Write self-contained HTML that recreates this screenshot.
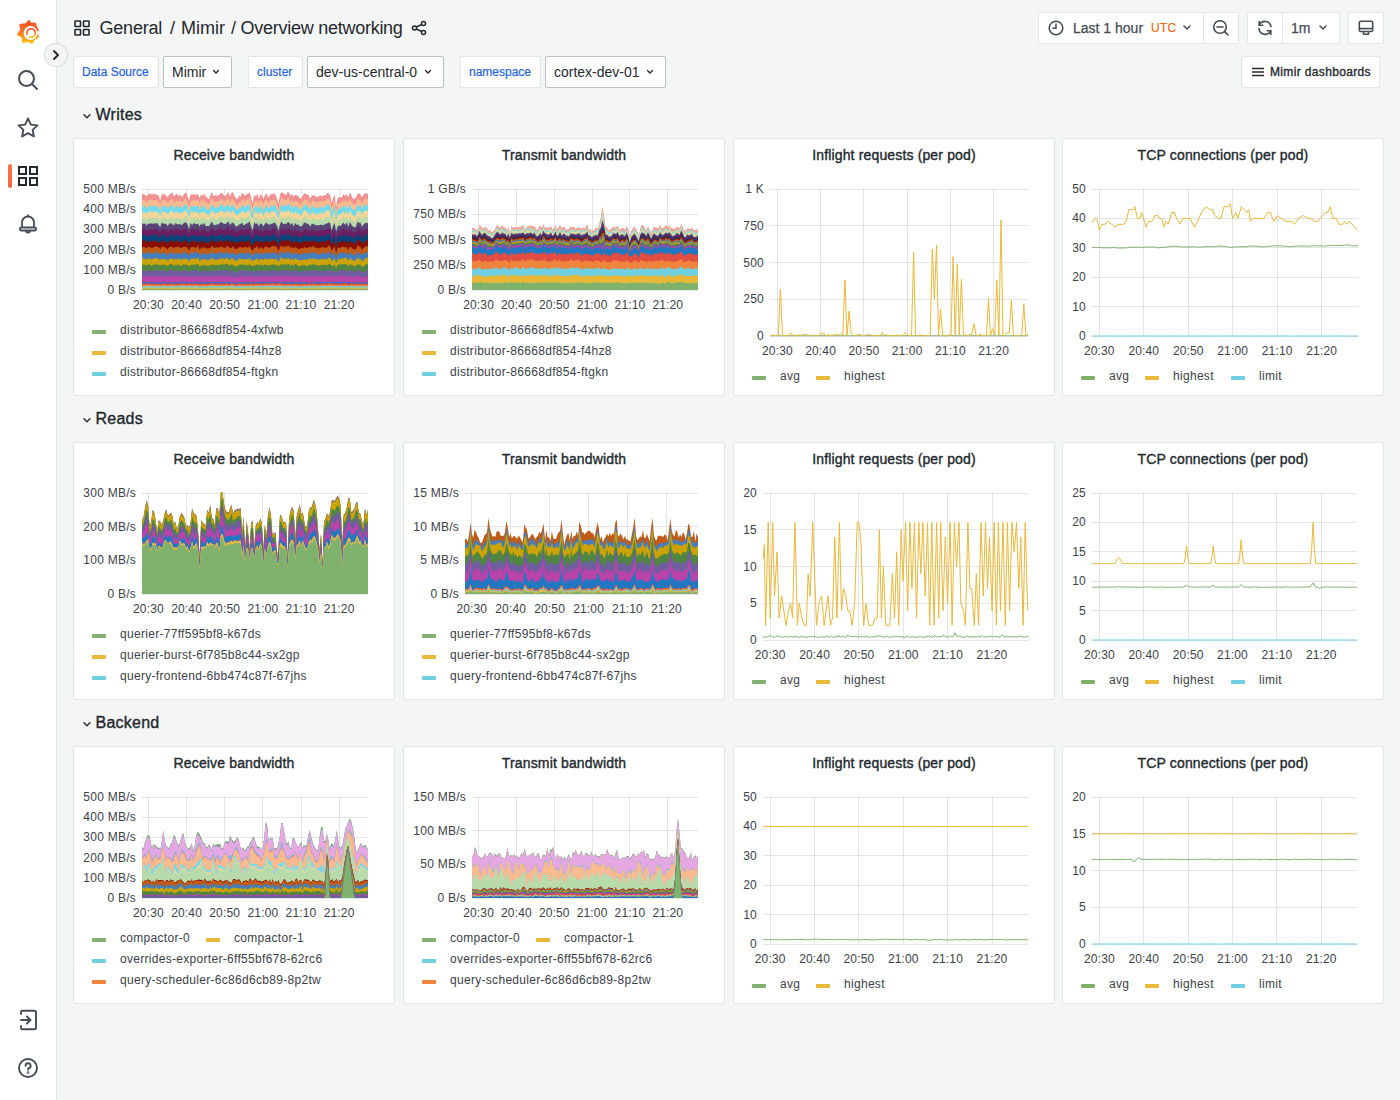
<!DOCTYPE html><html><head><meta charset="utf-8"><style>
*{box-sizing:border-box}
html,body{margin:0;padding:0}
body{width:1400px;height:1100px;overflow:hidden;position:relative;background:#F4F5F5;font-family:"Liberation Sans",sans-serif;color:#24292E}
div{position:absolute;white-space:nowrap}
.panel{background:#fff;border:1px solid rgba(36,41,46,0.12);border-radius:3px}
.ptitle{text-align:center;font-size:14px;font-weight:normal;letter-spacing:0.15px;line-height:20px;color:#24292E;-webkit-text-stroke:0.38px #24292E}
.yl{font-size:12px;line-height:14px;color:#3b4148;text-align:right;letter-spacing:0.25px}
.xl{font-size:12px;line-height:14px;color:#3b4148;width:32px;text-align:center;letter-spacing:0.15px}
.lg{width:14px;height:4px;border-radius:1px}
.lt{font-size:12px;line-height:16px;color:#3b4148;letter-spacing:0.3px}
.row{font-size:16px;font-weight:normal;color:#24292E;line-height:20px;-webkit-text-stroke:0.38px #24292E;letter-spacing:0.25px}
.box{background:#fff;border:1px solid rgba(36,41,46,0.12);border-radius:2px;height:32px}
.sel{background:#fff;border:1px solid rgba(36,41,46,0.30);border-radius:2px;height:32px}
.lbl{color:#1F62E0;font-size:12px;font-weight:normal;line-height:30px;-webkit-text-stroke:0.2px #1F62E0}
.stx{font-size:14px;line-height:30px;color:#24292E}
</style></head><body>
<div style="left:0;top:0;width:57px;height:1100px;background:#fff;border-right:1px solid rgba(36,41,46,0.12)"></div>
<svg style="position:absolute;left:16px;top:19px" width="24" height="26" viewBox="0 0 24 26">
<defs><linearGradient id="gl" x1="0" y1="0" x2="0" y2="1"><stop offset="0" stop-color="#F2502A"/><stop offset="0.45" stop-color="#F26B1F"/><stop offset="0.8" stop-color="#F9AA10"/><stop offset="1" stop-color="#FBBF0A"/></linearGradient></defs>
<path fill="url(#gl)" stroke="url(#gl)" stroke-width="0.6" stroke-linejoin="round" d="M3.5,5.4 L9.5,4.5 L12.9,1.1 L15.1,3.8 L19.6,4.1 L20.6,7.2 L22.7,11.6 L21.6,14.2 L22.7,18.4 L18,21.3 L16.3,24.6 L11.8,22.7 L6.6,23.6 L5.9,18.4 L1.2,15.4 L4.5,10.6Z"/>
<circle cx="14.6" cy="14.1" r="7.0" fill="#fff"/>
<path d="M14.5,14 L24,11.9 L24,14.3Z" fill="#fff"/>
<path d="M11.25,15.64 A4.2,4.2 0 1 1 13.9,18.0" fill="none" stroke="url(#gl)" stroke-width="1.6" stroke-linecap="round"/>

</svg>
<svg style="position:absolute;left:17px;top:69px" width="22" height="22" viewBox="0 0 22 22"><circle cx="9.5" cy="9.5" r="7.5" fill="none" stroke="#464c54" stroke-width="2"/><line x1="15" y1="15" x2="20" y2="20" stroke="#464c54" stroke-width="2" stroke-linecap="round"/></svg>
<svg style="position:absolute;left:16px;top:116px" width="24" height="24" viewBox="0 0 24 24"><path d="M12,2.5 L14.9,8.6 L21.5,9.4 L16.6,13.9 L17.9,20.5 L12,17.2 L6.1,20.5 L7.4,13.9 L2.5,9.4 L9.1,8.6Z" fill="none" stroke="#464c54" stroke-width="1.9" stroke-linejoin="round"/></svg>
<div style="left:8px;top:164px;width:4px;height:24px;border-radius:2px;background:linear-gradient(#FF7941,#F55F3E)"></div>
<svg style="position:absolute;left:17px;top:165px" width="22" height="22" viewBox="0 0 22 22" fill="none" stroke="#24292E" stroke-width="2"><rect x="2" y="2" width="7" height="7"/><rect x="13" y="2" width="7" height="7"/><rect x="2" y="13" width="7" height="7"/><rect x="13" y="13" width="7" height="7"/></svg>
<svg style="position:absolute;left:18px;top:213px" width="20" height="22" viewBox="0 0 20 22" fill="none" stroke="#464c54" stroke-width="1.8" stroke-linejoin="round"><path d="M10,1.5 V3.5"/><path d="M4,14.5 V9.5 A6,6 0 0 1 16,9.5 V14.5"/><rect x="2" y="14.5" width="16" height="3" rx="1"/><path d="M8,17.5 A2,2 0 0 0 12,17.5"/></svg>
<svg style="position:absolute;left:18px;top:1009px" width="22" height="22" viewBox="0 0 22 22" fill="none" stroke="#464c54" stroke-width="1.9" stroke-linecap="round" stroke-linejoin="round"><path d="M3,5 V3 A1.2,1.2 0 0 1 4.2,1.8 H16.8 A1.2,1.2 0 0 1 18,3 V19 A1.2,1.2 0 0 1 16.8,20.2 H4.2 A1.2,1.2 0 0 1 3,19 V17"/><path d="M3,11 H12"/><path d="M9,7.5 L12.5,11 L9,14.5"/></svg>
<svg style="position:absolute;left:17px;top:1057px" width="22" height="22" viewBox="0 0 22 22" fill="none" stroke="#464c54" stroke-width="1.9" stroke-linecap="round"><circle cx="11" cy="11" r="9"/><path d="M8.6,8.8 A2.5,2.5 0 1 1 11.8,11.2 Q11,11.6 11,12.6"/><circle cx="11" cy="15.6" r="0.4" fill="#464c54"/></svg>
<div style="left:44px;top:43px;width:24px;height:24px;border-radius:12px;background:#F4F5F5;border:1px solid rgba(36,41,46,0.12)"></div>
<svg style="position:absolute;left:50px;top:49px" width="12" height="12" viewBox="0 0 12 12"><path d="M4,2 L8,6 L4,10" fill="none" stroke="#24292E" stroke-width="1.9" stroke-linecap="round" stroke-linejoin="round"/></svg>
<svg style="position:absolute;left:74px;top:20px" width="16" height="16" viewBox="0 0 16 16" fill="none" stroke="#24292E" stroke-width="1.6"><rect x="1" y="1" width="5.5" height="5.5" rx="0.5"/><rect x="9.5" y="1" width="5.5" height="5.5" rx="0.5"/><rect x="1" y="9.5" width="5.5" height="5.5" rx="0.5"/><rect x="9.5" y="9.5" width="5.5" height="5.5" rx="0.5"/></svg>
<div style="left:99.5px;top:16px;font-size:18px;line-height:24px;color:#24292E;letter-spacing:-0.2px">General</div>
<div style="left:170px;top:16px;font-size:18px;line-height:24px;color:#24292E">/</div>
<div style="left:181px;top:16px;font-size:18px;line-height:24px;color:#24292E">Mimir</div>
<div style="left:231px;top:16px;font-size:18px;line-height:24px;color:#24292E">/</div>
<div style="left:240.5px;top:16px;font-size:18px;line-height:24px;color:#24292E;letter-spacing:-0.26px">Overview networking</div>
<svg style="position:absolute;left:411px;top:20px" width="16" height="16" viewBox="0 0 16 16" fill="none" stroke="#24292E" stroke-width="1.5"><circle cx="12.5" cy="3.5" r="2"/><circle cx="3.5" cy="8" r="2"/><circle cx="12.5" cy="12.5" r="2"/><path d="M5.3,7 L10.7,4.5 M5.3,9 L10.7,11.5"/></svg>
<div class="box" style="left:1038px;top:12px;width:201px;height:32px"></div>
<div style="left:1203px;top:13px;width:1px;height:30px;background:rgba(36,41,46,0.12)"></div>
<svg style="position:absolute;left:1048px;top:20px" width="16" height="16" viewBox="0 0 16 16" fill="none" stroke="#464c54" stroke-width="1.5"><circle cx="8" cy="8" r="6.8"/><path d="M8,4 V8.3 H5" stroke-linecap="round"/></svg>
<div style="left:1073px;top:14px;font-size:14px;line-height:28px;color:#464c54;-webkit-text-stroke:0.25px #464c54">Last 1 hour</div>
<div style="left:1151px;top:14px;font-size:12px;line-height:28px;color:#EF6B15;-webkit-text-stroke:0.2px #EF6B15;letter-spacing:0.3px">UTC</div>
<svg style="position:absolute;left:1182px;top:24px" width="10" height="8" viewBox="0 0 10 8"><path d="M2,2 L5,5 L8,2" fill="none" stroke="#464c54" stroke-width="1.5" stroke-linecap="round"/></svg>
<svg style="position:absolute;left:1212px;top:19px" width="18" height="18" viewBox="0 0 18 18" fill="none" stroke="#464c54" stroke-width="1.6"><circle cx="8" cy="8" r="6.3"/><path d="M5,8 H11" stroke-linecap="round"/><path d="M12.6,12.6 L16,16" stroke-linecap="round"/></svg>
<div class="box" style="left:1247px;top:12px;width:93px;height:32px"></div>
<div style="left:1282px;top:13px;width:1px;height:30px;background:rgba(36,41,46,0.12)"></div>
<svg style="position:absolute;left:1256px;top:19px" width="18" height="18" viewBox="0 0 18 18" fill="none" stroke="#464c54" stroke-width="1.6" stroke-linecap="round" stroke-linejoin="round"><path d="M15,7.5 A6.2,6.2 0 0 0 3.3,6"/><path d="M3,9.5 A6.2,6.2 0 0 0 14.7,12"/><path d="M3.2,2.5 V6.2 H6.8"/><path d="M14.8,15.5 V11.8 H11.2"/></svg>
<div style="left:1291px;top:14px;font-size:14px;line-height:28px;color:#464c54;-webkit-text-stroke:0.25px #464c54">1m</div>
<svg style="position:absolute;left:1318px;top:24px" width="10" height="8" viewBox="0 0 10 8"><path d="M2,2 L5,5 L8,2" fill="none" stroke="#464c54" stroke-width="1.5" stroke-linecap="round"/></svg>
<div class="box" style="left:1348px;top:12px;width:36px;height:32px"></div>
<svg style="position:absolute;left:1357px;top:19px" width="18" height="18" viewBox="0 0 18 18" fill="none" stroke="#464c54" stroke-width="1.6" stroke-linejoin="round"><rect x="2.3" y="2.2" width="13.4" height="10.3" rx="1.5"/><path d="M2.3,9.6 H15.7"/><path d="M6.5,12.5 V15.2 H11.5 V12.5"/></svg>
<div class="box" style="left:1241px;top:56px;width:139px;height:32px"></div>
<svg style="position:absolute;left:1251px;top:65px" width="14" height="14" viewBox="0 0 14 14" stroke="#24292E" stroke-width="1.4"><path d="M1,3.5 H13 M1,7 H13 M1,10.5 H13"/></svg>
<div style="left:1270px;top:57px;font-size:12px;line-height:30px;color:#24292E;letter-spacing:0.35px;-webkit-text-stroke:0.35px #24292E">Mimir dashboards</div>
<div class="box" style="left:73px;top:56px;width:86px"></div><div class="lbl" style="left:82px;top:57px">Data Source</div>
<div class="sel" style="left:163px;top:56px;width:69px"></div><div class="stx" style="left:172px;top:57px">Mimir</div>
<svg style="position:absolute;left:211px;top:68px" width="10" height="8" viewBox="0 0 10 8"><path d="M2.5,2.5 L5,5 L7.5,2.5" fill="none" stroke="#24292E" stroke-width="1.3" stroke-linecap="round"/></svg>
<div class="box" style="left:248px;top:56px;width:55px"></div><div class="lbl" style="left:257px;top:57px">cluster</div>
<div class="sel" style="left:307px;top:56px;width:137px"></div><div class="stx" style="left:316px;top:57px">dev-us-central-0</div>
<svg style="position:absolute;left:423px;top:68px" width="10" height="8" viewBox="0 0 10 8"><path d="M2.5,2.5 L5,5 L7.5,2.5" fill="none" stroke="#24292E" stroke-width="1.3" stroke-linecap="round"/></svg>
<div class="box" style="left:460px;top:56px;width:81px"></div><div class="lbl" style="left:469px;top:57px">namespace</div>
<div class="sel" style="left:545px;top:56px;width:121px"></div><div class="stx" style="left:554px;top:57px">cortex-dev-01</div>
<svg style="position:absolute;left:645px;top:68px" width="10" height="8" viewBox="0 0 10 8"><path d="M2.5,2.5 L5,5 L7.5,2.5" fill="none" stroke="#24292E" stroke-width="1.3" stroke-linecap="round"/></svg>
<svg style="position:absolute;left:82px;top:113px" width="10" height="8" viewBox="0 0 10 8"><path d="M2,1.8 L5,4.8 L8,1.8" fill="none" stroke="#24292E" stroke-width="1.4" stroke-linecap="round" stroke-linejoin="round"/></svg>
<div class="row" style="left:95.5px;top:105px">Writes</div>
<svg style="position:absolute;left:82px;top:417px" width="10" height="8" viewBox="0 0 10 8"><path d="M2,1.8 L5,4.8 L8,1.8" fill="none" stroke="#24292E" stroke-width="1.4" stroke-linecap="round" stroke-linejoin="round"/></svg>
<div class="row" style="left:95.5px;top:409px">Reads</div>
<svg style="position:absolute;left:82px;top:721px" width="10" height="8" viewBox="0 0 10 8"><path d="M2,1.8 L5,4.8 L8,1.8" fill="none" stroke="#24292E" stroke-width="1.4" stroke-linecap="round" stroke-linejoin="round"/></svg>
<div class="row" style="left:95.5px;top:713px">Backend</div>
<div class="panel" style="left:73px;top:138px;width:322px;height:258px"></div><div class="ptitle" style="left:73px;top:144.5px;width:322px">Receive bandwidth</div>
<svg style="position:absolute;left:142px;top:188px" width="226" height="103" viewBox="0 -1 226 103">
<line x1="0" x2="226" y1="101.5" y2="101.5" stroke="rgba(36,41,46,0.12)" stroke-width="1"/>
<line x1="0" x2="226" y1="80.5" y2="80.5" stroke="rgba(36,41,46,0.12)" stroke-width="1"/>
<line x1="0" x2="226" y1="60.5" y2="60.5" stroke="rgba(36,41,46,0.12)" stroke-width="1"/>
<line x1="0" x2="226" y1="40.5" y2="40.5" stroke="rgba(36,41,46,0.12)" stroke-width="1"/>
<line x1="0" x2="226" y1="20.5" y2="20.5" stroke="rgba(36,41,46,0.12)" stroke-width="1"/>
<line x1="0" x2="226" y1="0.5" y2="0.5" stroke="rgba(36,41,46,0.12)" stroke-width="1"/>
<line x1="6.5" x2="6.5" y1="0" y2="101" stroke="rgba(36,41,46,0.12)" stroke-width="1"/>
<line x1="44.5" x2="44.5" y1="0" y2="101" stroke="rgba(36,41,46,0.12)" stroke-width="1"/>
<line x1="82.5" x2="82.5" y1="0" y2="101" stroke="rgba(36,41,46,0.12)" stroke-width="1"/>
<line x1="120.5" x2="120.5" y1="0" y2="101" stroke="rgba(36,41,46,0.12)" stroke-width="1"/>
<line x1="159.5" x2="159.5" y1="0" y2="101" stroke="rgba(36,41,46,0.12)" stroke-width="1"/>
<line x1="197.5" x2="197.5" y1="0" y2="101" stroke="rgba(36,41,46,0.12)" stroke-width="1"/>
<path d="M0,101 L0,5.6 1.5,5.1 3,6 4.6,7.3 6.1,5.3 7.6,4.6 9.1,5.2 10.6,5.2 12.1,5.3 13.7,5.1 15.2,6.1 16.7,6.4 18.2,11.7 19.7,4.9 21.2,5.6 22.8,5.1 24.3,6.9 25.8,8 27.3,5.8 28.8,4.8 30.3,3 31.9,7.8 33.4,5.8 34.9,4.6 36.4,7 37.9,5.2 39.4,7.4 41,7 42.5,4.3 44,4.1 45.5,7.2 47,11.8 48.5,4.9 50.1,5.8 51.6,5.2 53.1,5.6 54.6,5.6 56.1,5.5 57.6,9.2 59.2,4.9 60.7,7.2 62.2,4.6 63.7,7.5 65.2,8.8 66.7,10.5 68.3,6.6 69.8,2.8 71.3,6.5 72.8,6.8 74.3,6.2 75.8,6.6 77.4,6 78.9,3.5 80.4,4.6 81.9,6.6 83.4,6.9 84.9,5 86.5,3.1 88,8.1 89.5,3.7 91,3.3 92.5,7 94,9.3 95.6,10 97.1,6.6 98.6,7.7 100.1,4.1 101.6,4.7 103.1,6.9 104.7,5 106.2,5 107.7,3.1 109.2,9.4 110.7,13.9 112.2,5.7 113.8,7.8 115.3,4.4 116.8,9.8 118.3,5.2 119.8,6.5 121.3,9.6 122.9,6.5 124.4,3.9 125.9,8.3 127.4,7.6 128.9,4.9 130.4,5.2 132,4.2 133.5,6 135,9.3 136.5,15.1 138,6.1 139.5,2.7 141.1,4.6 142.6,4.9 144.1,6.5 145.6,2.8 147.1,3.9 148.6,7.1 150.2,5 151.7,7.8 153.2,5.8 154.7,6.2 156.2,7 157.7,9 159.3,9.8 160.8,6.4 162.3,4.5 163.8,5.1 165.3,5.6 166.8,6.5 168.4,10.1 169.9,6.2 171.4,6.5 172.9,6.3 174.4,8.5 175.9,7.6 177.5,7 179,6.2 180.5,7.5 182,6.1 183.5,6.5 185,3.9 186.6,4.5 188.1,5.9 189.6,14.3 191.1,9.2 192.6,5.2 194.1,17.4 195.7,8.8 197.2,8.1 198.7,8.7 200.2,7.4 201.7,5.1 203.2,7 204.8,5.1 206.3,8.6 207.8,3.3 209.3,6.1 210.8,9.4 212.3,10.1 213.9,8.5 215.4,5.2 216.9,4.3 218.4,5.2 219.9,8.6 221.4,6 223,4.3 224.5,4.4 226,5.3 L226,101Z" fill="#F29191"/><path d="M0,101 L0,10.7 1.5,11.4 3,11.6 4.6,13.3 6.1,11.4 7.6,10.6 9.1,11.1 10.6,10.8 12.1,11.2 13.7,11 15.2,12.1 16.7,11.6 18.2,16.7 19.7,10.4 21.2,11.8 22.8,11 24.3,12 25.8,14.2 27.3,12.1 28.8,10.7 30.3,9.6 31.9,13.9 33.4,12 34.9,11 36.4,13 37.9,10.8 39.4,13 41,12.5 42.5,10 44,9.8 45.5,12.7 47,18 48.5,10.9 50.1,11.9 51.6,11.1 53.1,11.7 54.6,11.5 56.1,11.1 57.6,15 59.2,10.1 60.7,12.9 62.2,10.4 63.7,13.3 65.2,14.4 66.7,15.7 68.3,12.6 69.8,8.4 71.3,12 72.8,13.2 74.3,11.9 75.8,12.4 77.4,11.7 78.9,9.5 80.4,10.3 81.9,12 83.4,12.3 84.9,10.3 86.5,9 88,13.7 89.5,9.8 91,9.4 92.5,12.6 94,15.4 95.6,15.7 97.1,12.9 98.6,13.8 100.1,10.1 101.6,11.1 103.1,12.7 104.7,10.6 106.2,11 107.7,8.8 109.2,16.1 110.7,19.1 112.2,11.2 113.8,13.3 115.3,10.9 116.8,15.1 118.3,10.8 119.8,12.2 121.3,15.2 122.9,12.3 124.4,10 125.9,13.6 127.4,13.2 128.9,10.9 130.4,11.2 132,10.4 133.5,11.5 135,14.2 136.5,20.4 138,12.4 139.5,8.6 141.1,10.7 142.6,10.6 144.1,12.1 145.6,8.7 147.1,9.1 148.6,13.1 150.2,10.8 151.7,13.9 153.2,11.4 154.7,12.3 156.2,12.9 157.7,15 159.3,15 160.8,11.7 162.3,9.7 163.8,11 165.3,11.2 166.8,12.5 168.4,15.7 169.9,11.5 171.4,12 172.9,12.1 174.4,14.1 175.9,13.3 177.5,12.8 179,11.8 180.5,12.9 182,11.9 183.5,11.6 185,9.5 186.6,10 188.1,11.6 189.6,19.7 191.1,14.9 192.6,11.1 194.1,22.6 195.7,14.4 197.2,14.1 198.7,14.1 200.2,12.9 201.7,11 203.2,13 204.8,11 206.3,14.2 207.8,9.2 209.3,12.2 210.8,14.8 212.3,16.2 213.9,14.5 215.4,10.5 216.9,10.8 218.4,10.7 219.9,14.8 221.4,11.4 223,10 224.5,9.5 226,10.8 L226,101Z" fill="#F9BA8F"/><path d="M0,101 L0,16.4 1.5,17.6 3,17.5 4.6,19.3 6.1,17.4 7.6,17.2 9.1,16.8 10.6,17.3 12.1,16.5 13.7,17 15.2,18.2 16.7,17.3 18.2,22.4 19.7,16.6 21.2,17.5 22.8,16.8 24.3,17.7 25.8,19.5 27.3,17.8 28.8,16.6 30.3,15.6 31.9,19.7 33.4,17.6 34.9,16.7 36.4,18.7 37.9,17 39.4,18.9 41,17.5 42.5,15.7 44,15.8 45.5,17.6 47,23.6 48.5,16.7 50.1,18.1 51.6,16.7 53.1,17.4 54.6,17.3 56.1,17 57.6,21.1 59.2,16 60.7,19.1 62.2,16.1 63.7,19.1 65.2,20.2 66.7,21.3 68.3,18.5 69.8,14.8 71.3,17.6 72.8,19 74.3,17.9 75.8,18.7 77.4,17.7 78.9,15 80.4,16.5 81.9,17.6 83.4,18 84.9,16.5 86.5,15.2 88,19.1 89.5,16.3 91,15.3 92.5,18.7 94,20.1 95.6,21.2 97.1,18.7 98.6,19.3 100.1,15.8 101.6,16.9 103.1,18.7 104.7,16.6 106.2,16.4 107.7,14.6 109.2,21.6 110.7,25.3 112.2,17 113.8,18.9 115.3,16.7 116.8,20.3 118.3,16.6 119.8,18.3 121.3,21.4 122.9,18.8 124.4,15.6 125.9,19 127.4,18.9 128.9,16.8 130.4,17 132,16.6 133.5,17.1 135,19.9 136.5,25.9 138,18.3 139.5,15 141.1,17.3 142.6,16.6 144.1,17.6 145.6,15.1 147.1,14.6 148.6,18.8 150.2,16.2 151.7,19.4 153.2,16.8 154.7,18.1 156.2,18.2 157.7,20.4 159.3,20.4 160.8,18 162.3,15.4 163.8,16.4 165.3,16.8 166.8,19.2 168.4,21 169.9,16.7 171.4,17.8 172.9,18 174.4,20.1 175.9,18.5 177.5,18.6 179,17.4 180.5,19.2 182,18.1 183.5,16.7 185,15.7 186.6,15.7 188.1,17.3 189.6,25 191.1,20 192.6,16.7 194.1,27.4 195.7,20.2 197.2,19.6 198.7,19.9 200.2,18.3 201.7,16.3 203.2,19.1 204.8,16.2 206.3,20.4 207.8,15.3 209.3,18 210.8,20.6 212.3,21.3 213.9,20.3 215.4,15.6 216.9,16.7 218.4,16.4 219.9,20.5 221.4,16.5 223,16.1 224.5,15.9 226,16.6 L226,101Z" fill="#70DBED"/><path d="M0,101 L0,22.8 1.5,23.6 3,23.3 4.6,25.1 6.1,23 7.6,22.5 9.1,22.6 10.6,23.2 12.1,22.2 13.7,22.8 15.2,23.2 16.7,23.5 18.2,27.5 19.7,22 21.2,23.6 22.8,23.1 24.3,23.6 25.8,25.6 27.3,23.7 28.8,22.3 30.3,22 31.9,24.6 33.4,22.9 34.9,22.5 36.4,24.8 37.9,23 39.4,24.7 41,23.2 42.5,21.8 44,21.4 45.5,23.4 47,29.3 48.5,22 50.1,23.6 51.6,22.5 53.1,23.3 54.6,23.6 56.1,22.5 57.6,26.2 59.2,22.2 60.7,24.3 62.2,22.3 63.7,24.6 65.2,25.7 66.7,26.6 68.3,23.9 69.8,20.9 71.3,23.6 72.8,23.9 74.3,23.7 75.8,24 77.4,23.5 78.9,21 80.4,21.9 81.9,23.5 83.4,23.8 84.9,22.5 86.5,21 88,24.6 89.5,22.4 91,21.3 92.5,23.8 94,25.8 95.6,26.6 97.1,24.4 98.6,24.3 100.1,21.4 101.6,23.5 103.1,24 104.7,22.4 106.2,22.9 107.7,20.6 109.2,27.7 110.7,30.6 112.2,22.2 113.8,24.3 115.3,22.7 116.8,25.8 118.3,22.3 119.8,23.9 121.3,26.5 122.9,23.6 124.4,21.7 125.9,24.2 127.4,24.3 128.9,22.6 130.4,22.8 132,22.2 133.5,23 135,25.7 136.5,31 138,23.7 139.5,21.2 141.1,23.1 142.6,22.3 144.1,23.3 145.6,21.3 147.1,21.2 148.6,24.6 150.2,21.9 151.7,25.4 153.2,22.8 154.7,24.2 156.2,24 157.7,25.8 159.3,26.3 160.8,23.5 162.3,21.1 163.8,22 165.3,22.8 166.8,24.5 168.4,26.5 169.9,23.1 171.4,23.9 172.9,24 174.4,26.2 175.9,24.9 177.5,24.1 179,23.2 180.5,25.2 182,23.8 183.5,22.6 185,21.3 186.6,21.7 188.1,23.2 189.6,30.7 191.1,26.1 192.6,22.7 194.1,31.9 195.7,26 197.2,25.4 198.7,25.6 200.2,23.7 201.7,22.3 203.2,25 204.8,21.9 206.3,26.2 207.8,21.3 209.3,23.5 210.8,26.8 212.3,26.8 213.9,26.3 215.4,21.2 216.9,22.4 218.4,21.9 219.9,26.1 221.4,22.4 223,21.9 224.5,21.8 226,22 L226,101Z" fill="#F4D598"/><path d="M0,101 L0,28.6 1.5,29.3 3,29.2 4.6,30.9 6.1,28.7 7.6,28.5 9.1,28.9 10.6,28.8 12.1,28.7 13.7,28.7 15.2,28.5 16.7,29.4 18.2,32.9 19.7,27.9 21.2,28.8 22.8,29.1 24.3,29.7 25.8,31 27.3,29.2 28.8,28.4 30.3,28.6 31.9,31 33.4,28.2 34.9,29 36.4,30.3 37.9,28.8 39.4,30.4 41,29.5 42.5,28 44,27.2 45.5,29.3 47,34.5 48.5,27.9 50.1,30 51.6,28.4 53.1,29 54.6,29.9 56.1,28.2 57.6,32.1 59.2,28.1 60.7,30.2 62.2,27.9 63.7,30.4 65.2,31.3 66.7,31.9 68.3,28.8 69.8,26.6 71.3,29.3 72.8,30.2 74.3,30 75.8,29.3 77.4,28.9 78.9,27 80.4,27.7 81.9,29 83.4,29.2 84.9,28.1 86.5,26.7 88,30 89.5,28.4 91,27.7 92.5,29.6 94,31.8 95.6,31.7 97.1,29.9 98.6,29.5 100.1,27.5 101.6,29.7 103.1,29.5 104.7,28.1 106.2,28.4 107.7,26.3 109.2,33 110.7,36.2 112.2,27.7 113.8,29.6 115.3,28.1 116.8,31.5 118.3,28.5 119.8,29.8 121.3,32.4 122.9,29.2 124.4,27.2 125.9,30.1 127.4,30.4 128.9,28.8 130.4,28.6 132,27.5 133.5,28.5 135,31.3 136.5,36.3 138,29.5 139.5,27.4 141.1,29.2 142.6,28.4 144.1,29.6 145.6,27.3 147.1,27.5 148.6,30.3 150.2,27.5 151.7,31.8 153.2,28.6 154.7,30.8 156.2,29 157.7,31.7 159.3,32.1 160.8,30.1 162.3,27.3 163.8,27.7 165.3,28.8 166.8,30.1 168.4,32.1 169.9,29.1 171.4,29.7 172.9,30.4 174.4,31 175.9,30.6 177.5,30.1 179,29.4 180.5,31 182,29.6 183.5,28.6 185,28.2 186.6,27.8 188.1,28.6 189.6,35.8 191.1,32 192.6,28.2 194.1,37.4 195.7,31.8 197.2,31.1 198.7,31.5 200.2,29 201.7,27.9 203.2,30.7 204.8,27.7 206.3,32.1 207.8,27.1 209.3,30.1 210.8,32 212.3,32.7 213.9,32.3 215.4,26.8 216.9,28.3 218.4,27.5 219.9,31.8 221.4,28.3 223,28 224.5,27.8 226,28.2 L226,101Z" fill="#B7DBAB"/><path d="M0,101 L0,34.4 1.5,34.8 3,34.6 4.6,36.4 6.1,34.4 7.6,34.7 9.1,34.3 10.6,34.7 12.1,34.4 13.7,34.4 15.2,34 16.7,36 18.2,38.3 19.7,33.6 21.2,34.8 22.8,34.5 24.3,35.2 25.8,36.9 27.3,34.6 28.8,34.2 30.3,34.9 31.9,36.4 33.4,34 34.9,35.1 36.4,35.5 37.9,34.8 39.4,36.2 41,34.7 42.5,33.7 44,33.2 45.5,35.4 47,39.9 48.5,34.1 50.1,35.9 51.6,34.3 53.1,34.5 54.6,35.6 56.1,34.2 57.6,37.8 59.2,34.3 60.7,36.1 62.2,33.7 63.7,37 65.2,36.9 66.7,37.3 68.3,35 69.8,32.5 71.3,35.5 72.8,36.4 74.3,35.2 75.8,35.7 77.4,34.5 78.9,32.8 80.4,34.1 81.9,34.7 83.4,35 84.9,34.1 86.5,32.3 88,36.1 89.5,34.3 91,33.4 92.5,35.2 94,37.8 95.6,36.7 97.1,35.5 98.6,35.1 100.1,33.5 101.6,36.5 103.1,35.6 104.7,34.4 106.2,33.8 107.7,32.6 109.2,38.3 110.7,41.3 112.2,33.3 113.8,34.9 115.3,34.2 116.8,37.6 118.3,34.6 119.8,35 121.3,37.4 122.9,34.8 124.4,33.6 125.9,35.2 127.4,35.8 128.9,35.1 130.4,34.7 132,33.6 133.5,34.2 135,37.1 136.5,41.5 138,35.2 139.5,32.5 141.1,34.9 142.6,34.7 144.1,35.1 145.6,33.3 147.1,33.3 148.6,36 150.2,33.7 151.7,37.5 153.2,33.9 154.7,36 156.2,35.2 157.7,37.5 159.3,37.2 160.8,36.1 162.3,33.1 163.8,34.2 165.3,34.4 166.8,35.4 168.4,37.4 169.9,34.5 171.4,35.1 172.9,35.8 174.4,36.5 175.9,36 177.5,36.2 179,35.5 180.5,36.3 182,35.9 183.5,34.7 185,34.5 186.6,33.5 188.1,34 189.6,41.6 191.1,37 192.6,33.8 194.1,42.5 195.7,37.3 197.2,36.6 198.7,37.1 200.2,34.7 201.7,33.7 203.2,36.1 204.8,33.4 206.3,38.1 207.8,33 209.3,35.6 210.8,37.5 212.3,38.3 213.9,38 215.4,32.5 216.9,34 218.4,33.6 219.9,37.8 221.4,35.4 223,34.3 224.5,33.8 226,34.3 L226,101Z" fill="#584477"/><path d="M0,101 L0,40.1 1.5,40.2 3,40.4 4.6,41.5 6.1,40 7.6,41.2 9.1,39.8 10.6,40.4 12.1,40.5 13.7,40.4 15.2,39.7 16.7,41.9 18.2,43.6 19.7,39.3 21.2,40.3 22.8,40.5 24.3,41.1 25.8,42.8 27.3,40.6 28.8,40.1 30.3,40.6 31.9,42.2 33.4,39.6 34.9,40 36.4,41 37.9,40.5 39.4,42.1 41,40.6 42.5,40 44,39.5 45.5,41.7 47,45.3 48.5,40.3 50.1,40.9 51.6,39.7 53.1,41 54.6,41.4 56.1,39.9 57.6,43.7 59.2,40.3 60.7,41.7 62.2,39.4 63.7,42.2 65.2,42.7 66.7,43 68.3,41.1 69.8,38.3 71.3,41.1 72.8,42 74.3,40.7 75.8,41 77.4,40.5 78.9,38.4 80.4,40.7 81.9,40.6 83.4,41.3 84.9,39.3 86.5,38 88,42.2 89.5,40.4 91,39.4 92.5,41.2 94,43.3 95.6,42.2 97.1,41.1 98.6,40.4 100.1,39.8 101.6,41.9 103.1,41 104.7,40.2 106.2,40.3 107.7,38.6 109.2,44.2 110.7,46.6 112.2,39.6 113.8,40.9 115.3,39.4 116.8,43 118.3,40.4 119.8,40.9 121.3,43 122.9,40.7 124.4,39.8 125.9,40.8 127.4,42.1 128.9,41.4 130.4,39.4 132,39.1 133.5,40.3 135,42.6 136.5,46.7 138,41.3 139.5,38.7 141.1,40.5 142.6,39.6 144.1,41.1 145.6,39.5 147.1,39.3 148.6,41.9 150.2,39.8 151.7,43.5 153.2,39.5 154.7,41.9 156.2,41.2 157.7,43 159.3,42.8 160.8,42.3 162.3,39.7 163.8,40.3 165.3,41 166.8,41.2 168.4,43.1 169.9,40.7 171.4,40.7 172.9,41.4 174.4,41.9 175.9,41.7 177.5,41.8 179,40.8 180.5,41.5 182,41.8 183.5,40.8 185,40.1 186.6,39.1 188.1,39.7 189.6,45.5 191.1,42.5 192.6,40 194.1,48.1 195.7,42.8 197.2,42.3 198.7,42.2 200.2,40 201.7,39.5 203.2,41.5 204.8,39.8 206.3,44.3 207.8,39 209.3,41.6 210.8,43.1 212.3,43.7 213.9,43 215.4,38.5 216.9,40.1 218.4,39.7 219.9,43.5 221.4,41.7 223,40.2 224.5,39.7 226,40 L226,101Z" fill="#6D1F62"/><path d="M0,101 L0,46.5 1.5,45.5 3,46 4.6,47.5 6.1,46.2 7.6,46.6 9.1,46.4 10.6,45.9 12.1,46 13.7,45.5 15.2,45.9 16.7,48 18.2,49.3 19.7,45.1 21.2,46.2 22.8,46.3 24.3,47.6 25.8,48.9 27.3,46.8 28.8,45.3 30.3,45.8 31.9,48.4 33.4,45.6 34.9,46 36.4,46.8 37.9,46.4 39.4,47.7 41,46.7 42.5,45.2 44,45.3 45.5,47.2 47,50.5 48.5,46 50.1,46.7 51.6,45.5 53.1,47.4 54.6,46.9 56.1,45.4 57.6,49.5 59.2,46 60.7,47.6 62.2,45.5 63.7,48.1 65.2,48.1 66.7,49.1 68.3,46.9 69.8,44.2 71.3,46.9 72.8,47.6 74.3,46.3 75.8,46.8 77.4,46.4 78.9,44.4 80.4,46.1 81.9,46.7 83.4,46.7 84.9,45.5 86.5,44.8 88,47.5 89.5,46.5 91,45.7 92.5,46.9 94,49.7 95.6,47.4 97.1,46.7 98.6,46.4 100.1,46.2 101.6,47.6 103.1,46.4 104.7,46.3 106.2,46.8 107.7,44.6 109.2,49.7 110.7,51.4 112.2,46.3 113.8,46.8 115.3,44.6 116.8,48.1 118.3,46.7 119.8,47.2 121.3,48.8 122.9,46.3 124.4,45.9 125.9,46.9 127.4,48 128.9,46.8 130.4,45.3 132,45.8 133.5,45.6 135,48 136.5,51.6 138,46.8 139.5,45.2 141.1,46.7 142.6,45.1 144.1,46.5 145.6,45.3 147.1,44.8 148.6,47.9 150.2,45.7 151.7,48.7 153.2,46 154.7,47.4 156.2,47.5 157.7,48.8 159.3,48.2 160.8,47.3 162.3,45.3 163.8,46.6 165.3,47.3 166.8,46.7 168.4,47.9 169.9,46.6 171.4,46 172.9,47 174.4,47.2 175.9,47.9 177.5,47.3 179,46.6 180.5,47.2 182,47.3 183.5,46.8 185,46.1 186.6,45 188.1,45.3 189.6,51 191.1,47.9 192.6,45.8 194.1,53.3 195.7,47.3 197.2,47.5 198.7,47.8 200.2,46.5 201.7,45.8 203.2,47.1 204.8,46.1 206.3,49.8 207.8,45.2 209.3,47.3 210.8,48.5 212.3,48.5 213.9,48.7 215.4,44.7 216.9,45.9 218.4,46.8 219.9,49 221.4,48 223,46.4 224.5,45.6 226,45.7 L226,101Z" fill="#0A437C"/><path d="M0,101 L0,52 1.5,51.4 3,51.5 4.6,53.5 6.1,52.1 7.6,52.6 9.1,52.6 10.6,51.8 12.1,52.1 13.7,51.9 15.2,52 16.7,53 18.2,55.1 19.7,51 21.2,52.2 22.8,52.8 24.3,53.3 25.8,54.9 27.3,51.9 28.8,51.7 30.3,51.6 31.9,54.1 33.4,51.3 34.9,52.1 36.4,52 37.9,53 39.4,53.6 41,52.5 42.5,51.5 44,51.4 45.5,53.2 47,55.7 48.5,52.2 50.1,52.6 51.6,51.1 53.1,53.3 54.6,52.9 56.1,51 57.6,55.6 59.2,51.7 60.7,53.7 62.2,51.5 63.7,54.1 65.2,53.5 66.7,54.5 68.3,52.8 69.8,50.1 71.3,52.6 72.8,53.6 74.3,52.1 75.8,52.6 77.4,52.7 78.9,50.8 80.4,52.5 81.9,52.7 83.4,52.3 84.9,51.3 86.5,51.1 88,53.4 89.5,52.9 91,51.4 92.5,53.1 94,55.1 95.6,53.1 97.1,52.7 98.6,52.5 100.1,52.1 101.6,53.1 103.1,52.3 104.7,52.1 106.2,52.4 107.7,50.6 109.2,55.2 110.7,56.5 112.2,52.9 113.8,52.7 115.3,51 116.8,53.8 118.3,52.3 119.8,52.6 121.3,54.1 122.9,51.7 124.4,51.9 125.9,52.3 127.4,53.4 128.9,52.4 130.4,51.4 132,51.4 133.5,51.5 135,53.3 136.5,57 138,52.5 139.5,51.3 141.1,52.1 142.6,50.9 144.1,52.3 145.6,50.9 147.1,50.9 148.6,53.8 150.2,51.7 151.7,54.3 153.2,51.9 154.7,52.6 156.2,53.5 157.7,54.1 159.3,53.5 160.8,53.1 162.3,51.3 163.8,52.5 165.3,52.4 166.8,52.1 168.4,53.3 169.9,52.3 171.4,51.1 172.9,52.4 174.4,53.1 175.9,53.7 177.5,53.3 179,52.4 180.5,52.4 182,52.7 183.5,52.6 185,52 186.6,50.7 188.1,51.3 189.6,56.1 191.1,53.4 192.6,51.6 194.1,58.6 195.7,52.8 197.2,53.2 198.7,53.1 200.2,52 201.7,52.1 203.2,52.4 204.8,52.4 206.3,55.3 207.8,51.5 209.3,53 210.8,53.9 212.3,53.9 213.9,54.5 215.4,50.6 216.9,51.3 218.4,52.1 219.9,54.7 221.4,53.6 223,51.9 224.5,51.3 226,52 L226,101Z" fill="#890F02"/><path d="M0,101 L0,58.8 1.5,57.6 3,58.2 4.6,59.5 6.1,57.3 7.6,58.3 9.1,59 10.6,58.7 12.1,58.2 13.7,57.2 15.2,57.9 16.7,58.1 18.2,60.6 19.7,57.4 21.2,57.8 22.8,58.3 24.3,59 25.8,60.7 27.3,58.1 28.8,57.7 30.3,57.8 31.9,59.6 33.4,57.6 34.9,58.2 36.4,57.6 37.9,58.7 39.4,59.3 41,57.7 42.5,58 44,57.4 45.5,59 47,61.7 48.5,57.9 50.1,58.5 51.6,57.5 53.1,58.8 54.6,58.5 56.1,56.2 57.6,61.2 59.2,57.9 60.7,59.3 62.2,57.8 63.7,59.7 65.2,59.3 66.7,59.5 68.3,58.9 69.8,56.7 71.3,58.4 72.8,58.9 74.3,57.9 75.8,58.8 77.4,58.2 78.9,57.4 80.4,57.9 81.9,58.7 83.4,58.7 84.9,57.2 86.5,57.4 88,59.5 89.5,58.7 91,57.2 92.5,59.7 94,60.3 95.6,59 97.1,58.3 98.6,58.2 100.1,58.4 101.6,58.7 103.1,57.6 104.7,58.4 106.2,58.8 107.7,56.5 109.2,60.6 110.7,61.5 112.2,58.7 113.8,58.7 115.3,57 116.8,59.9 118.3,58.2 119.8,58.7 121.3,59.9 122.9,57.7 124.4,57.6 125.9,58.2 127.4,58.9 128.9,58.1 130.4,56.8 132,57.4 133.5,57.1 135,58.6 136.5,61.9 138,58 139.5,56.8 141.1,58.2 142.6,56.9 144.1,58.5 145.6,56.5 147.1,56.8 148.6,58.9 150.2,57.9 151.7,59.8 153.2,58.1 154.7,58.7 156.2,60.1 157.7,60 159.3,58.8 160.8,59.7 162.3,57.7 163.8,58.9 165.3,59 166.8,57.9 168.4,58.3 169.9,58 171.4,56.7 172.9,58.4 174.4,58.7 175.9,59.7 177.5,58.8 179,58.6 180.5,58.3 182,58.2 183.5,58.9 185,58.4 186.6,56.8 188.1,56.9 189.6,61.7 191.1,59.3 192.6,57.2 194.1,63.9 195.7,58.5 197.2,58.5 198.7,58.9 200.2,57.4 201.7,57.9 203.2,58.2 204.8,58.6 206.3,61 207.8,57.4 209.3,58.3 210.8,60.1 212.3,60.1 213.9,60.2 215.4,56.6 216.9,57.4 218.4,57.9 219.9,60.9 221.4,59.2 223,57.7 224.5,57.1 226,57.7 L226,101Z" fill="#C15C17"/><path d="M0,101 L0,64.6 1.5,63.1 3,64.1 4.6,65.2 6.1,62.9 7.6,63.4 9.1,64.7 10.6,64.8 12.1,63.8 13.7,62.9 15.2,63.6 16.7,64.1 18.2,65.4 19.7,63.4 21.2,64.3 22.8,64.3 24.3,64.8 25.8,66.6 27.3,64.1 28.8,63.4 30.3,63.5 31.9,65.4 33.4,63.6 34.9,64.8 36.4,63.4 37.9,65.3 39.4,64.8 41,63.8 42.5,63.6 44,63.2 45.5,64.7 47,66.5 48.5,63.6 50.1,64.5 51.6,63.5 53.1,64.1 54.6,63.8 56.1,62.2 57.6,66.6 59.2,64.4 60.7,65.2 62.2,63.8 63.7,65.4 65.2,64.8 66.7,64.9 68.3,64.5 69.8,63.1 71.3,64.3 72.8,64.8 74.3,64.2 75.8,65 77.4,63.3 78.9,63.9 80.4,63.1 81.9,64.2 83.4,64.4 84.9,62.8 86.5,63.9 88,65.4 89.5,64.1 91,62.9 92.5,65.2 94,65.9 95.6,65 97.1,64.3 98.6,64 100.1,63.8 101.6,64.4 103.1,63.8 104.7,64.5 106.2,64.6 107.7,62.7 109.2,65.7 110.7,66.6 112.2,64.5 113.8,64.6 115.3,63.2 116.8,65.7 118.3,64.1 119.8,64.5 121.3,65.3 122.9,63.4 124.4,63.9 125.9,64.3 127.4,64.6 128.9,63.9 130.4,63.2 132,63.7 133.5,63.5 135,64.8 136.5,67.1 138,63.7 139.5,62.2 141.1,64.6 142.6,63.3 144.1,65.1 145.6,62 147.1,63.3 148.6,65 150.2,63.8 151.7,65.7 153.2,63.6 154.7,64.4 156.2,65.5 157.7,65.6 159.3,64.4 160.8,65.3 162.3,63.8 163.8,64.5 165.3,64.8 166.8,63.6 168.4,64.2 169.9,63.9 171.4,62.8 172.9,64.1 174.4,64.3 175.9,65.6 177.5,65.2 179,64.7 180.5,63.4 182,64.1 183.5,64.6 185,64.2 186.6,63 188.1,62.7 189.6,67.1 191.1,64.5 192.6,63 194.1,68.9 195.7,64.3 197.2,64.7 198.7,64.3 200.2,63.1 201.7,64 203.2,63.4 204.8,64.2 206.3,66.3 207.8,63 209.3,64.2 210.8,65.8 212.3,66.1 213.9,66.4 215.4,62.5 216.9,63.7 218.4,64.4 219.9,66.6 221.4,65 223,63.7 224.5,63.4 226,62.8 L226,101Z" fill="#447EBC"/><path d="M0,101 L0,70 1.5,68.8 3,69.9 4.6,70.8 6.1,69 7.6,69.8 9.1,70.5 10.6,70.1 12.1,69.2 13.7,69.1 15.2,69.7 16.7,69.9 18.2,71 19.7,69.5 21.2,70.1 22.8,70.2 24.3,70.6 25.8,71.8 27.3,70 28.8,69.2 30.3,69.5 31.9,71 33.4,69.6 34.9,70.8 36.4,69.1 37.9,70.8 39.4,70.4 41,69.7 42.5,69.7 44,69.6 45.5,70.5 47,72.2 48.5,69.8 50.1,70 51.6,69.6 53.1,69.8 54.6,69.6 56.1,68.3 57.6,72.3 59.2,70.3 60.7,70.6 62.2,69.5 63.7,70.9 65.2,70.4 66.7,71.3 68.3,70.2 69.8,68.8 71.3,70 72.8,70.4 74.3,70.7 75.8,70.6 77.4,70 78.9,69.6 80.4,69.3 81.9,70 83.4,70 84.9,68.5 86.5,70.2 88,71.1 89.5,69.3 91,69.4 92.5,70.8 94,71.7 95.6,71.3 97.1,69.6 98.6,69.7 100.1,69.9 101.6,70.5 103.1,69.9 104.7,70 106.2,70.8 107.7,68.4 109.2,71.5 110.7,71.6 112.2,70.9 113.8,70.2 115.3,69 116.8,71.4 118.3,70 119.8,69.9 121.3,71.1 122.9,69.1 124.4,70.3 125.9,70 127.4,70.3 128.9,69.8 130.4,69.5 132,70.2 133.5,69.4 135,70.6 136.5,72.9 138,69.5 139.5,68.2 141.1,70.3 142.6,69.1 144.1,70.7 145.6,68.7 147.1,69.5 148.6,71.1 150.2,69.3 151.7,71.6 153.2,69.1 154.7,70 156.2,70.9 157.7,71.2 159.3,70.9 160.8,70.9 162.3,70 163.8,70.8 165.3,70.9 166.8,69.7 168.4,69.6 169.9,70.2 171.4,69.3 172.9,69.8 174.4,69.8 175.9,71 177.5,70.5 179,70.7 180.5,69.5 182,70.5 183.5,69.9 185,70.4 186.6,69.1 188.1,68.4 189.6,72.2 191.1,70.5 192.6,69.6 194.1,73.7 195.7,69.9 197.2,70.3 198.7,70.1 200.2,69.3 201.7,69.6 203.2,68.4 204.8,69.6 206.3,71.7 207.8,68.9 209.3,70.1 210.8,71.2 212.3,71.8 213.9,71.5 215.4,68.3 216.9,70 218.4,69.7 219.9,72.6 221.4,71.2 223,69.4 224.5,69.3 226,68.2 L226,101Z" fill="#CCA300"/><path d="M0,101 L0,76.2 1.5,75.3 3,75.8 4.6,76.7 6.1,75 7.6,75.7 9.1,76.7 10.6,76.3 12.1,75.7 13.7,75 15.2,75.9 16.7,75.5 18.2,76.2 19.7,75.8 21.2,75.9 22.8,75.4 24.3,76.2 25.8,77.5 27.3,75.3 28.8,75.1 30.3,75.6 31.9,76.7 33.4,75.8 34.9,75.9 36.4,75.2 37.9,76.7 39.4,77 41,75.5 42.5,75.4 44,75.4 45.5,76.1 47,77.6 48.5,75.9 50.1,75.9 51.6,75.6 53.1,75.8 54.6,75.3 56.1,74.8 57.6,77.7 59.2,76.5 60.7,76.3 62.2,75.7 63.7,76.7 65.2,76.5 66.7,76.8 68.3,76.4 69.8,75.3 71.3,75.9 72.8,76.3 74.3,75.7 75.8,76.5 77.4,76.1 78.9,75.4 80.4,75.1 81.9,75.8 83.4,75.2 84.9,74.6 86.5,75.8 88,76.5 89.5,75.6 91,75.5 92.5,76.9 94,77.6 95.6,76.9 97.1,75.7 98.6,75.3 100.1,75.8 101.6,76 103.1,75.5 104.7,76.2 106.2,76.4 107.7,74.8 109.2,76.8 110.7,77.3 112.2,76.5 113.8,76.3 115.3,75.1 116.8,76.6 118.3,76.1 119.8,75.6 121.3,76.6 122.9,75.3 124.4,76.3 125.9,75.9 127.4,76.6 128.9,75.9 130.4,75.3 132,75.7 133.5,75.7 135,76 136.5,77.5 138,76 139.5,74.9 141.1,75.6 142.6,75.2 144.1,76.1 145.6,74.7 147.1,75.2 148.6,76.5 150.2,75.5 151.7,77.1 153.2,75.1 154.7,75.6 156.2,77.2 157.7,77.3 159.3,76.3 160.8,76 162.3,76 163.8,76.4 165.3,77.2 166.8,76.1 168.4,75.5 169.9,76.3 171.4,74.5 172.9,75.8 174.4,76.2 175.9,76.3 177.5,76.6 179,76.5 180.5,75.5 182,76.3 183.5,75.7 185,76.6 186.6,75 188.1,74.4 189.6,77.2 191.1,76.4 192.6,75.6 194.1,79 195.7,75.6 197.2,75.4 198.7,75.5 200.2,75 201.7,75.3 203.2,75 204.8,75.6 206.3,77.2 207.8,75.5 209.3,75.5 210.8,76.6 212.3,76.9 213.9,77.3 215.4,75 216.9,75.7 218.4,75.7 219.9,77.9 221.4,76.9 223,76.1 224.5,75.6 226,74.3 L226,101Z" fill="#508642"/><path d="M0,101 L0,82.5 1.5,81.4 3,81.6 4.6,82.8 6.1,81 7.6,81.3 9.1,82.2 10.6,81.9 12.1,81.7 13.7,81.1 15.2,81.9 16.7,81.2 18.2,82.2 19.7,81.5 21.2,81.8 22.8,81.3 24.3,82.4 25.8,82.7 27.3,81.3 28.8,80.9 30.3,81.4 31.9,82.1 33.4,81.3 34.9,82.2 36.4,81.4 37.9,82.1 39.4,83 41,81.2 42.5,81.6 44,81.3 45.5,82.1 47,83.1 48.5,81.7 50.1,81.6 51.6,81 53.1,81.4 54.6,81.6 56.1,81.1 57.6,83.2 59.2,82 60.7,81.9 62.2,81.2 63.7,82 65.2,82 66.7,82.3 68.3,82.4 69.8,81.7 71.3,81.7 72.8,81.4 74.3,81.4 75.8,81.9 77.4,81.8 78.9,80.9 80.4,81.2 81.9,81.3 83.4,81 84.9,81.1 86.5,81.7 88,81.8 89.5,81.7 91,81.5 92.5,82.9 94,83.7 95.6,82.4 97.1,81.2 98.6,81.2 100.1,81.1 101.6,81.6 103.1,81.7 104.7,81.6 106.2,82.4 107.7,81 109.2,82.6 110.7,82.5 112.2,82.7 113.8,81.6 115.3,81.6 116.8,82.1 118.3,81.9 119.8,81.1 121.3,82 122.9,81.5 124.4,82.1 125.9,81.9 127.4,82 128.9,81.6 130.4,80.7 132,81.5 133.5,81.6 135,81.8 136.5,82.9 138,81.5 139.5,80.9 141.1,81.3 142.6,81.5 144.1,81.8 145.6,81 147.1,80.9 148.6,82.5 150.2,81.4 151.7,82.4 153.2,81.1 154.7,81 156.2,82.4 157.7,83.1 159.3,82.2 160.8,82 162.3,81.5 163.8,81.7 165.3,82.2 166.8,81.7 168.4,81.1 169.9,82 171.4,80.7 172.9,81.4 174.4,81.5 175.9,81.7 177.5,82 179,82.1 180.5,81.3 182,82 183.5,81.4 185,82.5 186.6,80.9 188.1,80.3 189.6,82.9 191.1,81.8 192.6,81.2 194.1,84.2 195.7,81.3 197.2,81.4 198.7,81.4 200.2,80.6 201.7,81.7 203.2,81 204.8,81.7 206.3,82.8 207.8,81.6 209.3,81.2 210.8,82.1 212.3,82.4 213.9,82.7 215.4,80.4 216.9,81.7 218.4,81.8 219.9,83.5 221.4,83 223,82.3 224.5,81.8 226,80.3 L226,101Z" fill="#705DA0"/><path d="M0,101 L0,88.1 1.5,87.2 3,87.1 4.6,87.9 6.1,87.1 7.6,87.2 9.1,87.6 10.6,87.1 12.1,87.3 13.7,87.3 15.2,87.9 16.7,87 18.2,87.9 19.7,87.3 21.2,87.3 22.8,87.3 24.3,88.2 25.8,88.2 27.3,87.6 28.8,86.9 30.3,86.7 31.9,88.2 33.4,87.2 34.9,87.9 36.4,87 37.9,87.6 39.4,88.3 41,87.1 42.5,87.5 44,87 45.5,88 47,88.5 48.5,87.3 50.1,87.6 51.6,87 53.1,87.8 54.6,87.3 56.1,87 57.6,88.9 59.2,87.8 60.7,88.1 62.2,87.1 63.7,87.5 65.2,87.6 66.7,87.4 68.3,88 69.8,87.3 71.3,87.3 72.8,87.2 74.3,87.4 75.8,87.5 77.4,87.6 78.9,86.7 80.4,87.3 81.9,87.1 83.4,86.9 84.9,87 86.5,87.9 88,87.6 89.5,87.1 91,87.5 92.5,88.4 94,88.7 95.6,88.3 97.1,87 98.6,87.1 100.1,87.1 101.6,87.4 103.1,87.9 104.7,87.5 106.2,88.1 107.7,86.9 109.2,87.6 110.7,88 112.2,87.9 113.8,87.5 115.3,87.3 116.8,88 118.3,87.4 119.8,87.4 121.3,87.1 122.9,87.2 124.4,87.6 125.9,87.1 127.4,88.2 128.9,87.5 130.4,87.4 132,87.5 133.5,87.4 135,87.6 136.5,87.6 138,86.8 139.5,87.3 141.1,87.5 142.6,87.1 144.1,87.7 145.6,86.8 147.1,87.1 148.6,88.5 150.2,86.9 151.7,88.5 153.2,86.8 154.7,87 156.2,88 157.7,87.8 159.3,88.3 160.8,87.5 162.3,87.7 163.8,87.8 165.3,87.9 166.8,87.2 168.4,87.5 169.9,87.9 171.4,86.8 172.9,87.3 174.4,87.6 175.9,87.5 177.5,87.3 179,87.5 180.5,87.2 182,87.3 183.5,87.1 185,88.3 186.6,87.2 188.1,86.7 189.6,87.6 191.1,87.7 192.6,87.6 194.1,89 195.7,86.6 197.2,87.6 198.7,87.3 200.2,86.1 201.7,87.5 203.2,87.1 204.8,87.6 206.3,88.8 207.8,87.5 209.3,87.3 210.8,87.9 212.3,88 213.9,88.4 215.4,86.6 216.9,87.4 218.4,87.5 219.9,88.8 221.4,88.6 223,88.2 224.5,87.6 226,86.4 L226,101Z" fill="#BA43A9"/><path d="M0,101 L0,93.8 1.5,92.9 3,93.1 4.6,93.2 6.1,93.2 7.6,93 9.1,93.2 10.6,93.1 12.1,93.5 13.7,93.5 15.2,93.4 16.7,93.3 18.2,93.3 19.7,93.5 21.2,92.7 22.8,93.1 24.3,93.9 25.8,93.6 27.3,93.3 28.8,93 30.3,92.9 31.9,94.2 33.4,93.1 34.9,93.5 36.4,93.6 37.9,92.9 39.4,93.7 41,92.6 42.5,93.4 44,92.6 45.5,94 47,93.4 48.5,93.4 50.1,94 51.6,93.2 53.1,93.5 54.6,92.9 56.1,93.2 57.6,94 59.2,93.3 60.7,93.2 62.2,92.8 63.7,94 65.2,93.1 66.7,93.1 68.3,93.3 69.8,92.9 71.3,92.9 72.8,93.4 74.3,92.9 75.8,93.1 77.4,93.4 78.9,93 80.4,93.1 81.9,93.6 83.4,92.9 84.9,92.7 86.5,94.1 88,93.2 89.5,92.6 91,93.3 92.5,93.7 94,94.1 95.6,93.8 97.1,92.8 98.6,93.3 100.1,93.4 101.6,93.2 103.1,93.9 104.7,93.3 106.2,93.5 107.7,92.9 109.2,93.1 110.7,93.6 112.2,93.4 113.8,92.9 115.3,93.3 116.8,93.6 118.3,92.7 119.8,93.6 121.3,92.9 122.9,93.1 124.4,93.4 125.9,92.7 127.4,93 128.9,93.1 130.4,93 132,93.4 133.5,92.7 135,93.4 136.5,92.8 138,93.1 139.5,92.9 141.1,93.3 142.6,93 144.1,93.7 145.6,93.1 147.1,93.1 148.6,93.8 150.2,93.3 151.7,93.6 153.2,92.8 154.7,93.2 156.2,93.5 157.7,93.5 159.3,93.8 160.8,92.9 162.3,93.7 163.8,93.3 165.3,93.9 166.8,93.2 168.4,93.7 169.9,94.1 171.4,92.7 172.9,93.2 174.4,93.3 175.9,93.2 177.5,93.4 179,93.5 180.5,93 182,93.1 183.5,93.2 185,93.7 186.6,92.8 188.1,92.5 189.6,93.4 191.1,93.1 192.6,93 194.1,93.8 195.7,92.6 197.2,93.6 198.7,93.5 200.2,92.7 201.7,92.9 203.2,92.8 204.8,93.2 206.3,94.2 207.8,93.4 209.3,92.9 210.8,93.8 212.3,93.2 213.9,93.7 215.4,92.7 216.9,93.5 218.4,93.2 219.9,93.8 221.4,93.5 223,93.6 224.5,93.5 226,92.4 L226,101Z" fill="#1F78C1"/><path d="M0,101 L0,95.1 1.5,94.3 3,94.2 4.6,94.5 6.1,94.2 7.6,94.3 9.1,94.4 10.6,94.3 12.1,94.7 13.7,94.9 15.2,94.6 16.7,94.5 18.2,94.7 19.7,94.7 21.2,93.9 22.8,94.1 24.3,95.1 25.8,94.8 27.3,94.6 28.8,94.2 30.3,94.3 31.9,95.4 33.4,94.6 34.9,94.8 36.4,94.9 37.9,94.2 39.4,94.7 41,94 42.5,94.5 44,93.9 45.5,94.9 47,94.4 48.5,94.3 50.1,95 51.6,94.3 53.1,94.7 54.6,94 56.1,94.4 57.6,95.2 59.2,94.7 60.7,94.6 62.2,94.1 63.7,95.3 65.2,94.6 66.7,94.5 68.3,94.3 69.8,94.1 71.3,94.1 72.8,94.7 74.3,94.2 75.8,94.4 77.4,94.4 78.9,94.5 80.4,94.3 81.9,94.9 83.4,94.2 84.9,93.7 86.5,95.2 88,94.5 89.5,94 91,94.4 92.5,94.8 94,95 95.6,94.9 97.1,93.9 98.6,94.5 100.1,94.7 101.6,94.4 103.1,94.9 104.7,94.4 106.2,94.7 107.7,94.1 109.2,94.3 110.7,94.8 112.2,94.7 113.8,94.1 115.3,94.3 116.8,94.8 118.3,94.2 119.8,94.7 121.3,94.6 122.9,94.2 124.4,94.7 125.9,93.7 127.4,94.2 128.9,94.5 130.4,94 132,94.5 133.5,94 135,94.7 136.5,93.8 138,94.1 139.5,94.2 141.1,94.6 142.6,94.4 144.1,94.9 145.6,94.4 147.1,94.5 148.6,94.9 150.2,94.7 151.7,94.9 153.2,94.2 154.7,94.4 156.2,94.7 157.7,94.7 159.3,94.9 160.8,94.3 162.3,94.9 163.8,94.4 165.3,95.2 166.8,94.2 168.4,94.6 169.9,95.1 171.4,93.9 172.9,94.4 174.4,94.5 175.9,94.5 177.5,94.9 179,94.6 180.5,94.3 182,94.3 183.5,94.2 185,94.8 186.6,94.1 188.1,93.7 189.6,94.5 191.1,94.4 192.6,94.3 194.1,95.1 195.7,94 197.2,94.7 198.7,94.9 200.2,94 201.7,94 203.2,94 204.8,94.3 206.3,95.2 207.8,94.7 209.3,94 210.8,94.7 212.3,94.6 213.9,94.8 215.4,93.9 216.9,94.7 218.4,94.3 219.9,95 221.4,94.4 223,94.7 224.5,94.5 226,93.7 L226,101Z" fill="#E24D42"/><path d="M0,101 L0,96.2 1.5,95.9 3,95.8 4.6,95.9 6.1,95.5 7.6,95.6 9.1,96 10.6,96 12.1,96 13.7,96.1 15.2,96 16.7,95.9 18.2,96.3 19.7,96.1 21.2,95.4 22.8,95.7 24.3,96.3 25.8,96.2 27.3,96.1 28.8,95.8 30.3,95.6 31.9,96.5 33.4,95.9 34.9,96 36.4,96.2 37.9,95.8 39.4,96 41,95.4 42.5,95.8 44,95.5 45.5,96.2 47,95.6 48.5,96 50.1,96.4 51.6,95.9 53.1,95.8 54.6,95.7 56.1,96.1 57.6,96.6 59.2,96 60.7,95.9 62.2,95.7 63.7,96.5 65.2,96.1 66.7,96.2 68.3,95.7 69.8,95.8 71.3,95.5 72.8,96.1 74.3,95.8 75.8,95.8 77.4,95.9 78.9,95.8 80.4,95.5 81.9,96.3 83.4,95.7 84.9,95.3 86.5,96.6 88,96 89.5,95.3 91,95.8 92.5,96.2 94,96.4 95.6,96.3 97.1,95.4 98.6,96.1 100.1,96.2 101.6,95.9 103.1,96.2 104.7,95.7 106.2,96.1 107.7,95.6 109.2,95.8 110.7,95.9 112.2,96.2 113.8,95.5 115.3,95.7 116.8,96.1 118.3,95.7 119.8,96.1 121.3,96.1 122.9,95.3 124.4,96 125.9,95.3 127.4,95.7 128.9,95.8 130.4,95.4 132,95.7 133.5,95.6 135,96.4 136.5,95.3 138,95.8 139.5,95.7 141.1,96.2 142.6,95.9 144.1,96.6 145.6,95.8 147.1,95.9 148.6,96.2 150.2,96.1 151.7,96.1 153.2,95.8 154.7,96 156.2,96.3 157.7,96.3 159.3,96.4 160.8,95.8 162.3,96.2 163.8,95.8 165.3,96.3 166.8,95.6 168.4,96 169.9,96.5 171.4,95.1 172.9,96.1 174.4,96.1 175.9,95.9 177.5,96.1 179,95.9 180.5,95.9 182,95.5 183.5,95.8 185,96.2 186.6,95.5 188.1,95.3 189.6,95.9 191.1,95.8 192.6,95.9 194.1,96.3 195.7,95.7 197.2,96 198.7,96.2 200.2,95.7 201.7,95.9 203.2,95.6 204.8,95.6 206.3,96.3 207.8,96.2 209.3,95.4 210.8,96 212.3,96 213.9,96.2 215.4,95.5 216.9,96.1 218.4,95.7 219.9,96 221.4,95.8 223,95.9 224.5,96.1 226,95.2 L226,101Z" fill="#EF843C"/><path d="M0,101 L0,97.4 1.5,97.2 3,97.1 4.6,97.1 6.1,96.8 7.6,96.7 9.1,97.2 10.6,97 12.1,97.1 13.7,97.2 15.2,97.2 16.7,97.3 18.2,97.3 19.7,97.1 21.2,96.4 22.8,96.9 24.3,97.6 25.8,97.3 27.3,97.3 28.8,96.9 30.3,96.8 31.9,97.4 33.4,97.2 34.9,97.3 36.4,97.3 37.9,97 39.4,97.1 41,96.8 42.5,97.1 44,97.2 45.5,97.4 47,96.7 48.5,97.1 50.1,97.5 51.6,97.1 53.1,97.1 54.6,97 56.1,97.4 57.6,97.7 59.2,97.5 60.7,97.2 62.2,97.1 63.7,97.5 65.2,97.2 66.7,97.3 68.3,96.9 69.8,96.7 71.3,97 72.8,97.3 74.3,97.1 75.8,97.2 77.4,97.3 78.9,97.2 80.4,96.8 81.9,97.4 83.4,96.9 84.9,96.8 86.5,97.6 88,97.1 89.5,96.5 91,97.3 92.5,97.2 94,97.6 95.6,97.5 97.1,97.1 98.6,97.2 100.1,97.4 101.6,97.2 103.1,97.3 104.7,97 106.2,97.4 107.7,96.7 109.2,97.1 110.7,97.4 112.2,97.4 113.8,96.7 115.3,96.8 116.8,97.3 118.3,97.1 119.8,97.3 121.3,97.3 122.9,97 124.4,97.1 125.9,96.4 127.4,96.9 128.9,97 130.4,96.7 132,97.1 133.5,96.9 135,97.6 136.5,96.6 138,97.1 139.5,96.9 141.1,97.3 142.6,97.2 144.1,97.8 145.6,96.9 147.1,97.3 148.6,97.3 150.2,97.2 151.7,97.4 153.2,96.9 154.7,97.2 156.2,97.3 157.7,97.3 159.3,97.7 160.8,97.2 162.3,97.2 163.8,97.2 165.3,97.7 166.8,97 168.4,97.1 169.9,97.6 171.4,96.6 172.9,97.3 174.4,97.3 175.9,97.2 177.5,97.4 179,97.1 180.5,97.1 182,96.8 183.5,97.1 185,97.3 186.6,96.9 188.1,96.7 189.6,97.1 191.1,96.9 192.6,97.3 194.1,97.1 195.7,97 197.2,97.1 198.7,97.3 200.2,97 201.7,97.2 203.2,97.3 204.8,96.8 206.3,97.6 207.8,97.2 209.3,96.8 210.8,97.1 212.3,97.3 213.9,97.6 215.4,96.9 216.9,97.4 218.4,97.2 219.9,97.2 221.4,96.9 223,96.9 224.5,97.4 226,96.7 L226,101Z" fill="#6ED0E0"/><path d="M0,101 L0,99 1.5,98.5 3,98.4 4.6,98.6 6.1,98.4 7.6,98.3 9.1,98.6 10.6,98.5 12.1,98.7 13.7,98.4 15.2,98.7 16.7,98.8 18.2,98.7 19.7,98.4 21.2,97.9 22.8,98.5 24.3,99 25.8,98.7 27.3,98.7 28.8,98.5 30.3,98.5 31.9,98.8 33.4,98.4 34.9,98.5 36.4,98.7 37.9,98.4 39.4,98.5 41,98.1 42.5,98.5 44,98.7 45.5,98.5 47,98.5 48.5,98.6 50.1,99 51.6,98.3 53.1,98.3 54.6,98.6 56.1,98.9 57.6,98.7 59.2,99.1 60.7,98.7 62.2,98.6 63.7,98.7 65.2,98.7 66.7,98.6 68.3,98.4 69.8,98.4 71.3,98.5 72.8,98.9 74.3,98.5 75.8,98.4 77.4,98.7 78.9,98.7 80.4,98.5 81.9,98.8 83.4,98.4 84.9,98.2 86.5,98.7 88,98.5 89.5,98 91,98.7 92.5,98.6 94,98.7 95.6,99 97.1,98.8 98.6,98.6 100.1,99 101.6,98.7 103.1,98.6 104.7,98.5 106.2,98.7 107.7,98.6 109.2,98.6 110.7,98.7 112.2,98.6 113.8,98.3 115.3,98.3 116.8,98.8 118.3,98.3 119.8,98.7 121.3,98.6 122.9,98.6 124.4,98.4 125.9,98.1 127.4,98.5 128.9,98.4 130.4,98.4 132,98.2 133.5,98.2 135,98.9 136.5,98.2 138,98.7 139.5,98.4 141.1,98.5 142.6,98.6 144.1,99 145.6,98.5 147.1,98.6 148.6,98.9 150.2,98.9 151.7,98.8 153.2,98.5 154.7,98.6 156.2,98.8 157.7,98.7 159.3,99.1 160.8,98.7 162.3,98.6 163.8,99 165.3,99 166.8,98.5 168.4,98.5 169.9,98.7 171.4,98.2 172.9,98.7 174.4,98.5 175.9,98.5 177.5,98.6 179,98.5 180.5,98.8 182,98.4 183.5,98.3 185,98.5 186.6,98.4 188.1,98.4 189.6,98.5 191.1,98.5 192.6,98.5 194.1,98.5 195.7,98.5 197.2,98.4 198.7,98.7 200.2,98.6 201.7,98.5 203.2,98.6 204.8,98.3 206.3,99.1 207.8,98.4 209.3,98.3 210.8,98.5 212.3,98.8 213.9,99 215.4,98.3 216.9,98.7 218.4,98.6 219.9,98.6 221.4,98.6 223,98.3 224.5,98.6 226,98.5 L226,101Z" fill="#EAB839"/><path d="M0,101 L0,100 1.5,99.9 3,99.8 4.6,99.8 6.1,99.7 7.6,99.7 9.1,99.8 10.6,99.8 12.1,99.9 13.7,99.6 15.2,99.8 16.7,100 18.2,100 19.7,99.9 21.2,99.5 22.8,99.7 24.3,100.1 25.8,99.8 27.3,99.7 28.8,99.7 30.3,99.7 31.9,99.9 33.4,99.7 34.9,99.9 36.4,100.2 37.9,99.9 39.4,99.9 41,99.6 42.5,99.6 44,100 45.5,99.8 47,99.8 48.5,100 50.1,100.1 51.6,99.8 53.1,99.8 54.6,99.9 56.1,100.2 57.6,99.8 59.2,99.9 60.7,99.9 62.2,99.8 63.7,100 65.2,99.7 66.7,99.8 68.3,99.9 69.8,99.7 71.3,99.8 72.8,100 74.3,99.8 75.8,99.9 77.4,100.1 78.9,99.9 80.4,99.7 81.9,99.9 83.4,99.6 84.9,99.5 86.5,99.8 88,99.7 89.5,99.5 91,99.8 92.5,99.9 94,99.9 95.6,100 97.1,100 98.6,99.8 100.1,99.9 101.6,99.7 103.1,99.7 104.7,99.9 106.2,99.8 107.7,99.8 109.2,99.9 110.7,99.9 112.2,99.7 113.8,99.8 115.3,99.7 116.8,99.6 118.3,99.6 119.8,100 121.3,99.9 122.9,99.8 124.4,99.8 125.9,99.6 127.4,99.9 128.9,99.9 130.4,99.7 132,99.6 133.5,99.6 135,100 136.5,99.8 138,99.9 139.5,99.7 141.1,99.7 142.6,99.8 144.1,99.9 145.6,99.7 147.1,99.6 148.6,99.9 150.2,99.8 151.7,99.8 153.2,99.8 154.7,99.7 156.2,99.9 157.7,99.9 159.3,100.1 160.8,99.8 162.3,99.6 163.8,100.1 165.3,99.9 166.8,99.6 168.4,99.8 169.9,100.1 171.4,99.6 172.9,100 174.4,99.6 175.9,99.9 177.5,99.9 179,99.8 180.5,99.8 182,99.7 183.5,99.7 185,99.8 186.6,99.6 188.1,99.7 189.6,99.7 191.1,99.8 192.6,99.8 194.1,99.8 195.7,99.7 197.2,99.7 198.7,99.8 200.2,99.6 201.7,99.8 203.2,99.7 204.8,99.6 206.3,100 207.8,99.8 209.3,99.5 210.8,99.9 212.3,99.6 213.9,100 215.4,99.7 216.9,100 218.4,99.9 219.9,99.8 221.4,99.9 223,99.6 224.5,99.7 226,99.6 L226,101Z" fill="#7EB26D"/>
</svg>
<div class="yl" style="right:1264px;top:283px">0 B/s</div>
<div class="yl" style="right:1264px;top:262.8px">100 MB/s</div>
<div class="yl" style="right:1264px;top:242.6px">200 MB/s</div>
<div class="yl" style="right:1264px;top:222.4px">300 MB/s</div>
<div class="yl" style="right:1264px;top:202.2px">400 MB/s</div>
<div class="yl" style="right:1264px;top:182px">500 MB/s</div>
<div class="xl" style="left:132.4px;top:298px">20:30</div>
<div class="xl" style="left:170.6px;top:298px">20:40</div>
<div class="xl" style="left:208.7px;top:298px">20:50</div>
<div class="xl" style="left:246.9px;top:298px">21:00</div>
<div class="xl" style="left:285px;top:298px">21:10</div>
<div class="xl" style="left:323.1px;top:298px">21:20</div>
<div class="panel" style="left:403px;top:138px;width:322px;height:258px"></div><div class="ptitle" style="left:403px;top:144.5px;width:322px">Transmit bandwidth</div>
<svg style="position:absolute;left:472px;top:188px" width="226" height="103" viewBox="0 -1 226 103">
<line x1="0" x2="226" y1="101.5" y2="101.5" stroke="rgba(36,41,46,0.12)" stroke-width="1"/>
<line x1="0" x2="226" y1="75.5" y2="75.5" stroke="rgba(36,41,46,0.12)" stroke-width="1"/>
<line x1="0" x2="226" y1="50.5" y2="50.5" stroke="rgba(36,41,46,0.12)" stroke-width="1"/>
<line x1="0" x2="226" y1="25.5" y2="25.5" stroke="rgba(36,41,46,0.12)" stroke-width="1"/>
<line x1="0" x2="226" y1="0.5" y2="0.5" stroke="rgba(36,41,46,0.12)" stroke-width="1"/>
<line x1="6.5" x2="6.5" y1="0" y2="101" stroke="rgba(36,41,46,0.12)" stroke-width="1"/>
<line x1="44.5" x2="44.5" y1="0" y2="101" stroke="rgba(36,41,46,0.12)" stroke-width="1"/>
<line x1="82.5" x2="82.5" y1="0" y2="101" stroke="rgba(36,41,46,0.12)" stroke-width="1"/>
<line x1="120.5" x2="120.5" y1="0" y2="101" stroke="rgba(36,41,46,0.12)" stroke-width="1"/>
<line x1="157.5" x2="157.5" y1="0" y2="101" stroke="rgba(36,41,46,0.12)" stroke-width="1"/>
<line x1="195.5" x2="195.5" y1="0" y2="101" stroke="rgba(36,41,46,0.12)" stroke-width="1"/>
<path d="M0,101 L0,38.8 1.5,39.2 3,39.5 4.6,41.2 6.1,40.4 7.6,35.5 9.1,38 10.6,39.2 12.1,39 13.7,38 15.2,40.1 16.7,42.1 18.2,40.4 19.7,43.5 21.2,42.2 22.8,41 24.3,37.5 25.8,36.1 27.3,38.9 28.8,38 30.3,36.2 31.9,39 33.4,38 34.9,41.5 36.4,37.8 37.9,44.3 39.4,37 41,38.9 42.5,38.3 44,37.9 45.5,38.5 47,37.9 48.5,38.6 50.1,36.4 51.6,36.9 53.1,40.7 54.6,38.8 56.1,36.2 57.6,37.5 59.2,36.2 60.7,38.1 62.2,37.1 63.7,39.5 65.2,41 66.7,38.8 68.3,36.6 69.8,39 71.3,35 72.8,38.8 74.3,39.3 75.8,38.2 77.4,38.9 78.9,37 80.4,40.4 81.9,39.2 83.4,35.9 84.9,40.4 86.5,38.4 88,36.1 89.5,38.9 91,38.4 92.5,37.8 94,41.6 95.6,40.2 97.1,40.1 98.6,37.6 100.1,38.8 101.6,37.6 103.1,40.1 104.7,39.1 106.2,39 107.7,38.3 109.2,40.2 110.7,38.2 112.2,40 113.8,38 115.3,35.6 116.8,41 118.3,40 119.8,42.6 121.3,41.6 122.9,40.7 124.4,38.4 125.9,39.7 127.4,33.7 128.9,28.6 130.4,17.6 132,27.5 133.5,38 135,38.6 136.5,41.4 138,40.2 139.5,40.3 141.1,37.5 142.6,39.1 144.1,38.3 145.6,36.7 147.1,41.1 148.6,40.3 150.2,38.7 151.7,39.4 153.2,40.9 154.7,37.2 156.2,40 157.7,47.4 159.3,42.1 160.8,39.4 162.3,37.6 163.8,39.7 165.3,42.3 166.8,46.6 168.4,39.3 169.9,35.8 171.4,37.1 172.9,39.2 174.4,41.8 175.9,37.4 177.5,40 179,44 180.5,40.7 182,37.9 183.5,38.5 185,39.2 186.6,39.4 188.1,35.5 189.6,39.8 191.1,38.8 192.6,37.9 194.1,36 195.7,38.3 197.2,36.7 198.7,38.8 200.2,39.4 201.7,39.9 203.2,39.8 204.8,37.8 206.3,38.7 207.8,39.1 209.3,34.9 210.8,38.4 212.3,41.8 213.9,41.4 215.4,39.4 216.9,40.1 218.4,39.9 219.9,38.4 221.4,40.9 223,41.2 224.5,41.3 226,39.2 L226,101Z" fill="#F29191"/><path d="M0,101 L0,39.9 1.5,40.8 3,40.6 4.6,42.3 6.1,41.5 7.6,36.7 9.1,39.8 10.6,40.3 12.1,39.7 13.7,38.9 15.2,40.8 16.7,43.4 18.2,41.6 19.7,44.5 21.2,43.2 22.8,42.1 24.3,38.1 25.8,37.3 27.3,40 28.8,39.7 30.3,37.4 31.9,40.3 33.4,39 34.9,42.7 36.4,39.4 37.9,45.1 39.4,38.3 41,40.2 42.5,39.8 44,39.1 45.5,39.8 47,39.2 48.5,40.4 50.1,38 51.6,38.2 53.1,42.2 54.6,39.9 56.1,37.5 57.6,38.8 59.2,37.6 60.7,39.8 62.2,38.3 63.7,40.7 65.2,42.5 66.7,40.3 68.3,38.3 69.8,41.3 71.3,36.6 72.8,40.1 74.3,40.5 75.8,40 77.4,39.9 78.9,38.3 80.4,41.9 81.9,40.6 83.4,37.1 84.9,42.1 86.5,40.1 88,37.9 89.5,40.2 91,39.5 92.5,39.3 94,42.9 95.6,41.5 97.1,41.4 98.6,39.3 100.1,39.9 101.6,39.9 103.1,40.7 104.7,40.3 106.2,40.3 107.7,39.5 109.2,41.5 110.7,39.4 112.2,40.9 113.8,39.5 115.3,37.5 116.8,41.9 118.3,41.1 119.8,43.6 121.3,42.8 122.9,41.6 124.4,39.7 125.9,41 127.4,35.4 128.9,31 130.4,20.2 132,29.2 133.5,39.7 135,40.3 136.5,42.6 138,41 139.5,41.9 141.1,39.1 142.6,39.7 144.1,39.8 145.6,37.9 147.1,41.8 148.6,41.9 150.2,40.2 151.7,41.4 153.2,42.3 154.7,38.5 156.2,41.6 157.7,49.1 159.3,43.7 160.8,40.7 162.3,39 163.8,41 165.3,43.3 166.8,47.6 168.4,40.7 169.9,37 171.4,38.7 172.9,40.3 174.4,43.3 175.9,38.4 177.5,40.7 179,45.5 180.5,42 182,39.1 183.5,40 185,41.2 186.6,40.8 188.1,37.2 189.6,41 191.1,40.2 192.6,39.2 194.1,38 195.7,40 197.2,37.7 198.7,39.6 200.2,41.5 201.7,41.4 203.2,41.1 204.8,39 206.3,40 207.8,40.2 209.3,36.1 210.8,39.4 212.3,43 213.9,42.6 215.4,41.1 216.9,41.5 218.4,40.7 219.9,39.5 221.4,42.6 223,42.4 224.5,42.5 226,40.7 L226,101Z" fill="#F9BA8F"/><path d="M0,101 L0,41 1.5,41.9 3,41.6 4.6,43.3 6.1,42.6 7.6,37.9 9.1,41.7 10.6,41.5 12.1,40.7 13.7,40.6 15.2,42.4 16.7,44.5 18.2,43.1 19.7,45.7 21.2,44.7 22.8,43.2 24.3,39.5 25.8,38.5 27.3,41.1 28.8,41 30.3,39.1 31.9,41.5 33.4,40.1 34.9,43.8 36.4,40.8 37.9,46.2 39.4,39.2 41,41.1 42.5,41 44,40.6 45.5,41.5 47,40.7 48.5,41.6 50.1,39.4 51.6,39.8 53.1,43.3 54.6,40.2 56.1,39.3 57.6,40.4 59.2,39 60.7,41.5 62.2,39.9 63.7,41.8 65.2,43.5 66.7,41.5 68.3,39.3 69.8,42.5 71.3,38.1 72.8,41 74.3,41.8 75.8,41.9 77.4,41.2 78.9,39.2 80.4,43.2 81.9,41.8 83.4,38.7 84.9,43.1 86.5,41.8 88,39.5 89.5,42 91,40.9 92.5,41 94,43.6 95.6,42.4 97.1,42.8 98.6,40.5 100.1,41.1 101.6,41.3 103.1,42.1 104.7,41.8 106.2,41 107.7,41 109.2,43 110.7,40.6 112.2,41.9 113.8,40.9 115.3,38.8 116.8,43.1 118.3,42.6 119.8,45.3 121.3,43.9 122.9,42.6 124.4,41 125.9,42.2 127.4,36.4 128.9,33.1 130.4,23.1 132,30.9 133.5,41 135,41.4 136.5,43.6 138,42.6 139.5,43.3 141.1,40 142.6,40.4 144.1,41.6 145.6,38.6 147.1,43.4 148.6,43.2 150.2,41.6 151.7,42.3 153.2,43.5 154.7,39.7 156.2,43.3 157.7,50.2 159.3,44.5 160.8,42.1 162.3,40.6 163.8,42.6 165.3,44.5 166.8,48.8 168.4,41.7 169.9,38.3 171.4,40.1 172.9,41.8 174.4,44.1 175.9,39.7 177.5,42.1 179,46.8 180.5,42.5 182,40.3 183.5,41.7 185,43 186.6,42.1 188.1,38.5 189.6,41.9 191.1,41.4 192.6,40.5 194.1,39.9 195.7,40.6 197.2,39.4 198.7,41.3 200.2,43.1 201.7,42.4 203.2,42.5 204.8,40.2 206.3,41.4 207.8,41.4 209.3,37.2 210.8,40.5 212.3,43.9 213.9,44.2 215.4,42.1 216.9,42.5 218.4,42.3 219.9,40.7 221.4,43.8 223,43.9 224.5,43.8 226,42.1 L226,101Z" fill="#70DBED"/><path d="M0,101 L0,42.4 1.5,43.5 3,42.8 4.6,44.3 6.1,44.1 7.6,39.2 9.1,42.3 10.6,42.8 12.1,41.9 13.7,41.6 15.2,43.5 16.7,45.5 18.2,44.9 19.7,46.6 21.2,45.9 22.8,43.9 24.3,40.6 25.8,40 27.3,42.2 28.8,42.4 30.3,40.4 31.9,42.7 33.4,42.2 34.9,44.9 36.4,42.1 37.9,46.9 39.4,40.7 41,42.1 42.5,42.1 44,42.1 45.5,42.5 47,42.3 48.5,42.3 50.1,40.9 51.6,40.8 53.1,44 54.6,41.8 56.1,41 57.6,41.8 59.2,40.8 60.7,43 62.2,40.9 63.7,43.6 65.2,44.7 66.7,43.1 68.3,40.7 69.8,43.5 71.3,39.3 72.8,41.9 74.3,43.2 75.8,42.7 77.4,43.1 78.9,40.5 80.4,44 81.9,43.2 83.4,39.6 84.9,44.7 86.5,43.2 88,40.5 89.5,43.7 91,42.4 92.5,42.4 94,44.5 95.6,43.4 97.1,44.7 98.6,41.3 100.1,42.4 101.6,42.6 103.1,43 104.7,42.6 106.2,41.8 107.7,42.6 109.2,44 110.7,42.1 112.2,43.4 113.8,42.2 115.3,39.9 116.8,44.2 118.3,43.9 119.8,46.4 121.3,44.7 122.9,43.8 124.4,42.8 125.9,43.8 127.4,37.7 128.9,34.6 130.4,25.5 132,32.6 133.5,42.5 135,42.7 136.5,45.2 138,44.3 139.5,44.5 141.1,41.6 142.6,41.8 144.1,42.7 145.6,39.7 147.1,44.3 148.6,43.8 150.2,43.1 151.7,43.9 153.2,45 154.7,40.9 156.2,44.6 157.7,51.3 159.3,45.8 160.8,43.2 162.3,41.9 163.8,43.9 165.3,46 166.8,50.2 168.4,42.6 169.9,40.3 171.4,41.6 172.9,42.9 174.4,44.9 175.9,41.1 177.5,43.7 179,47.7 180.5,43.7 182,42 183.5,43.2 185,44.5 186.6,43.6 188.1,40.4 189.6,43.1 191.1,42.8 192.6,41.6 194.1,40.9 195.7,41.4 197.2,40.5 198.7,42.3 200.2,44.2 201.7,43.9 203.2,43.6 204.8,41.2 206.3,42.6 207.8,42.5 209.3,38.4 210.8,42.1 212.3,44.9 213.9,45.5 215.4,43.3 216.9,43.6 218.4,43.7 219.9,42.2 221.4,45 223,45.4 224.5,45.1 226,43.7 L226,101Z" fill="#F4D598"/><path d="M0,101 L0,43.5 1.5,45.1 3,43.9 4.6,45.4 6.1,44.9 7.6,40.6 9.1,43.7 10.6,44.4 12.1,42.9 13.7,42.4 15.2,45 16.7,46 18.2,45.8 19.7,48 21.2,47.1 22.8,44.8 24.3,41.8 25.8,41.7 27.3,43.4 28.8,43.6 30.3,42 31.9,43.8 33.4,43.5 34.9,46.5 36.4,42.9 37.9,47.9 39.4,42.2 41,43.4 42.5,43.9 44,43.3 45.5,43.8 47,43.1 48.5,43.3 50.1,42.6 51.6,41.9 53.1,45.3 54.6,42.9 56.1,43 57.6,42.6 59.2,42.2 60.7,44.3 62.2,41.9 63.7,44.7 65.2,46.2 66.7,45.2 68.3,42.4 69.8,45 71.3,40.7 72.8,42.8 74.3,44.1 75.8,44.2 77.4,43.9 78.9,42.1 80.4,45.5 81.9,44.9 83.4,41 84.9,45.6 86.5,44.8 88,41.5 89.5,45 91,43.7 92.5,43.5 94,45.8 95.6,44.7 97.1,45.8 98.6,43 100.1,43.6 101.6,43.8 103.1,44.5 104.7,43.8 106.2,43.1 107.7,43.9 109.2,44.8 110.7,44 112.2,44.4 113.8,43 115.3,41.3 116.8,45.7 118.3,45.3 119.8,47.4 121.3,45.6 122.9,45.1 124.4,44 125.9,45.4 127.4,39.2 128.9,36.8 130.4,28.3 132,34.1 133.5,43.8 135,44.4 136.5,46.6 138,46 139.5,45.8 141.1,42.9 142.6,43 144.1,44.3 145.6,41.5 147.1,45.4 148.6,45.1 150.2,44.2 151.7,45.3 153.2,45.9 154.7,41.8 156.2,46.1 157.7,52.5 159.3,47 160.8,45 162.3,43 163.8,45.1 165.3,47.7 166.8,51.4 168.4,43.8 169.9,41.9 171.4,42.8 172.9,44.1 174.4,45.8 175.9,42 177.5,44.5 179,48.6 180.5,44.8 182,43.4 183.5,44.1 185,45.9 186.6,45.3 188.1,42.2 189.6,44.2 191.1,44.9 192.6,43.1 194.1,42.5 195.7,43.2 197.2,41.5 198.7,43.5 200.2,45.6 201.7,45.3 203.2,44.6 204.8,42.8 206.3,43.7 207.8,43.9 209.3,39.9 210.8,43.2 212.3,46.6 213.9,46.6 215.4,44 216.9,45.3 218.4,45 219.9,43 221.4,46.2 223,46.7 224.5,46.3 226,45.2 L226,101Z" fill="#B7DBAB"/><path d="M0,101 L0,44.7 1.5,46.2 3,44.9 4.6,47 6.1,45.9 7.6,41.7 9.1,45.3 10.6,45.6 12.1,43.7 13.7,44.6 15.2,46.4 16.7,47.1 18.2,47.9 19.7,49.3 21.2,48.4 22.8,46 24.3,43.4 25.8,43.1 27.3,44.8 28.8,45.3 30.3,43.3 31.9,44.9 33.4,44.5 34.9,48.1 36.4,44.3 37.9,48.9 39.4,43.8 41,44.9 42.5,45 44,44.2 45.5,45 47,44.1 48.5,44.5 50.1,44 51.6,43.4 53.1,46 54.6,44.1 56.1,44.4 57.6,44.1 59.2,43.5 60.7,45.5 62.2,43.2 63.7,46.3 65.2,47.4 66.7,46.3 68.3,43.9 69.8,46.5 71.3,41.6 72.8,43.9 74.3,45 75.8,45.5 77.4,45.4 78.9,43.3 80.4,46.5 81.9,45.9 83.4,42.3 84.9,47.1 86.5,46.2 88,42.8 89.5,46.7 91,44.9 92.5,44.7 94,46.8 95.6,46.4 97.1,47.4 98.6,44.3 100.1,45 101.6,44.8 103.1,45.6 104.7,45.2 106.2,44.6 107.7,44.5 109.2,46.5 110.7,45.5 112.2,45.3 113.8,44.4 115.3,42.5 116.8,46.8 118.3,46.4 119.8,48.5 121.3,46.8 122.9,46.4 124.4,45.6 125.9,46.7 127.4,40.5 128.9,38.8 130.4,31.2 132,36.1 133.5,45.6 135,45.6 136.5,47.5 138,47.5 139.5,47.3 141.1,44.2 142.6,44.3 144.1,45.3 145.6,42.7 147.1,46.7 148.6,46.2 150.2,45.1 151.7,46.6 153.2,46.9 154.7,43.2 156.2,47.4 157.7,53.7 159.3,48 160.8,46.3 162.3,44.4 163.8,46.5 165.3,49.3 166.8,52.2 168.4,45.3 169.9,43.5 171.4,44.1 172.9,45.1 174.4,47.1 175.9,43.3 177.5,45.8 179,50.1 180.5,46.3 182,44.3 183.5,45.7 185,46.7 186.6,46.4 188.1,42.9 189.6,45.6 191.1,46 192.6,44.7 194.1,43.6 195.7,44.5 197.2,43.2 198.7,44.7 200.2,47.2 201.7,46.7 203.2,45.9 204.8,43.7 206.3,45 207.8,45.7 209.3,41.2 210.8,44.6 212.3,48.2 213.9,47.7 215.4,45.3 216.9,46.6 218.4,46.1 219.9,44.5 221.4,47.9 223,48.1 224.5,47.6 226,46.6 L226,101Z" fill="#584477"/><path d="M0,101 L0,45.7 1.5,47 3,46.4 4.6,48.4 6.1,47.3 7.6,43.1 9.1,46.7 10.6,46.9 12.1,44.8 13.7,46 15.2,47.7 16.7,48.3 18.2,48.8 19.7,50.3 21.2,49.9 22.8,47.6 24.3,44.3 25.8,44.7 27.3,45.9 28.8,46.9 30.3,44.6 31.9,45.9 33.4,46.1 34.9,49 36.4,45.7 37.9,50.1 39.4,45.3 41,46.4 42.5,46.4 44,45.9 45.5,45.9 47,45.7 48.5,46.3 50.1,44.9 51.6,44.3 53.1,47.1 54.6,45.1 56.1,46 57.6,45.6 59.2,44.7 60.7,46.6 62.2,45 63.7,47.5 65.2,48.5 66.7,48.2 68.3,45.6 69.8,47.7 71.3,43.2 72.8,44.8 74.3,46.6 75.8,47.7 77.4,46.6 78.9,44.9 80.4,47.8 81.9,47 83.4,43.5 84.9,48.2 86.5,47.1 88,44.2 89.5,48.2 91,46.5 92.5,46.2 94,48.3 95.6,47.8 97.1,48.7 98.6,45.3 100.1,46.3 101.6,46 103.1,46.5 104.7,46.5 106.2,46.1 107.7,46.3 109.2,47.6 110.7,47.2 112.2,46.5 113.8,45.8 115.3,44.2 116.8,48.1 118.3,47.7 119.8,49.5 121.3,48.3 122.9,47.5 124.4,47 125.9,48 127.4,42.1 128.9,41.3 130.4,34.3 132,38.8 133.5,47.7 135,46.9 136.5,48.5 138,48.7 139.5,48.5 141.1,45.9 142.6,45.6 144.1,46.8 145.6,43.6 147.1,48.2 148.6,47.9 150.2,46.4 151.7,47.7 153.2,48.2 154.7,44.6 156.2,48.7 157.7,54.9 159.3,49.4 160.8,47.4 162.3,45.6 163.8,47.7 165.3,50.5 166.8,52.9 168.4,46.6 169.9,44.9 171.4,45.1 172.9,46.9 174.4,48.3 175.9,44.6 177.5,47.3 179,51.2 180.5,47.8 182,45.9 183.5,46.3 185,48 186.6,48 188.1,44.4 189.6,47.2 191.1,47.4 192.6,45.9 194.1,44.5 195.7,46.4 197.2,44.6 198.7,46.1 200.2,48.6 201.7,48 203.2,47.3 204.8,45.4 206.3,46.5 207.8,46.6 209.3,42.5 210.8,45.8 212.3,49.4 213.9,48.9 215.4,47.1 216.9,47.6 218.4,47.6 219.9,45.9 221.4,49 223,48.9 224.5,48.9 226,47.4 L226,101Z" fill="#6D1F62"/><path d="M0,101 L0,47.1 1.5,48.5 3,47.8 4.6,49.9 6.1,48.7 7.6,44.6 9.1,47.8 10.6,48.1 12.1,45.7 13.7,47.4 15.2,49 16.7,49.6 18.2,50.3 19.7,51.4 21.2,51.6 22.8,48.6 24.3,46 25.8,46.4 27.3,47.2 28.8,48.4 30.3,46.2 31.9,47.1 33.4,47.5 34.9,50.6 36.4,47.2 37.9,51.2 39.4,46.2 41,48 42.5,48 44,47.7 45.5,47.4 47,46.6 48.5,47.3 50.1,45.8 51.6,45.8 53.1,48.4 54.6,46.4 56.1,47.2 57.6,46.4 59.2,46 60.7,47.4 62.2,45.7 63.7,48.5 65.2,49.9 66.7,49.9 68.3,47 69.8,49.1 71.3,44.6 72.8,46.3 74.3,48.3 75.8,48.7 77.4,47.7 78.9,47.1 80.4,48.7 81.9,47.6 83.4,44.6 84.9,49.2 86.5,48.1 88,46 89.5,49.8 91,47.5 92.5,48.3 94,49.5 95.6,49.2 97.1,49.8 98.6,46.3 100.1,47.8 101.6,47.8 103.1,48 104.7,47.9 106.2,47.4 107.7,48.1 109.2,48.5 110.7,48.5 112.2,47.5 113.8,47.1 115.3,45.5 116.8,49.2 118.3,48.6 119.8,50.9 121.3,50.2 122.9,48.9 124.4,48.3 125.9,49.1 127.4,43.9 128.9,43.5 130.4,37.7 132,40.7 133.5,49.7 135,48.1 136.5,50 138,50.3 139.5,49.8 141.1,46.7 142.6,47.1 144.1,48.3 145.6,45.3 147.1,49.9 148.6,49.7 150.2,47.5 151.7,49.5 153.2,49.7 154.7,46.2 156.2,49.4 157.7,56.1 159.3,50.8 160.8,48.8 162.3,47.8 163.8,48.9 165.3,51.7 166.8,54.1 168.4,48 169.9,46 171.4,46.1 172.9,48.2 174.4,49.3 175.9,46.1 177.5,48.4 179,52 180.5,49.4 182,47.4 183.5,47.9 185,49.4 186.6,49.5 188.1,45.6 189.6,48 191.1,48.6 192.6,47.2 194.1,45.7 195.7,47.8 197.2,46.5 198.7,47.7 200.2,50.1 201.7,49.5 203.2,48.3 204.8,47.3 206.3,47.9 207.8,48.4 209.3,44.2 210.8,47.4 212.3,51.2 213.9,50.3 215.4,48.7 216.9,48.9 218.4,49 219.9,46.6 221.4,50.4 223,50.1 224.5,50.3 226,48.5 L226,101Z" fill="#0A437C"/><path d="M0,101 L0,48.4 1.5,49.7 3,48.7 4.6,50.9 6.1,50 7.6,46.4 9.1,49.2 10.6,49.6 12.1,47.4 13.7,49.1 15.2,50.4 16.7,51.1 18.2,51.5 19.7,52.4 21.2,52.9 22.8,49.9 24.3,47.7 25.8,47.9 27.3,48.8 28.8,49.2 30.3,47.4 31.9,48.4 33.4,48.5 34.9,51.2 36.4,48.6 37.9,53 39.4,47.1 41,49.3 42.5,49.9 44,49 45.5,48.7 47,47.6 48.5,48.6 50.1,47.4 51.6,47.4 53.1,49.6 54.6,48 56.1,48.1 57.6,47.5 59.2,47.4 60.7,48.8 62.2,47.3 63.7,49.7 65.2,50.5 66.7,51.5 68.3,48.9 69.8,50.5 71.3,45.8 72.8,47.5 74.3,49.6 75.8,49.6 77.4,49 78.9,48.3 80.4,49.5 81.9,48.9 83.4,46 84.9,50.9 86.5,49.4 88,47.7 89.5,50.9 91,48.7 92.5,49.7 94,50.5 95.6,50.5 97.1,50.8 98.6,47.3 100.1,48.9 101.6,49.3 103.1,49.3 104.7,49 106.2,49.2 107.7,49.3 109.2,50 110.7,49.9 112.2,49.1 113.8,48.3 115.3,46.6 116.8,50.6 118.3,50.1 119.8,52.4 121.3,51.5 122.9,50.3 124.4,49.3 125.9,50.7 127.4,45.7 128.9,45.5 130.4,40.7 132,42.8 133.5,51.7 135,49 136.5,51.2 138,51.9 139.5,50.7 141.1,47.9 142.6,49 144.1,49.3 145.6,46.7 147.1,51 148.6,51 150.2,48.6 151.7,51 153.2,50.6 154.7,48.1 156.2,50.9 157.7,57.4 159.3,52 160.8,50.3 162.3,49.1 163.8,50.4 165.3,52.9 166.8,55.3 168.4,49.8 169.9,47.7 171.4,48 172.9,49.9 174.4,50.2 175.9,47.6 177.5,50.1 179,53.4 180.5,51.1 182,49.1 183.5,49.4 185,50.9 186.6,50.9 188.1,47.5 189.6,49 191.1,49.6 192.6,48.9 194.1,46.6 195.7,49.3 197.2,47.9 198.7,49.5 200.2,51.2 201.7,50.6 203.2,49.7 204.8,48.7 206.3,49.1 207.8,49.5 209.3,45.6 210.8,49.1 212.3,51.8 213.9,51.9 215.4,50.3 216.9,50.2 218.4,50.1 219.9,47.8 221.4,51.2 223,51.5 224.5,51.7 226,49.9 L226,101Z" fill="#890F02"/><path d="M0,101 L0,49.6 1.5,51.3 3,50.8 4.6,52.2 6.1,51.5 7.6,47.5 9.1,50.5 10.6,50.7 12.1,49.2 13.7,50.2 15.2,51.9 16.7,52.3 18.2,52.8 19.7,53.3 21.2,53.8 22.8,51.6 24.3,49.3 25.8,49.3 27.3,50 28.8,50.5 30.3,48.4 31.9,49.7 33.4,50.2 34.9,52.2 36.4,50.6 37.9,54.3 39.4,48.8 41,50.8 42.5,50.8 44,49.9 45.5,50.4 47,49.2 48.5,49.6 50.1,49.3 51.6,48.6 53.1,51.9 54.6,49.2 56.1,49.7 57.6,48.8 59.2,48.5 60.7,50.3 62.2,48.3 63.7,50.7 65.2,51.7 66.7,52.3 68.3,49.7 69.8,51.7 71.3,47.1 72.8,49 74.3,51.2 75.8,50.8 77.4,50.8 78.9,49.6 80.4,50.8 81.9,50.5 83.4,47.7 84.9,52.1 86.5,50.5 88,49.1 89.5,52.2 91,49.5 92.5,50.9 94,51.8 95.6,51.8 97.1,52.2 98.6,49 100.1,49.9 101.6,50.6 103.1,50.8 104.7,49.5 106.2,50.8 107.7,50.7 109.2,52.2 110.7,51.4 112.2,50.1 113.8,49.7 115.3,47.8 116.8,52.1 118.3,50.9 119.8,53.8 121.3,52.6 122.9,51.5 124.4,50.8 125.9,52.1 127.4,47.8 128.9,47.6 130.4,43.7 132,44.6 133.5,53 135,50.7 136.5,52.4 138,52.8 139.5,51.6 141.1,49 142.6,49.9 144.1,50.3 145.6,48.4 147.1,52.2 148.6,52.3 150.2,50.6 151.7,52.1 153.2,51.8 154.7,48.9 156.2,52.5 157.7,58.5 159.3,52.7 160.8,52 162.3,50.7 163.8,50.9 165.3,53.8 166.8,56.6 168.4,50.7 169.9,48.9 171.4,49.4 172.9,51.3 174.4,51.3 175.9,49.1 177.5,51.7 179,54.4 180.5,53.2 182,50.6 183.5,50.8 185,51.9 186.6,51.9 188.1,48.5 189.6,50.6 191.1,50.6 192.6,50.6 194.1,48.3 195.7,50.5 197.2,49.2 198.7,51.3 200.2,52.3 201.7,51.3 203.2,50.8 204.8,50.1 206.3,50.7 207.8,51 209.3,47.7 210.8,50.7 212.3,53.2 213.9,53.6 215.4,52 216.9,51.6 218.4,51.7 219.9,49.4 221.4,52.6 223,52.7 224.5,52.7 226,51.2 L226,101Z" fill="#C15C17"/><path d="M0,101 L0,51.1 1.5,52.4 3,52.1 4.6,53.3 6.1,52.8 7.6,49 9.1,51.6 10.6,52.5 12.1,50.5 13.7,51.7 15.2,53 16.7,53.5 18.2,53.9 19.7,54.7 21.2,55.1 22.8,52.7 24.3,50.2 25.8,51.2 27.3,51.4 28.8,52 30.3,50.1 31.9,51.2 33.4,51.9 34.9,53.5 36.4,52 37.9,56 39.4,49.8 41,52.1 42.5,51.9 44,51.7 45.5,51.6 47,50.6 48.5,50.9 50.1,50.4 51.6,49.8 53.1,53 54.6,50.8 56.1,50.8 57.6,50.5 59.2,49.9 60.7,51.9 62.2,50 63.7,52.3 65.2,53.2 66.7,53.4 68.3,51 69.8,53 71.3,48.7 72.8,50.3 74.3,52.5 75.8,52.7 77.4,52.3 78.9,51.1 80.4,51.9 81.9,51.7 83.4,48.9 84.9,53 86.5,51.8 88,50.5 89.5,53.3 91,50.7 92.5,52.5 94,52.6 95.6,53.1 97.1,53.9 98.6,50.6 100.1,51.5 101.6,52.5 103.1,52.6 104.7,51.1 106.2,52 107.7,51.6 109.2,53.2 110.7,53.1 112.2,51.2 113.8,50.8 115.3,49.4 116.8,53.3 118.3,52.3 119.8,54.6 121.3,53.6 122.9,52.6 124.4,51.9 125.9,52.9 127.4,49.1 128.9,49.9 130.4,46.6 132,46.9 133.5,54.3 135,52.6 136.5,53.5 138,54 139.5,53 141.1,50.1 142.6,51.3 144.1,52.1 145.6,49.8 147.1,53.4 148.6,53.9 150.2,51.7 151.7,53.3 153.2,53.2 154.7,50.3 156.2,53.1 157.7,59.7 159.3,53.8 160.8,52.9 162.3,51.7 163.8,51.8 165.3,54.6 166.8,58 168.4,52.4 169.9,50.1 171.4,50.7 172.9,52.6 174.4,53 175.9,50.6 177.5,53.5 179,55.8 180.5,54.9 182,51.5 183.5,51.8 185,53.2 186.6,53.2 188.1,49.6 189.6,51.6 191.1,51.5 192.6,51.9 194.1,49.4 195.7,52 197.2,50.3 198.7,52.6 200.2,53.8 201.7,52.8 203.2,52 204.8,51.4 206.3,52.6 207.8,51.6 209.3,49.2 210.8,52.1 212.3,54.3 213.9,54.4 215.4,53.3 216.9,52.7 218.4,52.8 219.9,50.5 221.4,53.5 223,53.9 224.5,53.6 226,52.7 L226,101Z" fill="#447EBC"/><path d="M0,101 L0,52.4 1.5,53.8 3,53.5 4.6,54.5 6.1,54.2 7.6,50.5 9.1,52.6 10.6,54.1 12.1,52 13.7,52.9 15.2,54.3 16.7,54.8 18.2,55.2 19.7,55.2 21.2,55.8 22.8,54.2 24.3,51.4 25.8,52.9 27.3,53.2 28.8,53.4 30.3,51.9 31.9,52.2 33.4,53.3 34.9,54.4 36.4,53.3 37.9,57.5 39.4,51.1 41,53.6 42.5,53 44,53.1 45.5,52.7 47,52 48.5,52 50.1,52 51.6,51.4 53.1,54.5 54.6,52.4 56.1,52.5 57.6,51.8 59.2,51 60.7,53 62.2,51.9 63.7,53.7 65.2,54.2 66.7,54.4 68.3,52.7 69.8,54.3 71.3,50.5 72.8,52.1 74.3,53.7 75.8,53.9 77.4,53.3 78.9,52.7 80.4,52.8 81.9,53.1 83.4,50 84.9,54.7 86.5,53 88,51.6 89.5,54.7 91,51.7 92.5,54 94,53.8 95.6,54.2 97.1,55.1 98.6,51.8 100.1,52.4 101.6,53.9 103.1,53.8 104.7,52.2 106.2,53.6 107.7,53 109.2,55 110.7,53.8 112.2,52.9 113.8,52.2 115.3,51.2 116.8,54.6 118.3,53.5 119.8,55.7 121.3,54.9 122.9,53.4 124.4,53 125.9,53.9 127.4,51.3 128.9,52 130.4,49.3 132,48 133.5,55.8 135,53.7 136.5,54.7 138,55.3 139.5,54.1 141.1,51 142.6,52.5 144.1,53.3 145.6,51.1 147.1,54.6 148.6,55.2 150.2,52.7 151.7,54.8 153.2,54.3 154.7,51.6 156.2,54.2 157.7,60.9 159.3,55.5 160.8,54.3 162.3,53 163.8,53.1 165.3,55.7 166.8,58.8 168.4,53 169.9,51.4 171.4,52.1 172.9,54 174.4,53.7 175.9,51.6 177.5,54.9 179,56.8 180.5,56.4 182,53 183.5,52.7 185,54.7 186.6,54.4 188.1,50.7 189.6,53 191.1,52.6 192.6,52.7 194.1,51 195.7,53.4 197.2,51.8 198.7,53.9 200.2,54.6 201.7,54.1 203.2,53.8 204.8,52.8 206.3,53.9 207.8,53 209.3,50.4 210.8,53.4 212.3,55.5 213.9,55.4 215.4,54.5 216.9,54 218.4,54.1 219.9,52.5 221.4,54.7 223,54.8 224.5,54.8 226,53.5 L226,101Z" fill="#CCA300"/><path d="M0,101 L0,53.2 1.5,54.9 3,55.1 4.6,55.9 6.1,55.9 7.6,52.2 9.1,53.6 10.6,55.1 12.1,53.6 13.7,54.1 15.2,55.9 16.7,56.3 18.2,56.2 19.7,56.7 21.2,57.2 22.8,55.4 24.3,52.6 25.8,54.1 27.3,54.6 28.8,55 30.3,53.4 31.9,53.4 33.4,54.2 34.9,55.8 36.4,54.6 37.9,58.5 39.4,52.1 41,55.3 42.5,54.7 44,53.9 45.5,54.3 47,53.4 48.5,53.8 50.1,53 51.6,52.9 53.1,55.6 54.6,53.6 56.1,53.9 57.6,53.4 59.2,52.3 60.7,53.8 62.2,53.4 63.7,55 65.2,55.4 66.7,55.2 68.3,53.8 69.8,55.9 71.3,52.2 72.8,53.5 74.3,54.7 75.8,55.4 77.4,54.3 78.9,54.2 80.4,53.9 81.9,53.9 83.4,51.4 84.9,55.9 86.5,54.3 88,52.6 89.5,55.7 91,53.3 92.5,55.3 94,55.5 95.6,56 97.1,56.1 98.6,52.9 100.1,52.7 101.6,55.1 103.1,54.9 104.7,53.5 106.2,54.8 107.7,54.1 109.2,56 110.7,54.9 112.2,54.5 113.8,53.6 115.3,53.1 116.8,56.1 118.3,54.6 119.8,56.8 121.3,56.5 122.9,54.1 124.4,54.3 125.9,55.1 127.4,52.1 128.9,54.3 130.4,52.1 132,49.9 133.5,57 135,54.9 136.5,56 138,56.9 139.5,55.2 141.1,53 142.6,53.5 144.1,54.6 145.6,52.2 147.1,56.1 148.6,56.3 150.2,54.4 151.7,56.4 153.2,55.7 154.7,52.4 156.2,55.4 157.7,61.9 159.3,56.9 160.8,55.2 162.3,54.5 163.8,54.6 165.3,56.9 166.8,60 168.4,54.1 169.9,53 171.4,53.1 172.9,55.1 174.4,55.7 175.9,52.8 177.5,56.1 179,57.6 180.5,57.5 182,54.4 183.5,53.7 185,55.6 186.6,55.6 188.1,52.5 189.6,54.2 191.1,54.6 192.6,54.4 194.1,52.5 195.7,54.6 197.2,53.2 198.7,56.1 200.2,55.5 201.7,55.5 203.2,55.6 204.8,54.4 206.3,55.2 207.8,54.2 209.3,52 210.8,54.1 212.3,57.2 213.9,56.5 215.4,55.2 216.9,55.2 218.4,55.4 219.9,53.7 221.4,55.5 223,55.7 224.5,56.3 226,54.9 L226,101Z" fill="#508642"/><path d="M0,101 L0,55.3 1.5,55.8 3,56.8 4.6,57 6.1,56.9 7.6,53.8 9.1,55.3 10.6,56.7 12.1,54.5 13.7,55.2 15.2,57.4 16.7,57.7 18.2,57.8 19.7,57.8 21.2,58 22.8,56.3 24.3,54 25.8,55 27.3,55.4 28.8,56.4 30.3,55.1 31.9,54.5 33.4,55.4 34.9,57 36.4,56.1 37.9,59.6 39.4,53.3 41,56.6 42.5,55.6 44,55.6 45.5,56 47,54.7 48.5,55.2 50.1,54.3 51.6,54.2 53.1,56.6 54.6,55.1 56.1,55.4 57.6,55 59.2,53.3 60.7,55.1 62.2,54.3 63.7,56.8 65.2,56.2 66.7,56.4 68.3,55.6 69.8,56.6 71.3,53.5 72.8,54.3 74.3,56.3 75.8,56.6 77.4,55.4 78.9,55.2 80.4,55.3 81.9,55.2 83.4,52.9 84.9,57.3 86.5,55.4 88,54 89.5,57.4 91,54.7 92.5,56.7 94,56.9 95.6,57.1 97.1,57.4 98.6,54.2 100.1,54.8 101.6,56.4 103.1,55.9 104.7,54.9 106.2,56 107.7,55.2 109.2,57.6 110.7,56.1 112.2,55.6 113.8,55.1 115.3,55 116.8,57.8 118.3,56 119.8,58.2 121.3,57.6 122.9,55.6 124.4,55.6 125.9,56.5 127.4,53.6 128.9,56.4 130.4,54.3 132,51.9 133.5,58.3 135,56.1 136.5,57.4 138,57.8 139.5,56.3 141.1,54.4 142.6,54.9 144.1,56.2 145.6,53.6 147.1,56.9 148.6,57.6 150.2,55.6 151.7,57.7 153.2,57.3 154.7,53.7 156.2,56.6 157.7,62.5 159.3,58.1 160.8,56.8 162.3,55.9 163.8,55.6 165.3,57.8 166.8,61 168.4,55.5 169.9,54.1 171.4,54.8 172.9,57.1 174.4,56.7 175.9,54.7 177.5,58 179,58.2 180.5,58.3 182,55.7 183.5,55 185,56.6 186.6,56.9 188.1,54 189.6,55.2 191.1,55.3 192.6,55.6 194.1,54 195.7,56.3 197.2,54.9 198.7,56.6 200.2,56.5 201.7,56.8 203.2,56.6 204.8,55.9 206.3,56.6 207.8,55.7 209.3,53.7 210.8,55.3 212.3,59 213.9,57.3 215.4,56.2 216.9,56.1 218.4,56.4 219.9,55.2 221.4,57.3 223,56.5 224.5,57.8 226,56.5 L226,101Z" fill="#705DA0"/><path d="M0,101 L0,57.1 1.5,57.2 3,58.1 4.6,58.5 6.1,57.8 7.6,54.6 9.1,56.7 10.6,58.7 12.1,56.3 13.7,56.6 15.2,58.9 16.7,59.1 18.2,59.2 19.7,59.4 21.2,58.9 22.8,57.3 24.3,54.7 25.8,56.1 27.3,57.1 28.8,57.8 30.3,56.1 31.9,55.7 33.4,56.6 34.9,58.7 36.4,57.6 37.9,60.9 39.4,55 41,58.1 42.5,57.3 44,56.7 45.5,57.1 47,55.9 48.5,57.1 50.1,55.4 51.6,55.6 53.1,58.2 54.6,56.1 56.1,56.4 57.6,56.9 59.2,54.6 60.7,56.4 62.2,55.7 63.7,58.2 65.2,57.1 66.7,57.3 68.3,56.8 69.8,57.8 71.3,54.8 72.8,55.3 74.3,58.4 75.8,58.1 77.4,57.4 78.9,56.4 80.4,56.6 81.9,56.4 83.4,54.2 84.9,58.7 86.5,56.6 88,55 89.5,58.5 91,56 92.5,58.3 94,57.8 95.6,58.2 97.1,58.8 98.6,55.9 100.1,56 101.6,57.8 103.1,57.2 104.7,56.2 106.2,57.4 107.7,56.3 109.2,58.8 110.7,57.4 112.2,57.4 113.8,56.4 115.3,56.8 116.8,59.1 118.3,57.4 119.8,59.2 121.3,58.9 122.9,57.3 124.4,57.4 125.9,57.5 127.4,55.8 128.9,58.5 130.4,57.3 132,54.2 133.5,59.9 135,57.2 136.5,58.7 138,59 139.5,58.2 141.1,55.7 142.6,55.5 144.1,57.9 145.6,55.1 147.1,58.2 148.6,58.2 150.2,57.9 151.7,58.9 153.2,58.5 154.7,54.9 156.2,58 157.7,63.5 159.3,59.4 160.8,58.2 162.3,57.2 163.8,57.2 165.3,58.7 166.8,62.5 168.4,56.9 169.9,55.4 171.4,56.3 172.9,58.4 174.4,58.1 175.9,55.9 177.5,59 179,58.9 180.5,59.2 182,56.8 183.5,56.5 185,57.9 186.6,58.2 188.1,55 189.6,56 191.1,56.6 192.6,57.6 194.1,55 195.7,58 197.2,55.8 198.7,57.5 200.2,57.5 201.7,57.8 203.2,58.2 204.8,57.2 206.3,57.9 207.8,56.9 209.3,55.3 210.8,57.1 212.3,60.2 213.9,58.5 215.4,57.2 216.9,57.3 218.4,57.3 219.9,56.9 221.4,58.3 223,58.1 224.5,58.7 226,58.1 L226,101Z" fill="#BA43A9"/><path d="M0,101 L0,57.7 1.5,58.1 3,59.6 4.6,59.6 6.1,58.9 7.6,56.1 9.1,58.1 10.6,60 12.1,57.6 13.7,57.8 15.2,60.7 16.7,60.7 18.2,60.5 19.7,60.4 21.2,59.6 22.8,58.3 24.3,56.4 25.8,57.1 27.3,58.3 28.8,59.6 30.3,57.7 31.9,57.1 33.4,58 34.9,59.9 36.4,58.9 37.9,62.1 39.4,56.7 41,59.6 42.5,58.4 44,58.4 45.5,58.7 47,57.6 48.5,58.8 50.1,56.9 51.6,57 53.1,59.9 54.6,57.8 56.1,57.6 57.6,58.2 59.2,56 60.7,57.9 62.2,57 63.7,59.1 65.2,58.8 66.7,58.4 68.3,57.8 69.8,58.8 71.3,56.1 72.8,56.5 74.3,59 75.8,58.9 77.4,58.2 78.9,57.4 80.4,58 81.9,57.5 83.4,56.1 84.9,60.2 86.5,58.3 88,56.5 89.5,59.5 91,57.4 92.5,59.2 94,58.8 95.6,59.6 97.1,60.2 98.6,57.4 100.1,57.2 101.6,59.4 103.1,58.7 104.7,57.6 106.2,58.5 107.7,57.5 109.2,60.5 110.7,59.5 112.2,58.6 113.8,57.8 115.3,57.9 116.8,59.7 118.3,58.9 119.8,60.6 121.3,60.3 122.9,58.4 124.4,58.5 125.9,59.3 127.4,57.1 128.9,60.8 130.4,60.4 132,56.3 133.5,61.2 135,58.6 136.5,59.5 138,60.3 139.5,59.4 141.1,56.6 142.6,56.8 144.1,59.5 145.6,57.1 147.1,59.2 148.6,59.6 150.2,59.3 151.7,60.2 153.2,59.7 154.7,56.3 156.2,59.5 157.7,64.2 159.3,61.2 160.8,59.5 162.3,58.6 163.8,58.4 165.3,60.4 166.8,63.2 168.4,58 169.9,56.8 171.4,57.3 172.9,59.7 174.4,59.5 175.9,57.6 177.5,60.3 179,60 180.5,60.7 182,58.1 183.5,57.5 185,59.5 186.6,59.4 188.1,56 189.6,57.7 191.1,58.1 192.6,58.7 194.1,56.5 195.7,59.1 197.2,57 198.7,58.6 200.2,59.1 201.7,59.1 203.2,59.7 204.8,58.1 206.3,59.1 207.8,57.7 209.3,56.4 210.8,58.2 212.3,61.4 213.9,59.3 215.4,58.8 216.9,58.1 218.4,59 219.9,58.1 221.4,59.9 223,59 224.5,60.1 226,59.6 L226,101Z" fill="#1F78C1"/><path d="M0,101 L0,63.8 1.5,64.4 3,66.3 4.6,64.7 6.1,64.9 7.6,62.5 9.1,64.9 10.6,65.7 12.1,64.3 13.7,64 15.2,66.6 16.7,66.3 18.2,66 19.7,66 21.2,65.4 22.8,64 24.3,62.5 25.8,64 27.3,65 28.8,66.2 30.3,64.4 31.9,63.7 33.4,64.1 34.9,65.6 36.4,65.6 37.9,67.3 39.4,62.8 41,65.6 42.5,64.9 44,65.4 45.5,64.7 47,63.9 48.5,65.1 50.1,63.5 51.6,63.3 53.1,66.1 54.6,63.8 56.1,63.9 57.6,64.1 59.2,62.6 60.7,64.1 62.2,64.1 63.7,65 65.2,64.6 66.7,65.1 68.3,64.4 69.8,64.4 71.3,63.7 72.8,62.7 74.3,65.8 75.8,65 77.4,64.8 78.9,64.3 80.4,64 81.9,64 83.4,62.7 84.9,66.7 86.5,64.9 88,63.5 89.5,66 91,64.1 92.5,65.7 94,64.9 95.6,65 97.1,65.6 98.6,63.9 100.1,63.7 101.6,65.7 103.1,64.7 104.7,63.6 106.2,64.1 107.7,64.4 109.2,65.9 110.7,66.6 112.2,64.6 113.8,65.3 115.3,64.4 116.8,65.8 118.3,65.2 119.8,66.4 121.3,66.4 122.9,64.5 124.4,64.8 125.9,65.1 127.4,63.6 128.9,66.3 130.4,66.3 132,63.1 133.5,66.4 135,65 136.5,66.4 138,66.6 139.5,66.4 141.1,63.5 142.6,63.2 144.1,65 145.6,63.1 147.1,65.1 148.6,65.6 150.2,65.4 151.7,66.3 153.2,65.3 154.7,62.5 156.2,65.5 157.7,67.5 159.3,67 160.8,65.9 162.3,64.7 163.8,64.5 165.3,66.1 166.8,68.8 168.4,63.8 169.9,63.5 171.4,63.7 172.9,64.9 174.4,65.6 175.9,63.9 177.5,66.7 179,65.3 180.5,66.6 182,64.7 183.5,64.5 185,64.8 186.6,65.3 188.1,63.1 189.6,64 191.1,63.8 192.6,65.7 194.1,63.7 195.7,65.2 197.2,63.5 198.7,64.8 200.2,65.5 201.7,65.8 203.2,65.7 204.8,64.3 206.3,65.2 207.8,63 209.3,62.8 210.8,64.7 212.3,66.9 213.9,65.4 215.4,65.4 216.9,64 218.4,64.7 219.9,64.6 221.4,66.1 223,65.5 224.5,65.4 226,65.7 L226,101Z" fill="#E24D42"/><path d="M0,101 L0,71.6 1.5,72.3 3,72.5 4.6,72.3 6.1,71.4 7.6,70.7 9.1,72.3 10.6,73.2 12.1,72.7 13.7,71.8 15.2,73.1 16.7,72.7 18.2,72.5 19.7,72.7 21.2,72.7 22.8,71.8 24.3,70 25.8,71.9 27.3,71.8 28.8,72.6 30.3,71.4 31.9,71.4 33.4,70.8 34.9,71.6 36.4,72.4 37.9,74.1 39.4,70.1 41,72.7 42.5,71.9 44,71.6 45.5,72 47,72.1 48.5,72.1 50.1,71.6 51.6,69.9 53.1,73.2 54.6,70.8 56.1,71.1 57.6,70.4 59.2,70.5 60.7,71.1 62.2,70.3 63.7,72.5 65.2,71.8 66.7,71.7 68.3,71.5 69.8,72 71.3,71.3 72.8,70.1 74.3,72.7 75.8,72.3 77.4,72.7 78.9,72.6 80.4,71.5 81.9,71.6 83.4,70.3 84.9,73.1 86.5,71.2 88,70.5 89.5,73.2 91,71.4 92.5,73 94,71.8 95.6,71.9 97.1,72.6 98.6,70.6 100.1,70.5 101.6,72 103.1,71.6 104.7,70.8 106.2,70.9 107.7,71.3 109.2,73 110.7,73.1 112.2,71.3 113.8,71.9 115.3,71.7 116.8,72.2 118.3,72.3 119.8,72.3 121.3,73.4 122.9,71.6 124.4,71.5 125.9,72.1 127.4,71.7 128.9,73.4 130.4,72.7 132,70.2 133.5,73.3 135,72.4 136.5,73.6 138,72.9 139.5,73.6 141.1,71.1 142.6,71.1 144.1,72.3 145.6,71.2 147.1,72.9 148.6,72.5 150.2,73.2 151.7,72.2 153.2,73.1 154.7,70.4 156.2,72.4 157.7,73.6 159.3,73.6 160.8,73 162.3,71.8 163.8,71.2 165.3,73 166.8,74.1 168.4,70.7 169.9,71.6 171.4,71.9 172.9,72.2 174.4,73.7 175.9,71.4 177.5,73.2 179,71.4 180.5,73.7 182,72 183.5,72.1 185,71.6 186.6,72.4 188.1,70.9 189.6,71.3 191.1,71.2 192.6,72.9 194.1,71.3 195.7,72.9 197.2,70.4 198.7,72.6 200.2,72.4 201.7,73.2 203.2,72.9 204.8,71.9 206.3,72.6 207.8,70.6 209.3,70.1 210.8,71.8 212.3,73.6 213.9,72.5 215.4,72.3 216.9,70.5 218.4,72.2 219.9,72.5 221.4,72.8 223,72.5 224.5,72.3 226,73.1 L226,101Z" fill="#EF843C"/><path d="M0,101 L0,79.5 1.5,80.3 3,80.4 4.6,79.3 6.1,79.4 7.6,78 9.1,79.9 10.6,80.9 12.1,80.3 13.7,79.6 15.2,80.3 16.7,80.2 18.2,79.6 19.7,79.5 21.2,80.3 22.8,79 24.3,78.3 25.8,80.4 27.3,79.6 28.8,80.2 30.3,78.6 31.9,78.9 33.4,78.3 34.9,79.6 36.4,79.9 37.9,81.3 39.4,77.9 41,80.1 42.5,78.9 44,78.6 45.5,79 47,79.7 48.5,80.3 50.1,78.7 51.6,77.8 53.1,80.7 54.6,79 56.1,79.8 57.6,78.6 59.2,78.2 60.7,79 62.2,78.5 63.7,80 65.2,79.1 66.7,79.4 68.3,80 69.8,79.3 71.3,79.5 72.8,78.1 74.3,80.2 75.8,79.6 77.4,79.5 78.9,79.6 80.4,79.2 81.9,79.6 83.4,77.5 84.9,79.9 86.5,78.3 88,79.3 89.5,80.1 91,78.3 92.5,81.1 94,78.8 95.6,80 97.1,79.8 98.6,78.7 100.1,78.7 101.6,79.3 103.1,79.2 104.7,77.9 106.2,78.9 107.7,78.7 109.2,80.1 110.7,80.9 112.2,79.1 113.8,79.5 115.3,79 116.8,80.3 118.3,79.5 119.8,79.3 121.3,80.2 122.9,79.3 124.4,78.9 125.9,79.4 127.4,78.7 128.9,80.6 130.4,79.9 132,78.8 133.5,80 135,79.7 136.5,81.2 138,80 139.5,80.6 141.1,79 142.6,79.4 144.1,80.4 145.6,78.8 147.1,80.2 148.6,79.8 150.2,79.9 151.7,79.4 153.2,81.5 154.7,78.2 156.2,79.8 157.7,79.8 159.3,80.8 160.8,80.2 162.3,79.7 163.8,79 165.3,80.7 166.8,79.6 168.4,78.8 169.9,79.6 171.4,80.3 172.9,79.5 174.4,80.2 175.9,78.3 177.5,80.2 179,79.3 180.5,80.7 182,79.3 183.5,80.2 185,79.7 186.6,80.4 188.1,78.2 189.6,79.8 191.1,79 192.6,80.1 194.1,79.1 195.7,79.7 197.2,77.4 198.7,79.8 200.2,79.4 201.7,80.6 203.2,80.1 204.8,79.3 206.3,79.7 207.8,78.7 209.3,77.2 210.8,79 212.3,80.2 213.9,79.7 215.4,79.2 216.9,79.1 218.4,79.6 219.9,80.5 221.4,80.1 223,79 224.5,79.5 226,80.3 L226,101Z" fill="#6ED0E0"/><path d="M0,101 L0,86.5 1.5,87.4 3,87.2 4.6,86.5 6.1,86.2 7.6,86 9.1,87.1 10.6,87.5 12.1,87.2 13.7,87.4 15.2,87.3 16.7,87.7 18.2,85.9 19.7,86.4 21.2,87.7 22.8,86.4 24.3,85.9 25.8,87.1 27.3,86 28.8,86.7 30.3,86.3 31.9,86.3 33.4,85.9 34.9,86.5 36.4,87.4 37.9,87.3 39.4,85.2 41,86.8 42.5,85.9 44,86.1 45.5,86.7 47,86.8 48.5,87.3 50.1,86.6 51.6,85.5 53.1,87.6 54.6,86.3 56.1,86.9 57.6,86.3 59.2,85.7 60.7,86.4 62.2,85.8 63.7,87 65.2,86.8 66.7,86.8 68.3,86 69.8,86.3 71.3,86.8 72.8,85 74.3,87 75.8,86.5 77.4,86.9 78.9,86.4 80.4,86.6 81.9,87.5 83.4,85.1 84.9,87.3 86.5,85.3 88,87.1 89.5,87.3 91,86 92.5,87.7 94,86.7 95.6,86.9 97.1,87.1 98.6,86.5 100.1,86 101.6,86.3 103.1,86.3 104.7,85.6 106.2,86.7 107.7,86.3 109.2,87 110.7,87.9 112.2,86.7 113.8,87.1 115.3,85.9 116.8,87.2 118.3,87.1 119.8,87 121.3,87 122.9,85.9 124.4,86.9 125.9,86.6 127.4,86.2 128.9,86.7 130.4,86.8 132,85.9 133.5,87.3 135,86.5 136.5,87.6 138,86.4 139.5,87.6 141.1,86.3 142.6,86.7 144.1,86.8 145.6,85.6 147.1,87.2 148.6,87.2 150.2,87.3 151.7,86.7 153.2,87.8 154.7,85.9 156.2,86.8 157.7,86.3 159.3,87.5 160.8,87.2 162.3,86.7 163.8,86 165.3,87.3 166.8,86.6 168.4,86.3 169.9,86.5 171.4,87 172.9,86.2 174.4,87.2 175.9,86.2 177.5,87.2 179,86.9 180.5,87.2 182,85.9 183.5,86.9 185,86.4 186.6,87.7 188.1,86.2 189.6,86.6 191.1,86.4 192.6,87.9 194.1,87.4 195.7,87 197.2,85 198.7,87.7 200.2,86.6 201.7,88 203.2,87.1 204.8,86 206.3,86.6 207.8,86.5 209.3,85.1 210.8,86.2 212.3,86.4 213.9,87.4 215.4,86.4 216.9,87 218.4,86.9 219.9,87.1 221.4,87.1 223,85.6 224.5,87.5 226,86.4 L226,101Z" fill="#EAB839"/><path d="M0,101 L0,93.5 1.5,93.8 3,94.6 4.6,93.3 6.1,93.9 7.6,93.5 9.1,92.9 10.6,93.7 12.1,94.4 13.7,94.2 15.2,93.3 16.7,94.6 18.2,93.7 19.7,93.6 21.2,94.4 22.8,93.7 24.3,93.5 25.8,94.2 27.3,94.1 28.8,93.6 30.3,94.5 31.9,94.3 33.4,93.3 34.9,93.8 36.4,94.5 37.9,93.8 39.4,92.8 41,94.6 42.5,93.4 44,93.4 45.5,93.9 47,93.5 48.5,94.2 50.1,93 51.6,93 53.1,94.3 54.6,93.9 56.1,93.8 57.6,94.1 59.2,93.7 60.7,94.4 62.2,93.5 63.7,94 65.2,93.9 66.7,93.6 68.3,93.4 69.8,94.3 71.3,93.4 72.8,93.4 74.3,93.9 75.8,93.1 77.4,94.2 78.9,94.1 80.4,93.6 81.9,94.2 83.4,93.1 84.9,93.7 86.5,93 88,94.4 89.5,94.3 91,93.2 92.5,94.4 94,93.3 95.6,94.2 97.1,93.7 98.6,93.2 100.1,93.9 101.6,94.4 103.1,94.1 104.7,93.3 106.2,93.7 107.7,93.5 109.2,93.8 110.7,93.7 112.2,93.9 113.8,94.3 115.3,93.6 116.8,93.7 118.3,94.8 119.8,93.8 121.3,93.3 122.9,92.9 124.4,94.5 125.9,93.8 127.4,93.5 128.9,93.4 130.4,94.2 132,93.6 133.5,94 135,93.9 136.5,94.1 138,93.7 139.5,94 141.1,93.7 142.6,93.9 144.1,93.4 145.6,93 147.1,93.9 148.6,94.2 150.2,93.9 151.7,94.1 153.2,94.7 154.7,93.8 156.2,94.1 157.7,93.4 159.3,93.9 160.8,93.4 162.3,93.4 163.8,94.1 165.3,94 166.8,94.1 168.4,94.1 169.9,93.4 171.4,94.1 172.9,94 174.4,94.2 175.9,93.1 177.5,94 179,93.9 180.5,94.3 182,93.7 183.5,94.2 185,94.2 186.6,94.9 188.1,94.7 189.6,93.7 191.1,93.5 192.6,94.7 194.1,93.8 195.7,93.7 197.2,92.3 198.7,94.3 200.2,94.2 201.7,94.4 203.2,93.4 204.8,93.3 206.3,94 207.8,93.1 209.3,92.8 210.8,94.1 212.3,93.6 213.9,93.9 215.4,94.2 216.9,94.1 218.4,94 219.9,94.5 221.4,93.9 223,93.4 224.5,94.3 226,94.1 L226,101Z" fill="#7EB26D"/>
</svg>
<div class="yl" style="right:934px;top:283px">0 B/s</div>
<div class="yl" style="right:934px;top:257.8px">250 MB/s</div>
<div class="yl" style="right:934px;top:232.5px">500 MB/s</div>
<div class="yl" style="right:934px;top:207.2px">750 MB/s</div>
<div class="yl" style="right:934px;top:182px">1 GB/s</div>
<div class="xl" style="left:462.6px;top:298px">20:30</div>
<div class="xl" style="left:500.4px;top:298px">20:40</div>
<div class="xl" style="left:538.3px;top:298px">20:50</div>
<div class="xl" style="left:576.1px;top:298px">21:00</div>
<div class="xl" style="left:614px;top:298px">21:10</div>
<div class="xl" style="left:651.8px;top:298px">21:20</div>
<div class="panel" style="left:733px;top:138px;width:322px;height:258px"></div><div class="ptitle" style="left:733px;top:144.5px;width:322px">Inflight requests (per pod)</div>
<svg style="position:absolute;left:770px;top:188px" width="258" height="149" viewBox="0 -1 258 149">
<line x1="0" x2="258" y1="147.5" y2="147.5" stroke="rgba(36,41,46,0.12)" stroke-width="1"/>
<line x1="0" x2="258" y1="110.5" y2="110.5" stroke="rgba(36,41,46,0.12)" stroke-width="1"/>
<line x1="0" x2="258" y1="73.5" y2="73.5" stroke="rgba(36,41,46,0.12)" stroke-width="1"/>
<line x1="0" x2="258" y1="36.5" y2="36.5" stroke="rgba(36,41,46,0.12)" stroke-width="1"/>
<line x1="0" x2="258" y1="0.5" y2="0.5" stroke="rgba(36,41,46,0.12)" stroke-width="1"/>
<line x1="7.5" x2="7.5" y1="0" y2="147" stroke="rgba(36,41,46,0.12)" stroke-width="1"/>
<line x1="50.5" x2="50.5" y1="0" y2="147" stroke="rgba(36,41,46,0.12)" stroke-width="1"/>
<line x1="93.5" x2="93.5" y1="0" y2="147" stroke="rgba(36,41,46,0.12)" stroke-width="1"/>
<line x1="137.5" x2="137.5" y1="0" y2="147" stroke="rgba(36,41,46,0.12)" stroke-width="1"/>
<line x1="180.5" x2="180.5" y1="0" y2="147" stroke="rgba(36,41,46,0.12)" stroke-width="1"/>
<line x1="223.5" x2="223.5" y1="0" y2="147" stroke="rgba(36,41,46,0.12)" stroke-width="1"/>
<polyline points="0,146.7 2.1,146.7 4.2,146.6 6.2,146.6 8.3,146.7 10.4,146.7 12.5,146.7 14.6,146.7 16.6,146.7 18.7,146.7 20.8,146.7 22.9,146.7 25,146.6 27,146.7 29.1,146.7 31.2,146.7 33.3,146.7 35.4,146.7 37.5,146.7 39.5,146.7 41.6,146.7 43.7,146.7 45.8,146.7 47.9,146.7 49.9,146.7 52,146.7 54.1,146.7 56.2,146.7 58.3,146.7 60.3,146.7 62.4,146.7 64.5,146.7 66.6,146.7 68.7,146.7 70.7,146.6 72.8,146.7 74.9,146.7 77,146.7 79.1,146.7 81.1,146.7 83.2,146.7 85.3,146.6 87.4,146.6 89.5,146.7 91.5,146.7 93.6,146.7 95.7,146.7 97.8,146.7 99.9,146.7 102,146.7 104,146.6 106.1,146.6 108.2,146.7 110.3,146.7 112.4,146.7 114.4,146.7 116.5,146.6 118.6,146.6 120.7,146.6 122.8,146.6 124.8,146.7 126.9,146.7 129,146.7 131.1,146.7 133.2,146.7 135.2,146.6 137.3,146.6 139.4,146.7 141.5,146.7 143.6,146.7 145.6,146.7 147.7,146.6 149.8,146.7 151.9,146.7 154,146.7 156,146.7 158.1,146.7 160.2,146.7 162.3,146.7 164.4,146.7 166.5,146.7 168.5,146.7 170.6,146.7 172.7,146.7 174.8,146.7 176.9,146.6 178.9,146.6 181,146.6 183.1,146.6 185.2,146.6 187.3,146.7 189.3,146.7 191.4,146.7 193.5,146.7 195.6,146.7 197.7,146.7 199.7,146.7 201.8,146.7 203.9,146.7 206,146.7 208.1,146.7 210.1,146.7 212.2,146.7 214.3,146.7 216.4,146.7 218.5,146.7 220.5,146.7 222.6,146.7 224.7,146.7 226.8,146.7 228.9,146.7 231,146.6 233,146.7 235.1,146.7 237.2,146.7 239.3,146.7 241.4,146.6 243.4,146.7 245.5,146.7 247.6,146.7 249.7,146.7 251.8,146.7 253.8,146.7 255.9,146.7 258,146.7" fill="none" stroke="#7EB26D" stroke-width="1" stroke-linejoin="round"/><polyline points="0,146.8 2.1,146.2 4.2,146.6 6.2,146.1 8.3,146.9 10.4,100 12.5,146.6 14.6,146.5 16.6,146.6 18.7,146.7 20.8,144 22.9,146.2 25,147 27,146.4 29.1,145.8 31.2,146.6 33.3,145 35.4,145.9 37.5,145.4 39.5,146.8 41.6,145.9 43.7,146.8 45.8,146.9 47.9,146.8 49.9,144.8 52,143.8 54.1,145.2 56.2,146.9 58.3,145.7 60.3,146.6 62.4,146.1 64.5,146.3 66.6,144.7 68.7,146.3 70.7,144.8 72.8,146.2 74.9,91.1 77,146.9 79.1,122 81.1,144.3 83.2,145.9 85.3,146.9 87.4,145.8 89.5,145.6 91.5,146.2 93.6,146.9 95.7,146.4 97.8,145.2 99.9,146.3 102,145.9 104,146.9 106.1,146.5 108.2,146.8 110.3,146.4 112.4,143.4 114.4,146.4 116.5,145.7 118.6,146.4 120.7,146.8 122.8,146.6 124.8,146.9 126.9,146 129,146.5 131.1,146.8 133.2,146.2 135.2,143.4 137.3,145.8 139.4,146.3 141.5,146.4 143.6,63.2 145.6,146.6 147.7,146.9 149.8,145.9 151.9,146.4 154,146.7 156,146.7 158.1,146.8 160.2,145.7 162.3,60.3 164.4,110.2 166.5,55.9 168.5,146.9 170.6,120.5 172.7,146 174.8,147 176.9,146.6 178.9,146 181,146.4 183.1,67.6 185.2,146.4 187.3,75 189.3,146.1 191.4,90.4 193.5,146.5 195.6,145.9 197.7,146.7 199.7,145.5 201.8,145.2 203.9,134.5 206,146.2 208.1,146.9 210.1,145 212.2,146.3 214.3,146.4 216.4,146.8 218.5,109.5 220.5,146.8 222.6,139.7 224.7,146.4 226.8,91.1 228.9,146.1 231,30.9 233,147 235.1,146.1 237.2,143.5 239.3,144.1 241.4,111 243.4,146.8 245.5,146.9 247.6,146.5 249.7,146.9 251.8,145.2 253.8,114.7 255.9,146.7 258,145.1" fill="none" stroke="#EAB839" stroke-width="1" stroke-linejoin="round"/>
</svg>
<div class="yl" style="right:636px;top:329px">0</div>
<div class="yl" style="right:636px;top:292.2px">250</div>
<div class="yl" style="right:636px;top:255.5px">500</div>
<div class="yl" style="right:636px;top:218.8px">750</div>
<div class="yl" style="right:636px;top:182px">1 K</div>
<div class="xl" style="left:761.4px;top:344px">20:30</div>
<div class="xl" style="left:804.6px;top:344px">20:40</div>
<div class="xl" style="left:847.9px;top:344px">20:50</div>
<div class="xl" style="left:891.1px;top:344px">21:00</div>
<div class="xl" style="left:934.4px;top:344px">21:10</div>
<div class="xl" style="left:977.6px;top:344px">21:20</div>
<div class="panel" style="left:1062px;top:138px;width:322px;height:258px"></div><div class="ptitle" style="left:1062px;top:144.5px;width:322px">TCP connections (per pod)</div>
<svg style="position:absolute;left:1092px;top:188px" width="266" height="149" viewBox="0 -1 266 149">
<line x1="0" x2="266" y1="147.5" y2="147.5" stroke="rgba(36,41,46,0.12)" stroke-width="1"/>
<line x1="0" x2="266" y1="117.5" y2="117.5" stroke="rgba(36,41,46,0.12)" stroke-width="1"/>
<line x1="0" x2="266" y1="88.5" y2="88.5" stroke="rgba(36,41,46,0.12)" stroke-width="1"/>
<line x1="0" x2="266" y1="58.5" y2="58.5" stroke="rgba(36,41,46,0.12)" stroke-width="1"/>
<line x1="0" x2="266" y1="29.5" y2="29.5" stroke="rgba(36,41,46,0.12)" stroke-width="1"/>
<line x1="0" x2="266" y1="0.5" y2="0.5" stroke="rgba(36,41,46,0.12)" stroke-width="1"/>
<line x1="7.5" x2="7.5" y1="0" y2="147" stroke="rgba(36,41,46,0.12)" stroke-width="1"/>
<line x1="51.5" x2="51.5" y1="0" y2="147" stroke="rgba(36,41,46,0.12)" stroke-width="1"/>
<line x1="96.5" x2="96.5" y1="0" y2="147" stroke="rgba(36,41,46,0.12)" stroke-width="1"/>
<line x1="140.5" x2="140.5" y1="0" y2="147" stroke="rgba(36,41,46,0.12)" stroke-width="1"/>
<line x1="185.5" x2="185.5" y1="0" y2="147" stroke="rgba(36,41,46,0.12)" stroke-width="1"/>
<line x1="229.5" x2="229.5" y1="0" y2="147" stroke="rgba(36,41,46,0.12)" stroke-width="1"/>
<polyline points="0,58.6 2.2,58.6 4.5,58.6 6.7,58.5 8.9,58.6 11.2,58.9 13.4,58.8 15.6,58.8 17.9,58.8 20.1,58.6 22.4,58.6 24.6,59 26.8,58.9 29.1,59 31.3,58.8 33.5,59 35.8,58.6 38,58.2 40.2,58.1 42.5,58.4 44.7,58.2 46.9,58.2 49.2,58.7 51.4,58.5 53.6,58 55.9,58.1 58.1,58.1 60.4,58.1 62.6,58.1 64.8,58.7 67.1,58.8 69.3,58.5 71.5,58.5 73.8,58.3 76,57.8 78.2,57.5 80.5,57.6 82.7,57.1 84.9,57.3 87.2,57.7 89.4,57.9 91.6,58 93.9,58.1 96.1,57.9 98.4,57.9 100.6,57.8 102.8,57.9 105.1,58.1 107.3,58.2 109.5,58 111.8,57.8 114,57.7 116.2,57.8 118.5,57.7 120.7,57.7 122.9,57.7 125.2,57.3 127.4,57.1 129.6,57.1 131.9,57.4 134.1,57.4 136.4,58.1 138.6,58.4 140.8,58.2 143.1,57.8 145.3,57.9 147.5,57.8 149.8,57.6 152,57.8 154.2,57.8 156.5,57.4 158.7,57 160.9,57.1 163.2,57.2 165.4,57.3 167.6,57.7 169.9,57.9 172.1,57.7 174.4,57.7 176.6,57.5 178.8,57.2 181.1,56.8 183.3,56.9 185.5,56.6 187.8,56.8 190,57 192.2,57.2 194.5,57.4 196.7,57.7 198.9,57.5 201.2,57.5 203.4,57.3 205.6,56.9 207.9,56.9 210.1,57.2 212.4,57.1 214.6,57.1 216.8,57.3 219.1,56.8 221.3,56.6 223.5,56.8 225.8,57 228,56.8 230.2,56.9 232.5,57.2 234.7,56.8 236.9,56.5 239.2,56.4 241.4,56.5 243.6,56.2 245.9,56.6 248.1,56.2 250.4,56.5 252.6,56.1 254.8,56.2 257.1,55.9 259.3,56.6 261.5,56.7 263.8,56.7 266,56.8" fill="none" stroke="#7EB26D" stroke-width="1" stroke-linejoin="round"/><polyline points="0,147 2.2,147 4.5,147 6.7,147 8.9,147 11.2,147 13.4,147 15.6,147 17.9,147 20.1,147 22.4,147 24.6,147 26.8,147 29.1,147 31.3,147 33.5,147 35.8,147 38,147 40.2,147 42.5,147 44.7,147 46.9,147 49.2,147 51.4,147 53.6,147 55.9,147 58.1,147 60.4,147 62.6,147 64.8,147 67.1,147 69.3,147 71.5,147 73.8,147 76,147 78.2,147 80.5,147 82.7,147 84.9,147 87.2,147 89.4,147 91.6,147 93.9,147 96.1,147 98.4,147 100.6,147 102.8,147 105.1,147 107.3,147 109.5,147 111.8,147 114,147 116.2,147 118.5,147 120.7,147 122.9,147 125.2,147 127.4,147 129.6,147 131.9,147 134.1,147 136.4,147 138.6,147 140.8,147 143.1,147 145.3,147 147.5,147 149.8,147 152,147 154.2,147 156.5,147 158.7,147 160.9,147 163.2,147 165.4,147 167.6,147 169.9,147 172.1,147 174.4,147 176.6,147 178.8,147 181.1,147 183.3,147 185.5,147 187.8,147 190,147 192.2,147 194.5,147 196.7,147 198.9,147 201.2,147 203.4,147 205.6,147 207.9,147 210.1,147 212.4,147 214.6,147 216.8,147 219.1,147 221.3,147 223.5,147 225.8,147 228,147 230.2,147 232.5,147 234.7,147 236.9,147 239.2,147 241.4,147 243.6,147 245.9,147 248.1,147 250.4,147 252.6,147 254.8,147 257.1,147 259.3,147 261.5,147 263.8,147 266,147" fill="none" stroke="#6ED0E0" stroke-width="1" stroke-linejoin="round"/><polyline points="-0.1,33.8 3.6,29.4 5.3,30.9 7.3,41.2 9.8,35.3 13.5,35.3 15.9,32.3 19.6,35.3 23.3,38.2 25.7,35.3 31.9,35.3 34.3,32.3 36.8,20.6 41.7,20.6 42.9,17.6 45.4,29.4 47.9,29.4 49.8,23.5 51.5,29.4 54,38.2 56.5,32.3 60.1,32.3 63.3,26.5 65.8,26.5 67.5,29.4 70,29.4 71.7,38.2 73.7,32.3 76.1,35.3 79.8,23.5 82.3,23.5 84.7,29.4 87.7,35.3 90.9,29.4 98.2,29.4 102.4,38.2 105.6,32.3 109.3,23.5 114.2,17.6 117.4,20.6 120.3,20.6 122.8,26.5 126.5,29.4 128.9,29.4 132.1,17.6 136.3,17.6 138.3,14.7 140.5,29.4 143.7,23.5 146.1,29.4 149.3,17.6 152.3,20.6 154.7,23.5 156.7,20.6 158.4,32.3 160.9,29.4 171.9,29.4 175.6,23.5 178.1,23.5 181.8,32.3 185.4,26.5 189.1,29.4 194,32.3 200.2,32.3 202.6,35.3 206.3,29.4 211.2,26.5 216.2,29.4 218.6,29.4 222.3,32.3 226,32.3 228.4,29.4 233.4,23.5 235.8,23.5 238.3,17.6 240.7,29.4 244.4,29.4 246.9,35.3 250.6,35.3 253,32.3 255,35.3 257.4,32.3 260.4,35.3 265.3,41.2" fill="none" stroke="#EAB839" stroke-width="1" stroke-linejoin="round"/>
</svg>
<div class="yl" style="right:314px;top:329px">0</div>
<div class="yl" style="right:314px;top:299.6px">10</div>
<div class="yl" style="right:314px;top:270.2px">20</div>
<div class="yl" style="right:314px;top:240.8px">30</div>
<div class="yl" style="right:314px;top:211.4px">40</div>
<div class="yl" style="right:314px;top:182px">50</div>
<div class="xl" style="left:1083.3px;top:344px">20:30</div>
<div class="xl" style="left:1127.8px;top:344px">20:40</div>
<div class="xl" style="left:1172.3px;top:344px">20:50</div>
<div class="xl" style="left:1216.7px;top:344px">21:00</div>
<div class="xl" style="left:1261.2px;top:344px">21:10</div>
<div class="xl" style="left:1305.7px;top:344px">21:20</div>
<div class="panel" style="left:73px;top:442px;width:322px;height:258px"></div><div class="ptitle" style="left:73px;top:448.5px;width:322px">Receive bandwidth</div>
<svg style="position:absolute;left:142px;top:492px" width="226" height="103" viewBox="0 -1 226 103">
<line x1="0" x2="226" y1="101.5" y2="101.5" stroke="rgba(36,41,46,0.12)" stroke-width="1"/>
<line x1="0" x2="226" y1="67.5" y2="67.5" stroke="rgba(36,41,46,0.12)" stroke-width="1"/>
<line x1="0" x2="226" y1="33.5" y2="33.5" stroke="rgba(36,41,46,0.12)" stroke-width="1"/>
<line x1="0" x2="226" y1="0.5" y2="0.5" stroke="rgba(36,41,46,0.12)" stroke-width="1"/>
<line x1="6.5" x2="6.5" y1="0" y2="101" stroke="rgba(36,41,46,0.12)" stroke-width="1"/>
<line x1="44.5" x2="44.5" y1="0" y2="101" stroke="rgba(36,41,46,0.12)" stroke-width="1"/>
<line x1="82.5" x2="82.5" y1="0" y2="101" stroke="rgba(36,41,46,0.12)" stroke-width="1"/>
<line x1="120.5" x2="120.5" y1="0" y2="101" stroke="rgba(36,41,46,0.12)" stroke-width="1"/>
<line x1="159.5" x2="159.5" y1="0" y2="101" stroke="rgba(36,41,46,0.12)" stroke-width="1"/>
<line x1="197.5" x2="197.5" y1="0" y2="101" stroke="rgba(36,41,46,0.12)" stroke-width="1"/>
<path d="M0,101 L0,27.2 1.5,23.9 3,15 4.6,7 6.1,12.6 7.6,32.8 9.1,29.1 10.6,16.7 12.1,19 13.7,27.6 15.2,39 16.7,27 18.2,28.4 19.7,31.5 21.2,28.1 22.8,19.7 24.3,16.2 25.8,22.8 27.3,21.4 28.8,19.6 30.3,22.4 31.9,31.4 33.4,28.3 34.9,36.3 36.4,31.8 37.9,23.1 39.4,20.1 41,22 42.5,24.9 44,33.4 45.5,31.8 47,34.6 48.5,30.2 50.1,15.3 51.6,20 53.1,20.9 54.6,22.9 56.1,38.1 57.6,63.8 59.2,27.1 60.7,29.6 62.2,31 63.7,32.8 65.2,16.8 66.7,19.4 68.3,11.7 69.8,25 71.3,26 72.8,31.5 74.3,15 75.8,15.5 77.4,21.3 78.9,-1 80.4,-1 81.9,10.1 83.4,16.7 84.9,19.1 86.5,19.4 88,15.3 89.5,11.7 91,20.4 92.5,17.6 94,16.8 95.6,15.4 97.1,16.1 98.6,14.8 100.1,39 101.6,23.3 103.1,59.5 104.7,27.8 106.2,40.2 107.7,55.1 109.2,29.4 110.7,27.5 112.2,53.9 113.8,32.6 115.3,29 116.8,30.4 118.3,25.1 119.8,29.6 121.3,56.7 122.9,31.6 124.4,43.7 125.9,22.7 127.4,13.9 128.9,21.4 130.4,41.5 132,40 133.5,39.3 135,63.2 136.5,55.2 138,21.4 139.5,23 141.1,28.9 142.6,28.4 144.1,30 145.6,65.4 147.1,24.3 148.6,17.5 150.2,13.6 151.7,17.4 153.2,47.1 154.7,22.4 156.2,16.8 157.7,11.3 159.3,21.3 160.8,19.2 162.3,28.3 163.8,34.5 165.3,32 166.8,18 168.4,13.7 169.9,14.8 171.4,6.5 172.9,9.4 174.4,16.4 175.9,34.3 177.5,56.7 179,40.4 180.5,72.5 182,28.8 183.5,25.1 185,20.2 186.6,23.1 188.1,18.7 189.6,7.3 191.1,6.9 192.6,7.9 194.1,4.9 195.7,2.5 197.2,5.8 198.7,12.5 200.2,53.9 201.7,21.6 203.2,20 204.8,14.4 206.3,5 207.8,5.4 209.3,19.1 210.8,18 212.3,15.9 213.9,9.8 215.4,9.1 216.9,19.7 218.4,20.4 219.9,28.1 221.4,31.9 223,15.2 224.5,21.2 226,17 L226,101Z" fill="#C15C17"/><path d="M0,101 L0,27.7 1.5,24.6 3,15.8 4.6,7.7 6.1,13.3 7.6,33.4 9.1,29.7 10.6,17.4 12.1,19.5 13.7,28.1 15.2,39.4 16.7,27.7 18.2,28.9 19.7,31.9 21.2,28.6 22.8,20.3 24.3,16.7 25.8,23.4 27.3,22.1 28.8,20.4 30.3,23.2 31.9,31.8 33.4,28.7 34.9,36.7 36.4,32.4 37.9,23.8 39.4,20.9 41,22.8 42.5,25.6 44,33.9 45.5,32.2 47,35.1 48.5,30.6 50.1,15.9 51.6,20.7 53.1,21.4 54.6,23.5 56.1,38.5 57.6,64.4 59.2,27.8 60.7,30.1 62.2,31.7 63.7,33.3 65.2,17.4 66.7,20 68.3,12.5 69.8,25.4 71.3,26.5 72.8,32.1 74.3,16 75.8,16.4 77.4,22 78.9,-1 80.4,-1 81.9,10.8 83.4,17.6 84.9,19.9 86.5,20.1 88,16 89.5,12.4 91,20.9 92.5,18.4 94,17.6 95.6,16 97.1,16.9 98.6,15.7 100.1,39.4 101.6,24.1 103.1,60 104.7,28.5 106.2,40.7 107.7,55.2 109.2,29.8 110.7,28.3 112.2,54.3 113.8,33.1 115.3,29.6 116.8,31 118.3,25.7 119.8,30.2 121.3,57.1 122.9,32.1 124.4,44.2 125.9,23.5 127.4,14.7 128.9,22.3 130.4,41.8 132,40.2 133.5,39.8 135,63.3 136.5,55.7 138,22.2 139.5,23.6 141.1,29.4 142.6,28.9 144.1,30.6 145.6,65.5 147.1,24.8 148.6,18.3 150.2,14.6 151.7,18.3 153.2,47.5 154.7,22.9 156.2,17.5 157.7,12 159.3,22 160.8,19.9 162.3,28.9 163.8,35.1 165.3,32.7 166.8,18.7 168.4,14.4 169.9,15.4 171.4,7.2 172.9,10.1 174.4,16.9 175.9,34.7 177.5,57.1 179,41.1 180.5,72.9 182,29.6 183.5,25.9 185,20.9 186.6,23.8 188.1,19.4 189.6,8.2 191.1,7.9 192.6,8.8 194.1,6.1 195.7,3.8 197.2,6.8 198.7,13.3 200.2,54.2 201.7,22.3 203.2,20.6 204.8,15 206.3,5.7 207.8,6.3 209.3,19.9 210.8,18.7 212.3,16.9 213.9,10.7 215.4,10 216.9,20.7 218.4,21.3 219.9,28.6 221.4,32.5 223,16.1 224.5,21.9 226,17.7 L226,101Z" fill="#447EBC"/><path d="M0,101 L0,28.5 1.5,25.3 3,16.7 4.6,8.7 6.1,14.1 7.6,33.8 9.1,30.2 10.6,18.1 12.1,20.3 13.7,28.8 15.2,40 16.7,28.3 18.2,29.6 19.7,32.5 21.2,29.2 22.8,20.9 24.3,17.4 25.8,23.9 27.3,22.5 28.8,20.9 30.3,23.8 31.9,32.4 33.4,29.3 34.9,37.2 36.4,33.1 37.9,24.3 39.4,21.6 41,23.5 42.5,26.2 44,34.3 45.5,32.5 47,35.6 48.5,31.2 50.1,16.6 51.6,21.4 53.1,22 54.6,24 56.1,38.9 57.6,64.5 59.2,28.2 60.7,30.4 62.2,32 63.7,33.5 65.2,18 66.7,20.9 68.3,13.3 69.8,26 71.3,27.2 72.8,32.7 74.3,16.7 75.8,17.3 77.4,22.9 78.9,-1 80.4,-1 81.9,11.6 83.4,18.4 84.9,20.5 86.5,20.7 88,16.8 89.5,13.1 91,21.5 92.5,19.2 94,18.4 95.6,16.9 97.1,17.7 98.6,16.5 100.1,40 101.6,24.8 103.1,60.3 104.7,29.1 106.2,41.1 107.7,55.7 109.2,30.5 110.7,28.8 112.2,54.3 113.8,33.7 115.3,30.2 116.8,31.3 118.3,26.2 119.8,30.8 121.3,57.4 122.9,32.7 124.4,44.7 125.9,24 127.4,15.3 128.9,23 130.4,42.4 132,40.8 133.5,40.3 135,63.4 136.5,55.9 138,22.9 139.5,24 141.1,29.9 142.6,29.6 144.1,31.2 145.6,65.7 147.1,25.4 148.6,19.1 150.2,15.4 151.7,19 153.2,48 154.7,23.7 156.2,18.5 157.7,12.9 159.3,22.6 160.8,20.5 162.3,29.5 163.8,35.7 165.3,33.3 166.8,19.4 168.4,15.1 169.9,16.2 171.4,8.2 172.9,11 174.4,17.7 175.9,35.2 177.5,57.2 179,41.4 180.5,73 182,30.2 183.5,26.5 185,21.5 186.6,24.3 188.1,19.9 189.6,8.9 191.1,8.6 192.6,9.6 194.1,6.8 195.7,4.6 197.2,7.7 198.7,14.1 200.2,54.7 201.7,22.9 203.2,21.2 204.8,15.8 206.3,6.6 207.8,7 209.3,20.5 210.8,19.4 212.3,17.7 213.9,11.6 215.4,10.9 216.9,21.3 218.4,21.6 219.9,29.1 221.4,32.9 223,16.7 224.5,22.6 226,18.3 L226,101Z" fill="#CCA300"/><path d="M0,101 L0,31.2 1.5,30 3,23.2 4.6,15.9 6.1,21.1 7.6,38.4 9.1,35.7 10.6,26.1 12.1,27.8 13.7,33.5 15.2,43.1 16.7,32.4 18.2,34.6 19.7,38 21.2,33.9 22.8,26.1 24.3,23.5 25.8,29.6 27.3,28.5 28.8,26.4 30.3,29.4 31.9,37.4 33.4,34.9 34.9,41.3 36.4,37.9 37.9,28.9 39.4,27.2 41,29.3 42.5,31.3 44,36.9 45.5,36.4 47,42.5 48.5,37.4 50.1,23.5 51.6,28.1 53.1,30.1 54.6,30.5 56.1,42.7 57.6,67.6 59.2,33.6 60.7,35.3 62.2,35.9 63.7,37.5 65.2,23.7 66.7,26.7 68.3,21.2 69.8,30.8 71.3,30.6 72.8,35.7 74.3,23.1 75.8,23.4 77.4,30.1 78.9,7.8 80.4,5.6 81.9,17.7 83.4,23.9 84.9,26.2 86.5,27.2 88,24.3 89.5,20.4 91,27.6 92.5,26.8 94,25.7 95.6,23 97.1,23.6 98.6,22.5 100.1,43.9 101.6,30.8 103.1,62.1 104.7,33.4 106.2,44.9 107.7,59.1 109.2,35.4 110.7,34.1 112.2,58.3 113.8,38.9 115.3,34.6 116.8,35.9 118.3,31 119.8,35.9 121.3,60.1 122.9,36 124.4,47.6 125.9,30.6 127.4,22.7 128.9,28.2 130.4,45 132,43.7 133.5,44.8 135,65.8 136.5,59 138,28.4 139.5,29.8 141.1,35 142.6,35.1 144.1,37.2 145.6,67.6 147.1,32.2 148.6,26.6 150.2,21 151.7,25 153.2,52.4 154.7,29.6 156.2,25 157.7,19.5 159.3,28.6 160.8,25.7 162.3,33.3 163.8,38.7 165.3,36.9 166.8,25.5 168.4,22.4 169.9,23.3 171.4,15.2 172.9,17.8 174.4,23.7 175.9,39.3 177.5,61 179,45.5 180.5,73.3 182,35.1 183.5,32 185,26.1 186.6,29.6 188.1,25.5 189.6,15 191.1,16.7 192.6,17.6 194.1,14.7 195.7,12.1 197.2,14.4 198.7,20.5 200.2,57.4 201.7,28.6 203.2,28.6 204.8,23.6 206.3,15 207.8,15.2 209.3,27 210.8,25.7 212.3,23.6 213.9,18 215.4,16.9 216.9,26.7 218.4,26.4 219.9,32.8 221.4,37 223,24.2 224.5,30.9 226,25.9 L226,101Z" fill="#508642"/><path d="M0,101 L0,36 1.5,33.7 3,27.5 4.6,22.4 6.1,27.3 7.6,43 9.1,40 10.6,31.4 12.1,32.5 13.7,36.2 15.2,45.1 16.7,36.5 18.2,39 19.7,41.8 21.2,37.2 22.8,30.2 24.3,29.5 25.8,33.7 27.3,31.7 28.8,31.3 30.3,34.3 31.9,41.5 33.4,40.1 34.9,43 36.4,41.2 37.9,34.3 39.4,32.9 41,33.7 42.5,34.8 44,41 45.5,40 47,44.4 48.5,40.4 50.1,28.8 51.6,34.1 53.1,35.6 54.6,34.4 56.1,45.5 57.6,67.7 59.2,37.1 60.7,39.6 62.2,39.2 63.7,42 65.2,30 66.7,32.2 68.3,27.4 69.8,35.7 71.3,36 72.8,40.4 74.3,28.9 75.8,29.2 77.4,35.8 78.9,15.1 80.4,12.2 81.9,22.6 83.4,29.9 84.9,31.8 86.5,32.9 88,30.7 89.5,28.4 91,33.5 92.5,30.6 94,28.9 95.6,26.8 97.1,27.8 98.6,27.4 100.1,48 101.6,36.1 103.1,63.9 104.7,37.4 106.2,47.1 107.7,60.7 109.2,41.6 110.7,40.7 112.2,59.6 113.8,40.7 115.3,37.8 116.8,40.4 118.3,34.4 119.8,41 121.3,64.9 122.9,39.8 124.4,49.5 125.9,35.7 127.4,29.4 128.9,33.4 130.4,48.9 132,49 133.5,48.3 135,65.8 136.5,59.8 138,32.6 139.5,35.6 141.1,39.9 142.6,38.9 144.1,41 145.6,69.4 147.1,36.5 148.6,30.6 150.2,26.2 151.7,31.1 153.2,56.4 154.7,35 156.2,30.3 157.7,24.9 159.3,33.1 160.8,29.7 162.3,37.2 163.8,42 165.3,40.3 166.8,30.5 168.4,28.3 169.9,28.5 171.4,21.3 172.9,23.7 174.4,28.9 175.9,42.8 177.5,63.7 179,48.8 180.5,73.7 182,39.3 183.5,37 185,31.2 186.6,36 188.1,31.4 189.6,20.2 191.1,23 192.6,24.3 194.1,20.9 195.7,18.5 197.2,20.7 198.7,25.7 200.2,60.7 201.7,33.5 203.2,32.9 204.8,28.1 206.3,21.2 207.8,21 209.3,30.3 210.8,28.4 212.3,28.8 213.9,25.2 215.4,23.6 216.9,32.3 218.4,31.4 219.9,37.1 221.4,41 223,29.2 224.5,35 226,29.9 L226,101Z" fill="#705DA0"/><path d="M0,101 L0,39.2 1.5,38.3 3,35.1 4.6,31.4 6.1,33.1 7.6,45.5 9.1,44.6 10.6,37.3 12.1,38.1 13.7,41.3 15.2,50.2 16.7,42.2 18.2,43.4 19.7,46.6 21.2,43.3 22.8,35.9 24.3,34.7 25.8,39.1 27.3,36.5 28.8,36.6 30.3,40.5 31.9,46.6 33.4,46.1 34.9,47.8 36.4,46.5 37.9,39.7 39.4,38.5 41,39.4 42.5,40 44,45.7 45.5,44.9 47,49.2 48.5,45.5 50.1,35.2 51.6,41.6 53.1,42.4 54.6,39 56.1,48.9 57.6,70.5 59.2,40.9 60.7,43.2 62.2,45 63.7,45.8 65.2,34.9 66.7,38.1 68.3,33.3 69.8,39.5 71.3,40.8 72.8,44.9 74.3,36 75.8,36.3 77.4,42.6 78.9,23.8 80.4,21.5 81.9,30.2 83.4,37.2 84.9,37.7 86.5,38.3 88,36.9 89.5,34.3 91,38.9 92.5,37.1 94,36.5 95.6,34.7 97.1,34.1 98.6,34.6 100.1,53.6 101.6,41.2 103.1,65.3 104.7,42.6 106.2,50.5 107.7,63.3 109.2,46.7 110.7,46.1 112.2,61.2 113.8,43 115.3,40.8 116.8,44.7 118.3,40.1 119.8,46.1 121.3,66.8 122.9,44.5 124.4,53.9 125.9,42.3 127.4,36.9 128.9,38.3 130.4,51 132,51.3 133.5,50.3 135,66.4 136.5,62.3 138,37.2 139.5,40.4 141.1,44.6 142.6,44.1 144.1,46.3 145.6,71.5 147.1,40.9 148.6,35.1 150.2,31.9 151.7,36.8 153.2,59.2 154.7,39.7 156.2,36.7 157.7,32.3 159.3,40.3 160.8,35.5 162.3,42.6 163.8,47.2 165.3,45 166.8,36.8 168.4,34.7 169.9,34.5 171.4,28.4 172.9,30.8 174.4,35 175.9,46 177.5,65.5 179,52.2 180.5,74.9 182,44.2 183.5,42.7 185,37.6 186.6,42.5 188.1,37.3 189.6,27.2 191.1,29.5 192.6,30 194.1,28.8 195.7,26.3 197.2,28.5 198.7,34.4 200.2,66 201.7,40 203.2,39.2 204.8,34.8 206.3,28.8 207.8,28.7 209.3,36.4 210.8,34.6 212.3,35.5 213.9,30.7 215.4,29.1 216.9,38.7 218.4,38.5 219.9,43.3 221.4,45.5 223,36 224.5,41.9 226,36.4 L226,101Z" fill="#BA43A9"/><path d="M0,101 L0,45.1 1.5,45.4 3,43.3 4.6,40.8 6.1,41.1 7.6,50.9 9.1,50.3 10.6,43.1 12.1,43.7 13.7,46.3 15.2,54.1 16.7,48.5 18.2,49.9 19.7,52.2 21.2,48.4 22.8,41.7 24.3,42.5 25.8,45.8 27.3,43.1 28.8,42.7 30.3,45.7 31.9,50.7 33.4,50.2 34.9,51.1 36.4,50.5 37.9,45 39.4,46.3 41,45.6 42.5,45.4 44,50.6 45.5,49.5 47,54.3 48.5,50.3 50.1,41.5 51.6,47.6 53.1,47.1 54.6,43.7 56.1,52.8 57.6,72.8 59.2,47.4 60.7,49.4 62.2,49.5 63.7,50.5 65.2,42.6 66.7,46.1 68.3,41.9 69.8,45 71.3,46.2 72.8,50.3 74.3,43.4 75.8,44.2 77.4,50.5 78.9,33.7 80.4,32.7 81.9,40 83.4,45.2 84.9,43.2 86.5,43.2 88,43.3 89.5,42.2 91,43.7 92.5,41.8 94,43.5 95.6,42.6 97.1,40.6 98.6,41.1 100.1,58.4 101.6,47.4 103.1,68.6 104.7,49.3 106.2,54.5 107.7,65.5 109.2,51 110.7,50.3 112.2,63.7 113.8,50.2 115.3,47.4 116.8,50.6 118.3,45.6 119.8,50.6 121.3,70.3 122.9,50.4 124.4,58.4 125.9,47.1 127.4,41.9 128.9,43.9 130.4,54.7 132,54.6 133.5,53.8 135,68.2 136.5,66.1 138,43.5 139.5,46.7 141.1,49.5 142.6,48.8 144.1,52.1 145.6,74 147.1,46.2 148.6,41.4 150.2,39.6 151.7,44.2 153.2,64.3 154.7,46.9 156.2,44.6 157.7,39.6 159.3,46.3 160.8,41.6 162.3,48.1 163.8,53 165.3,51 166.8,43 168.4,40.3 169.9,40.9 171.4,36.1 172.9,37.6 174.4,41.6 175.9,50.4 177.5,68 179,56.7 180.5,77.3 182,50.6 183.5,49.2 185,44.1 186.6,48.9 188.1,43.5 189.6,34.7 191.1,38 192.6,39.1 194.1,37.8 195.7,34.5 197.2,36.3 198.7,41.2 200.2,69.3 201.7,46.3 203.2,45.7 204.8,42.4 206.3,37.4 207.8,36.7 209.3,43.1 210.8,40.9 212.3,42.8 213.9,38.9 215.4,35.9 216.9,43.5 218.4,43.7 219.9,48.2 221.4,48.6 223,40.5 224.5,46.9 226,42.9 L226,101Z" fill="#1F78C1"/><path d="M0,101 L0,48.4 1.5,51.1 3,49.7 4.6,47.1 6.1,45.9 7.6,55 9.1,55.4 10.6,49.5 12.1,49.7 13.7,50.1 15.2,57.4 16.7,52.6 18.2,53.5 19.7,55.2 21.2,51.7 22.8,46.8 24.3,47.5 25.8,50.3 27.3,48.9 28.8,48 30.3,51.4 31.9,55.2 33.4,54.2 34.9,54.5 36.4,53.4 37.9,47 39.4,50.6 41,50 42.5,50.2 44,55.1 45.5,52.8 47,58.7 48.5,55 50.1,48.1 51.6,53.5 53.1,51.8 54.6,48.9 56.1,57 57.6,75.9 59.2,53.2 60.7,54.1 62.2,53 63.7,54.5 65.2,48.6 66.7,51.6 68.3,48.9 69.8,50.3 71.3,50.5 72.8,53.4 74.3,49.1 75.8,50.3 77.4,57.2 78.9,41.6 80.4,40.2 81.9,46.1 83.4,50.5 84.9,49.2 86.5,49.3 88,48.5 89.5,47.3 91,48.7 92.5,46.9 94,47.3 95.6,48 97.1,47.2 98.6,47.1 100.1,62.4 101.6,51.7 103.1,70 104.7,54.1 106.2,56.8 107.7,65.9 109.2,54.2 110.7,55 112.2,66.3 113.8,54.6 115.3,52.1 116.8,55.7 118.3,49.3 119.8,53.3 121.3,72 122.9,54.8 124.4,62.1 125.9,52.2 127.4,48.2 128.9,51 130.4,59.7 132,57.6 133.5,56.9 135,70 136.5,70.9 138,49.5 139.5,50.6 141.1,53 142.6,53.2 144.1,56.3 145.6,75.5 147.1,52.2 148.6,47.8 150.2,45.8 151.7,48.9 153.2,66.8 154.7,51.5 156.2,50.7 157.7,46.9 159.3,52.3 160.8,46.7 162.3,51.2 163.8,55.3 165.3,55.1 166.8,48.6 168.4,46.1 169.9,47.3 171.4,43 172.9,43.1 174.4,48 175.9,54.4 177.5,68.5 179,58.9 180.5,77.6 182,54.2 183.5,53.6 185,48.5 186.6,53.6 188.1,49.5 189.6,41.2 191.1,44.1 192.6,44.6 194.1,43 195.7,40.2 197.2,43.2 198.7,47.8 200.2,72.9 201.7,52.3 203.2,51.9 204.8,48.2 206.3,44.4 207.8,44.4 209.3,50.1 210.8,48 212.3,49.4 213.9,45.2 215.4,41.7 216.9,47.7 218.4,47.3 219.9,51.9 221.4,52.8 223,46.1 224.5,51.8 226,49.6 L226,101Z" fill="#E24D42"/><path d="M0,101 L0,48.6 1.5,51.5 3,50.1 4.6,47.4 6.1,46.1 7.6,55.2 9.1,55.6 10.6,49.8 12.1,50 13.7,50.3 15.2,57.6 16.7,52.6 18.2,53.6 19.7,55.3 21.2,51.8 22.8,47.1 24.3,47.7 25.8,50.5 27.3,49.2 28.8,48.3 30.3,51.8 31.9,55.3 33.4,54.3 34.9,54.8 36.4,53.6 37.9,47.2 39.4,50.8 41,50.3 42.5,50.5 44,55.3 45.5,52.9 47,58.9 48.5,55 50.1,48.2 51.6,53.7 53.1,51.9 54.6,49.3 56.1,57.3 57.6,75.9 59.2,53.3 60.7,54.2 62.2,53.1 63.7,54.5 65.2,48.8 66.7,51.9 68.3,49.2 69.8,50.7 71.3,50.9 72.8,53.6 74.3,49.4 75.8,50.5 77.4,57.4 78.9,41.9 80.4,40.6 81.9,46.5 83.4,50.7 84.9,49.3 86.5,49.4 88,48.7 89.5,47.6 91,49 92.5,47.3 94,47.6 95.6,48.3 97.1,47.5 98.6,47.4 100.1,62.5 101.6,51.9 103.1,70.1 104.7,54.2 106.2,56.9 107.7,66.1 109.2,54.5 110.7,55.3 112.2,66.4 113.8,54.8 115.3,52.3 116.8,55.9 118.3,49.7 119.8,53.7 121.3,72.1 122.9,55 124.4,62.3 125.9,52.5 127.4,48.4 128.9,51.3 130.4,60 132,57.8 133.5,57.1 135,70 136.5,71 138,49.8 139.5,50.7 141.1,53.1 142.6,53.4 144.1,56.5 145.6,75.7 147.1,52.4 148.6,48.1 150.2,46.3 151.7,49.2 153.2,66.8 154.7,51.7 156.2,51 157.7,47.1 159.3,52.6 160.8,47 162.3,51.6 163.8,55.6 165.3,55.3 166.8,48.9 168.4,46.5 169.9,47.5 171.4,43.3 172.9,43.5 174.4,48.3 175.9,54.7 177.5,68.7 179,59.2 180.5,77.8 182,54.5 183.5,53.8 185,48.7 186.6,53.9 188.1,49.8 189.6,41.6 191.1,44.4 192.6,45 194.1,43.4 195.7,40.6 197.2,43.6 198.7,48.3 200.2,73 201.7,52.4 203.2,52.2 204.8,48.5 206.3,44.7 207.8,44.7 209.3,50.4 210.8,48.4 212.3,49.8 213.9,45.6 215.4,42.1 216.9,48 218.4,47.6 219.9,52.1 221.4,52.9 223,46.4 224.5,52.2 226,50 L226,101Z" fill="#EF843C"/><path d="M0,101 L0,48.9 1.5,51.8 3,50.4 4.6,47.7 6.1,46.4 7.6,55.4 9.1,55.9 10.6,50.1 12.1,50.3 13.7,50.7 15.2,57.8 16.7,52.8 18.2,53.8 19.7,55.5 21.2,52 22.8,47.3 24.3,48 25.8,50.7 27.3,49.4 28.8,48.6 30.3,52 31.9,55.3 33.4,54.3 34.9,54.9 36.4,53.8 37.9,47.4 39.4,51.1 41,50.6 42.5,50.8 44,55.4 45.5,53.1 47,59 48.5,55.1 50.1,48.5 51.6,54 53.1,52.3 54.6,49.6 56.1,57.5 57.6,76 59.2,53.6 60.7,54.4 62.2,53.2 63.7,54.6 65.2,49.1 66.7,52.1 68.3,49.5 69.8,50.9 71.3,51.1 72.8,53.8 74.3,49.8 75.8,50.9 77.4,57.7 78.9,42.3 80.4,41 81.9,46.9 83.4,51.1 84.9,49.7 86.5,49.7 88,48.9 89.5,47.9 91,49.4 92.5,47.6 94,48 95.6,48.5 97.1,47.7 98.6,47.8 100.1,62.8 101.6,52.1 103.1,70.1 104.7,54.3 106.2,57.1 107.7,66.3 109.2,54.9 110.7,55.7 112.2,66.5 113.8,55 115.3,52.6 116.8,56.2 118.3,49.9 119.8,53.9 121.3,72.2 122.9,55.2 124.4,62.5 125.9,52.7 127.4,48.7 128.9,51.6 130.4,60.2 132,58.1 133.5,57.3 135,70.1 136.5,71.1 138,50.1 139.5,51 141.1,53.3 142.6,53.5 144.1,56.7 145.6,75.8 147.1,52.7 148.6,48.5 150.2,46.7 151.7,49.5 153.2,66.9 154.7,51.9 156.2,51.4 157.7,47.5 159.3,52.9 160.8,47.3 162.3,51.8 163.8,55.7 165.3,55.4 166.8,49 168.4,46.6 169.9,47.7 171.4,43.5 172.9,43.7 174.4,48.6 175.9,54.9 177.5,68.9 179,59.4 180.5,77.9 182,54.8 183.5,54.1 185,49 186.6,54 188.1,50.1 189.6,42 191.1,44.8 192.6,45.4 194.1,43.9 195.7,41 197.2,44 198.7,48.5 200.2,73.1 201.7,52.7 203.2,52.4 204.8,48.9 206.3,45.3 207.8,45.1 209.3,50.7 210.8,48.7 212.3,50.2 213.9,46 215.4,42.4 216.9,48.3 218.4,47.9 219.9,52.3 221.4,53.1 223,46.8 224.5,52.6 226,50.4 L226,101Z" fill="#6ED0E0"/><path d="M0,101 L0,49.1 1.5,52 3,50.7 4.6,48 6.1,46.6 7.6,55.7 9.1,56.1 10.6,50.2 12.1,50.4 13.7,50.9 15.2,58.1 16.7,53 18.2,54 19.7,55.6 21.2,52.1 22.8,47.5 24.3,48.3 25.8,50.9 27.3,49.5 28.8,48.7 30.3,52.2 31.9,55.5 33.4,54.6 34.9,55.2 36.4,54.1 37.9,47.7 39.4,51.4 41,50.7 42.5,51 44,55.7 45.5,53.3 47,59.1 48.5,55.1 50.1,48.7 51.6,54.3 53.1,52.5 54.6,49.8 56.1,57.6 57.6,76.1 59.2,53.9 60.7,54.7 62.2,53.4 63.7,54.8 65.2,49.3 66.7,52.4 68.3,49.9 69.8,51.2 71.3,51.3 72.8,54 74.3,50 75.8,51.1 77.4,57.8 78.9,42.7 80.4,41.4 81.9,47.1 83.4,51.2 84.9,49.9 86.5,50.1 88,49.2 89.5,48.2 91,49.6 92.5,47.9 94,48.2 95.6,48.7 97.1,48 98.6,48.1 100.1,63.1 101.6,52.4 103.1,70.2 104.7,54.5 106.2,57.1 107.7,66.3 109.2,55 110.7,55.9 112.2,66.5 113.8,55.2 115.3,52.8 116.8,56.3 118.3,50.1 119.8,54.1 121.3,72.4 122.9,55.4 124.4,62.7 125.9,53 127.4,49 128.9,51.9 130.4,60.4 132,58.2 133.5,57.4 135,70.3 136.5,71.3 138,50.4 139.5,51.3 141.1,53.5 142.6,53.7 144.1,56.9 145.6,75.8 147.1,52.9 148.6,48.8 150.2,47 151.7,49.8 153.2,67.2 154.7,52.2 156.2,51.6 157.7,47.8 159.3,53.2 160.8,47.7 162.3,52.3 163.8,56 165.3,55.6 166.8,49.1 168.4,46.9 169.9,48 171.4,43.8 172.9,44 174.4,48.9 175.9,55.3 177.5,69.2 179,59.7 180.5,78 182,55 183.5,54.4 185,49.3 186.6,54.3 188.1,50.5 189.6,42.2 191.1,45.1 192.6,45.9 194.1,44.3 195.7,41.3 197.2,44.4 198.7,49 200.2,73.2 201.7,52.8 203.2,52.8 204.8,49.3 206.3,45.7 207.8,45.5 209.3,51 210.8,49.1 212.3,50.5 213.9,46.3 215.4,42.7 216.9,48.6 218.4,48.2 219.9,52.6 221.4,53.3 223,47.1 224.5,52.9 226,50.8 L226,101Z" fill="#EAB839"/><path d="M0,101 L0,50.6 1.5,53.3 3,52 4.6,49.5 6.1,48 7.6,56.7 9.1,57.5 10.6,51.8 12.1,52.1 13.7,52.7 15.2,59.6 16.7,54.2 18.2,54.7 19.7,56.9 21.2,53.7 22.8,49 24.3,48.9 25.8,50.9 27.3,50.3 28.8,50.6 30.3,54.4 31.9,57.5 33.4,56.5 34.9,56.6 36.4,54.9 37.9,48.9 39.4,53.2 41,52.1 42.5,52.7 44,57.1 45.5,54.9 47,60.6 48.5,56 50.1,49.9 51.6,55.6 53.1,54.7 54.6,51.9 56.1,59 57.6,77.5 59.2,56 60.7,56.7 62.2,54.6 63.7,55.7 65.2,51.9 66.7,54.4 68.3,51.4 69.8,52.3 71.3,52.7 72.8,55 74.3,52 75.8,53.4 77.4,59 78.9,45.1 80.4,44.9 81.9,49.8 83.4,53.5 84.9,51.7 86.5,51.7 88,51.3 89.5,50.8 91,52 92.5,50.2 94,49.8 95.6,50.1 97.1,50 98.6,50.8 100.1,64.7 101.6,53.7 103.1,71.2 104.7,56.7 106.2,58.7 107.7,66.8 109.2,55.8 110.7,57.2 112.2,67.1 113.8,55.9 115.3,53.9 116.8,58.3 118.3,51.8 119.8,55.1 121.3,72.6 122.9,57.3 124.4,63.7 125.9,54 127.4,51.2 128.9,53.7 130.4,61.6 132,59.4 133.5,58.8 135,71.6 136.5,72.6 138,52.9 139.5,54.1 141.1,55.8 142.6,55.1 144.1,57.5 145.6,76.4 147.1,55.2 148.6,51.1 150.2,49.5 151.7,51.5 153.2,67.9 154.7,53.5 156.2,53.2 157.7,49.5 159.3,54.4 160.8,49.2 162.3,54.5 163.8,57.6 165.3,56.3 166.8,51 168.4,49 169.9,50.5 171.4,46.7 172.9,46 174.4,51 175.9,57.6 177.5,71 179,61.4 180.5,78.8 182,56 183.5,55.1 185,51.2 186.6,57 188.1,52.9 189.6,44.7 191.1,47.2 192.6,47.9 194.1,46.3 195.7,43.3 197.2,46.5 198.7,50.5 200.2,74.2 201.7,54.4 203.2,54.5 204.8,51.7 206.3,48.3 207.8,48.3 209.3,52.7 210.8,49.5 212.3,52 213.9,49 215.4,45.9 216.9,51.5 218.4,50.5 219.9,53.8 221.4,54.4 223,49.5 224.5,54.5 226,51.7 L226,101Z" fill="#7EB26D"/>
</svg>
<div class="yl" style="right:1264px;top:587px">0 B/s</div>
<div class="yl" style="right:1264px;top:553.3px">100 MB/s</div>
<div class="yl" style="right:1264px;top:519.7px">200 MB/s</div>
<div class="yl" style="right:1264px;top:486px">300 MB/s</div>
<div class="xl" style="left:132.4px;top:602px">20:30</div>
<div class="xl" style="left:170.6px;top:602px">20:40</div>
<div class="xl" style="left:208.7px;top:602px">20:50</div>
<div class="xl" style="left:246.9px;top:602px">21:00</div>
<div class="xl" style="left:285px;top:602px">21:10</div>
<div class="xl" style="left:323.1px;top:602px">21:20</div>
<div class="panel" style="left:403px;top:442px;width:322px;height:258px"></div><div class="ptitle" style="left:403px;top:448.5px;width:322px">Transmit bandwidth</div>
<svg style="position:absolute;left:465px;top:492px" width="233" height="103" viewBox="0 -1 233 103">
<line x1="0" x2="233" y1="101.5" y2="101.5" stroke="rgba(36,41,46,0.12)" stroke-width="1"/>
<line x1="0" x2="233" y1="67.5" y2="67.5" stroke="rgba(36,41,46,0.12)" stroke-width="1"/>
<line x1="0" x2="233" y1="33.5" y2="33.5" stroke="rgba(36,41,46,0.12)" stroke-width="1"/>
<line x1="0" x2="233" y1="0.5" y2="0.5" stroke="rgba(36,41,46,0.12)" stroke-width="1"/>
<line x1="6.5" x2="6.5" y1="0" y2="101" stroke="rgba(36,41,46,0.12)" stroke-width="1"/>
<line x1="45.5" x2="45.5" y1="0" y2="101" stroke="rgba(36,41,46,0.12)" stroke-width="1"/>
<line x1="84.5" x2="84.5" y1="0" y2="101" stroke="rgba(36,41,46,0.12)" stroke-width="1"/>
<line x1="123.5" x2="123.5" y1="0" y2="101" stroke="rgba(36,41,46,0.12)" stroke-width="1"/>
<line x1="162.5" x2="162.5" y1="0" y2="101" stroke="rgba(36,41,46,0.12)" stroke-width="1"/>
<line x1="201.5" x2="201.5" y1="0" y2="101" stroke="rgba(36,41,46,0.12)" stroke-width="1"/>
<path d="M0,101 L0,46.3 1.4,46.1 2.8,48.7 4.1,41.8 5.5,29.5 6.9,40.8 8.3,44.8 9.7,36.3 11,39.2 12.4,42.9 13.8,45.2 15.2,49.8 16.5,49.9 17.9,47.3 19.3,42.6 20.7,41.6 22.1,39 23.4,24.7 24.8,35 26.2,40 27.6,43.7 29,43.1 30.3,44 31.7,38.6 33.1,38.1 34.5,39.2 35.8,42.9 37.2,42.7 38.6,42.7 40,39.5 41.4,28.1 42.7,33.9 44.1,44.2 45.5,40.2 46.9,45.5 48.3,43.3 49.6,43.1 51,45.1 52.4,45.5 53.8,42.3 55.1,44.4 56.5,47.4 57.9,49.1 59.3,31.2 60.7,34.4 62,36.9 63.4,45.4 64.8,44.7 66.2,41.9 67.6,40.7 68.9,43.6 70.3,45.9 71.7,44.1 73.1,42.5 74.4,38.6 75.8,41.1 77.2,36.5 78.6,30.4 80,47.3 81.3,37.2 82.7,44.6 84.1,44.3 85.5,47.8 86.9,38 88.2,45.2 89.6,46 91,46.1 92.4,41.4 93.8,39.2 95.1,38.1 96.5,26.5 97.9,40.9 99.3,52.3 100.6,46.1 102,42.1 103.4,40 104.8,47.6 106.2,37.8 107.5,46.3 108.9,42.4 110.3,43.3 111.7,38.1 113.1,43.3 114.4,28.4 115.8,32.6 117.2,39.3 118.6,39.6 119.9,41.4 121.3,39.3 122.7,38.5 124.1,37.4 125.5,38.4 126.8,40.3 128.2,40.3 129.6,44.5 131,37 132.4,29.8 133.7,34.4 135.1,46.8 136.5,43.1 137.9,49.4 139.2,46.2 140.6,44.1 142,40.7 143.4,43.5 144.8,39.8 146.1,43.1 147.5,40.1 148.9,41.7 150.3,29.4 151.7,26.6 153,43.7 154.4,42.5 155.8,40.3 157.2,43.5 158.6,46.5 159.9,42.7 161.3,46.4 162.7,46.5 164.1,47.8 165.4,48.4 166.8,41.6 168.2,34.7 169.6,24.5 171,42.7 172.3,47 173.7,45.9 175.1,43.3 176.5,44.5 177.9,37 179.2,44.7 180.6,45 182,40.7 183.4,44.9 184.7,48.2 186.1,34.3 187.5,24.7 188.9,41.9 190.3,46.6 191.6,47.5 193,42.5 194.4,43.3 195.8,42.4 197.2,43.6 198.5,43.6 199.9,41.2 201.3,42.8 202.7,47.4 204,36.8 205.4,25.2 206.8,38.4 208.2,41.9 209.6,43.5 210.9,37 212.3,39 213.7,44.6 215.1,41.2 216.5,44.2 217.8,39 219.2,41 220.6,46.3 222,40.2 223.3,30.6 224.7,32.9 226.1,44.1 227.5,43.4 228.9,38.1 230.2,48.6 231.6,40.3 233,44.5 L233,101Z" fill="#C15C17"/><path d="M0,101 L0,51.9 1.4,49.8 2.8,51.8 4.1,47.4 5.5,33.2 6.9,48.8 8.3,53.2 9.7,48.1 11,47 12.4,47.8 13.8,49.5 15.2,49.8 16.5,54.8 17.9,53 19.3,50.6 20.7,48.9 22.1,46.3 23.4,31.8 24.8,42.6 26.2,49 27.6,47.6 29,48.2 30.3,47.3 31.7,47.9 33.1,46.8 34.5,46.8 35.8,46.6 37.2,49.2 38.6,48.3 40,45.7 41.4,34.2 42.7,41.4 44.1,49.5 45.5,48 46.9,52 48.3,48.8 49.6,49 51,50.3 52.4,53.2 53.8,47.8 55.1,51 56.5,52.7 57.9,52.2 59.3,39.5 60.7,38.8 62,44.3 63.4,52.3 64.8,47.4 66.2,46.1 67.6,45.7 68.9,48 70.3,49.5 71.7,51.7 73.1,48 74.4,45.5 75.8,46.3 77.2,43.4 78.6,35.5 80,53.4 81.3,44.4 82.7,50.7 84.1,49.4 85.5,51.7 86.9,44.4 88.2,51.9 89.6,51.6 91,50.6 92.4,48.6 93.8,50.3 95.1,43.7 96.5,33.8 97.9,47.9 99.3,53.2 100.6,52.4 102,46.7 103.4,48.8 104.8,53.1 106.2,42.3 107.5,51.9 108.9,48.8 110.3,48.2 111.7,44 113.1,46.7 114.4,34.5 115.8,40.5 117.2,49.4 118.6,47.1 119.9,48.1 121.3,47.7 122.7,46.7 124.1,46.9 125.5,46.7 126.8,46.1 128.2,46.9 129.6,50.9 131,43.7 132.4,36.7 133.7,39.2 135.1,48.6 136.5,47.8 137.9,51.4 139.2,52.4 140.6,50.1 142,43.4 143.4,50.9 144.8,47.6 146.1,49.4 147.5,49.6 148.9,51.6 150.3,33.4 151.7,35.2 153,50.6 154.4,49.4 155.8,48.3 157.2,48.1 158.6,51.4 159.9,47.1 161.3,51 162.7,52.4 164.1,51 165.4,52.4 166.8,48.8 168.2,40.8 169.6,31.9 171,45 172.3,51.5 173.7,50.8 175.1,49.4 176.5,49.3 177.9,44.9 179.2,50.7 180.6,51.1 182,46.8 183.4,52.4 184.7,53.3 186.1,42.8 187.5,32.3 188.9,48.4 190.3,52.8 191.6,54.6 193,50.6 194.4,51.3 195.8,49.2 197.2,51.4 198.5,49.9 199.9,49.7 201.3,48.8 202.7,49.3 204,45.6 205.4,32 206.8,42.4 208.2,47.6 209.6,47.7 210.9,47.3 212.3,46.1 213.7,47.5 215.1,48.4 216.5,49.5 217.8,48.9 219.2,45 220.6,47.9 222,46.4 223.3,36.4 224.7,38.4 226.1,45.8 227.5,50.3 228.9,47.5 230.2,50.8 231.6,48.7 233,49.5 L233,101Z" fill="#447EBC"/><path d="M0,101 L0,55.5 1.4,53.9 2.8,55.7 4.1,50.4 5.5,37.5 6.9,52.3 8.3,57.4 9.7,53.6 11,51.6 12.4,51.5 13.8,52.3 15.2,52.7 16.5,57.4 17.9,57.6 19.3,54 20.7,53 22.1,49.9 23.4,36.3 24.8,47.9 26.2,52.5 27.6,51.4 29,51.6 30.3,52 31.7,51.1 33.1,49.9 34.5,49.7 35.8,49.5 37.2,53.6 38.6,54.4 40,49 41.4,39.4 42.7,45.9 44.1,52.6 45.5,51.8 46.9,55.9 48.3,52.3 49.6,54.6 51,52.8 52.4,57.6 53.8,52.1 55.1,54.6 56.5,56.8 57.9,57 59.3,43.9 60.7,43.5 62,49 63.4,54.7 64.8,52.6 66.2,51.9 67.6,50.5 68.9,52.8 70.3,52.4 71.7,55.6 73.1,51.4 74.4,49.1 75.8,51.1 77.2,47 78.6,39.8 80,55.9 81.3,48.3 82.7,54.8 84.1,52.9 85.5,55.1 86.9,50 88.2,55 89.6,54.8 91,54 92.4,53.6 93.8,56 95.1,48.1 96.5,37.7 97.9,51.7 99.3,58.1 100.6,55.7 102,52 103.4,54 104.8,57.2 106.2,46.8 107.5,56.6 108.9,54.1 110.3,51.4 111.7,49 113.1,50.4 114.4,38.3 115.8,44.8 117.2,53.2 118.6,50.3 119.9,50.8 121.3,51 122.7,51.9 124.1,52.5 125.5,51.3 126.8,51.1 128.2,50.5 129.6,54.9 131,48 132.4,40.2 133.7,42.7 135.1,52.8 136.5,51.6 137.9,54.5 139.2,56.7 140.6,54 142,48.3 143.4,55 144.8,51.4 146.1,53.5 147.5,53.5 148.9,55.1 150.3,37.4 151.7,40.2 153,55.2 154.4,54.5 155.8,50.9 157.2,51.9 158.6,55.1 159.9,51.2 161.3,54.6 162.7,56 164.1,55.6 165.4,56.6 166.8,51.9 168.2,46.1 169.6,37.1 171,48.6 172.3,56.2 173.7,54.2 175.1,54.4 176.5,53.2 177.9,48.3 179.2,54.4 180.6,54.6 182,51 183.4,56.5 184.7,57.3 186.1,46.5 187.5,33.8 188.9,52.6 190.3,55.3 191.6,58.8 193,55.6 194.4,55.6 195.8,52.9 197.2,55.3 198.5,53.8 199.9,53.3 201.3,52.4 202.7,52.6 204,50.6 205.4,36.4 206.8,47.3 208.2,51.4 209.6,51.8 210.9,51.2 212.3,50.5 213.7,52.2 215.1,52.6 216.5,53 217.8,52.3 219.2,50.4 220.6,51.7 222,50.3 223.3,42 224.7,43.6 226.1,50.3 227.5,54 228.9,53.5 230.2,55.2 231.6,53.2 233,53.4 L233,101Z" fill="#CCA300"/><path d="M0,101 L0,63.9 1.4,61.8 2.8,62.9 4.1,59.4 5.5,45.8 6.9,60 8.3,64 9.7,60.9 11,60.3 12.4,58 13.8,60.3 15.2,61.5 16.5,65.1 17.9,65.9 19.3,61 20.7,62.4 22.1,59.2 23.4,45.3 24.8,54.6 26.2,59.5 27.6,60.5 29,61.4 30.3,60.4 31.7,60.5 33.1,57.4 34.5,57.6 35.8,57.6 37.2,62.1 38.6,60.9 40,58.1 41.4,49.4 42.7,53.3 44.1,59.4 45.5,60.2 46.9,63.3 48.3,57.9 49.6,63.5 51,61 52.4,65.2 53.8,62.4 55.1,62.8 56.5,64.1 57.9,65.2 59.3,51.4 60.7,51.5 62,57.5 63.4,62.2 64.8,60.2 66.2,61.7 67.6,59.5 68.9,61.7 70.3,61 71.7,64.2 73.1,61 74.4,57.1 75.8,61.1 77.2,54.4 78.6,48.4 80,62.7 81.3,56.1 82.7,63.4 84.1,62.5 85.5,62.5 86.9,58 88.2,62.7 89.6,62.1 91,60.9 92.4,61.8 93.8,62.3 95.1,56.5 96.5,46.6 97.9,59.3 99.3,65.2 100.6,62.4 102,61.9 103.4,60.7 104.8,66.9 106.2,55.5 107.5,64.3 108.9,61 110.3,60.5 111.7,58.8 113.1,57.7 114.4,46.9 115.8,54.2 117.2,61.7 118.6,60.4 119.9,58.3 121.3,59.6 122.7,58.7 124.1,62.7 125.5,58.6 126.8,57 128.2,58.5 129.6,62.8 131,58 132.4,48.6 133.7,51.2 135.1,61.5 136.5,61.3 137.9,62.6 139.2,65.9 140.6,62.6 142,56 143.4,63.1 144.8,59.5 146.1,60.7 147.5,62.8 148.9,61.8 150.3,47.1 151.7,49.9 153,63.3 154.4,61.8 155.8,58.8 157.2,60.4 158.6,63.9 159.9,59.6 161.3,63.7 162.7,63.5 164.1,64 165.4,63.1 166.8,60.8 168.2,54.7 169.6,45.5 171,58 172.3,65 173.7,59.5 175.1,62.5 176.5,59.8 177.9,57.5 179.2,65 180.6,62.1 182,59.1 183.4,64.4 184.7,65.8 186.1,55.4 187.5,44 188.9,59.9 190.3,64.9 191.6,66 193,63.9 194.4,64.8 195.8,61.7 197.2,62.4 198.5,61.2 199.9,61 201.3,60.4 202.7,61.8 204,57.5 205.4,45.7 206.8,56.4 208.2,60.1 209.6,60.4 210.9,60.8 212.3,59.1 213.7,61.1 215.1,61.2 216.5,62.8 217.8,58.5 219.2,59.7 220.6,59.5 222,58.1 223.3,49.7 224.7,50.3 226.1,58 227.5,61.4 228.9,62.1 230.2,61.8 231.6,62.7 233,61.7 L233,101Z" fill="#508642"/><path d="M0,101 L0,72.7 1.4,69.6 2.8,72.3 4.1,66.3 5.5,55 6.9,68.6 8.3,72.5 9.7,70 11,67.8 12.4,67.3 13.8,68.8 15.2,69.6 16.5,72.5 17.9,73.5 19.3,70.1 20.7,70.1 22.1,68.2 23.4,56 24.8,64.7 26.2,69.9 27.6,68.9 29,69.1 30.3,70.2 31.7,69.5 33.1,67.3 34.5,66.3 35.8,67.5 37.2,71.7 38.6,70.4 40,67.4 41.4,59.3 42.7,62.8 44.1,68.4 45.5,70 46.9,71.5 48.3,68.4 49.6,72.1 51,70.8 52.4,73.8 53.8,70.9 55.1,73.6 56.5,72.6 57.9,72.6 59.3,59.9 60.7,60.6 62,68.5 63.4,71.2 64.8,69.9 66.2,69.5 67.6,68.6 68.9,71.2 70.3,71.6 71.7,72.3 73.1,70.3 74.4,66.2 75.8,68.8 77.2,63.5 78.6,57.7 80,69.2 81.3,65.4 82.7,72.7 84.1,70.8 85.5,69.9 86.9,68.3 88.2,71.7 89.6,71.9 91,71.1 92.4,70 93.8,71.9 95.1,65.2 96.5,56.2 97.9,68.2 99.3,73.9 100.6,72.2 102,70.8 103.4,69.3 104.8,75.3 106.2,64.6 107.5,72.2 108.9,69.3 110.3,69.2 111.7,67 113.1,66.4 114.4,55.8 115.8,65.4 117.2,71.8 118.6,69.6 119.9,67 121.3,70.6 122.7,67.8 124.1,71.4 125.5,67.7 126.8,66 128.2,68.7 129.6,71.5 131,69 132.4,57.1 133.7,61.2 135.1,69.2 136.5,71.9 137.9,71 139.2,74.6 140.6,72.3 142,66.1 143.4,70.8 144.8,67.9 146.1,68 147.5,71.7 148.9,70.5 150.3,56 151.7,58.6 153,71.7 154.4,69.8 155.8,68.1 157.2,70.7 158.6,70.7 159.9,68.2 161.3,72 162.7,72.7 164.1,71.8 165.4,71.7 166.8,68.5 168.2,64.5 169.6,55.2 171,66.7 172.3,74.1 173.7,68 175.1,69.7 176.5,69.2 177.9,66.5 179.2,73.6 180.6,71.9 182,69.1 183.4,72 184.7,73.7 186.1,65.9 187.5,55.1 188.9,68.1 190.3,72.5 191.6,74.1 193,72.2 194.4,72 195.8,70.5 197.2,69.9 198.5,68.7 199.9,70.6 201.3,68.5 202.7,70.5 204,67 205.4,56.1 206.8,65.1 208.2,68.9 209.6,68.3 210.9,71.3 212.3,68.5 213.7,68.7 215.1,70 216.5,72.3 217.8,67.7 219.2,70.3 220.6,69.6 222,66.4 223.3,59.1 224.7,58.3 226.1,67.1 227.5,70.3 228.9,73.5 230.2,70.6 231.6,69.3 233,69.8 L233,101Z" fill="#705DA0"/><path d="M0,101 L0,81 1.4,78.3 2.8,78.9 4.1,74.5 5.5,63.8 6.9,76.6 8.3,78.4 9.7,78.9 11,75.5 12.4,75 13.8,76.7 15.2,77.4 16.5,81 17.9,80.3 19.3,77.2 20.7,78.5 22.1,76.5 23.4,64.5 24.8,72.5 26.2,77.1 27.6,76.9 29,78.4 30.3,77.2 31.7,79.2 33.1,76.2 34.5,74 35.8,76.4 37.2,78.3 38.6,76.7 40,74.2 41.4,67.6 42.7,71.1 44.1,75.9 45.5,78.2 46.9,77.5 48.3,77 49.6,78.8 51,78.2 52.4,81.5 53.8,77.8 55.1,80.3 56.5,79.6 57.9,80.7 59.3,69.1 60.7,69.9 62,75.6 63.4,78.4 64.8,77.1 66.2,78 67.6,74.6 68.9,80.5 70.3,79.2 71.7,79.5 73.1,78.8 74.4,75.3 75.8,77.2 77.2,73 78.6,66.7 80,78.7 81.3,74.8 82.7,80.7 84.1,80.3 85.5,78.2 86.9,76.5 88.2,78.9 89.6,79.7 91,79.9 92.4,76.7 93.8,80.7 95.1,73.8 96.5,65.3 97.9,74.2 99.3,81.9 100.6,81 102,78.1 103.4,77.5 104.8,81 106.2,73.4 107.5,79.6 108.9,78.2 110.3,75.5 111.7,75.8 113.1,74.4 114.4,65.5 115.8,72.8 117.2,79.2 118.6,80 119.9,74.3 121.3,78 122.7,75.6 124.1,78.4 125.5,76.9 126.8,75.9 128.2,76 129.6,77.9 131,78.3 132.4,67 133.7,70.6 135.1,78.5 136.5,79.1 137.9,78.9 139.2,81.2 140.6,78.9 142,75.1 143.4,78.2 144.8,78.3 146.1,76.2 147.5,79.1 148.9,79.4 150.3,66.4 151.7,67.9 153,78.6 154.4,78.2 155.8,77.5 157.2,78.3 158.6,78 159.9,77.4 161.3,80.3 162.7,79.7 164.1,79.5 165.4,79 166.8,76.9 168.2,73 169.6,65.2 171,75.6 172.3,80.6 173.7,76.5 175.1,78.6 176.5,77.7 177.9,75.6 179.2,81.1 180.6,79 182,78.1 183.4,79 184.7,79.6 186.1,75.2 187.5,63.2 188.9,76 190.3,79.2 191.6,80.8 193,79.1 194.4,79.7 195.8,79 197.2,75.6 198.5,77.6 199.9,77.5 201.3,75.5 202.7,79.3 204,75.1 205.4,63.4 206.8,75.4 208.2,76.1 209.6,76.6 210.9,79.6 212.3,78 213.7,76.4 215.1,79.1 216.5,79.7 217.8,76.9 219.2,77.6 220.6,77.3 222,76.4 223.3,68.1 224.7,66.9 226.1,77.4 227.5,78.8 228.9,80.8 230.2,79.5 231.6,76.2 233,79 L233,101Z" fill="#BA43A9"/><path d="M0,101 L0,89.9 1.4,87.2 2.8,89.1 4.1,85 5.5,74.5 6.9,85.6 8.3,88.2 9.7,88.3 11,86 12.4,87.1 13.8,86.9 15.2,86.8 16.5,90.3 17.9,88.8 19.3,85.7 20.7,86.9 22.1,85.8 23.4,75.2 24.8,83.5 26.2,86.2 27.6,86.2 29,86.6 30.3,88.3 31.7,89.1 33.1,87.4 34.5,84.2 35.8,87.3 37.2,87.5 38.6,86.9 40,86.5 41.4,77.3 42.7,82.8 44.1,87.1 45.5,88 46.9,87.7 48.3,87.7 49.6,87.5 51,88 52.4,90 53.8,86.5 55.1,89.1 56.5,88.9 57.9,90.4 59.3,80.1 60.7,79.3 62,87.2 63.4,89.1 64.8,87.3 66.2,87 67.6,83.9 68.9,90.5 70.3,89.1 71.7,87.2 73.1,88.9 74.4,87.7 75.8,84.8 77.2,84.2 78.6,78.3 80,88.2 81.3,85.6 82.7,88.9 84.1,89.9 85.5,89.1 86.9,85.7 88.2,87.9 89.6,89.2 91,88.9 92.4,87.8 93.8,89.2 95.1,84.6 96.5,75.4 97.9,84.8 99.3,91.2 100.6,87.7 102,87.5 103.4,85.8 104.8,90 106.2,84.4 107.5,87.8 108.9,86.6 110.3,86.4 111.7,85.3 113.1,85.6 114.4,77 115.8,82.1 117.2,88.6 118.6,90.7 119.9,84.7 121.3,87.4 122.7,85 124.1,87.7 125.5,85.8 126.8,87.3 128.2,85.5 129.6,86.1 131,87.3 132.4,78.7 133.7,81.8 135.1,87.8 136.5,87.8 137.9,88.3 139.2,88.9 140.6,87 142,85.4 143.4,87.1 144.8,88.1 146.1,86.9 147.5,89.2 148.9,88.9 150.3,79.2 151.7,79.5 153,87.8 154.4,88.4 155.8,87.4 157.2,86.8 158.6,87.5 159.9,86.6 161.3,87.6 162.7,89 164.1,88.6 165.4,88 166.8,84.6 168.2,82.8 169.6,76.4 171,85.4 172.3,88.8 173.7,86.6 175.1,86.8 176.5,86.9 177.9,86.4 179.2,89.8 180.6,87.9 182,88.7 183.4,88 184.7,88.8 186.1,85.4 187.5,75.6 188.9,83.6 190.3,87.7 191.6,89.2 193,87.4 194.4,88.2 195.8,87.5 197.2,85.4 198.5,86.1 199.9,87.1 201.3,85.4 202.7,88 204,84.9 205.4,76.3 206.8,85.9 208.2,84.9 209.6,86 210.9,88.1 212.3,87.7 213.7,86.7 215.1,87.7 216.5,88.9 217.8,87.5 219.2,86.6 220.6,87 222,84.9 223.3,78.2 224.7,77 226.1,89.1 227.5,87.8 228.9,89.7 230.2,88.3 231.6,85.5 233,89.1 L233,101Z" fill="#1F78C1"/><path d="M0,101 L0,96.3 1.4,95.5 2.8,96.3 4.1,95 5.5,90.7 6.9,95.3 8.3,97 9.7,94.7 11,95.2 12.4,94.5 13.8,95.6 15.2,95.1 16.5,95.7 17.9,96.1 19.3,94 20.7,96.6 22.1,95.1 23.4,90.4 24.8,93 26.2,95.8 27.6,96.1 29,94.7 30.3,96.1 31.7,95.5 33.1,96.4 34.5,95 35.8,96.1 37.2,96.8 38.6,95.5 40,94 41.4,92.5 42.7,94 44.1,95.2 45.5,96.4 46.9,96.6 48.3,96.2 49.6,96 51,95.3 52.4,96.8 53.8,94.7 55.1,96.5 56.5,95.7 57.9,97.3 59.3,92 60.7,91.3 62,94.4 63.4,95.5 64.8,95.5 66.2,95.5 67.6,94 68.9,97.1 70.3,96.4 71.7,96.2 73.1,96.8 74.4,95.5 75.8,94.7 77.2,94.9 78.6,92.1 80,95.9 81.3,94 82.7,97.3 84.1,96.6 85.5,96.2 86.9,94.3 88.2,96.5 89.6,96.7 91,97.6 92.4,96.4 93.8,95.5 95.1,94.1 96.5,91.1 97.9,94 99.3,97.2 100.6,95.5 102,96.4 103.4,95.5 104.8,95.8 106.2,95.1 107.5,94.8 108.9,95.6 110.3,95.7 111.7,94.4 113.1,94.8 114.4,90.8 115.8,93.7 117.2,96 118.6,96.2 119.9,95.6 121.3,96.2 122.7,95 124.1,94.9 125.5,95.3 126.8,97 128.2,95.1 129.6,94.2 131,94.6 132.4,92.4 133.7,92 135.1,94.4 136.5,96 137.9,95.4 139.2,96.9 140.6,94.9 142,95.4 143.4,96.5 144.8,96.1 146.1,96.2 147.5,96.5 148.9,96.8 150.3,92.5 151.7,92.1 153,96 154.4,95.2 155.8,95.6 157.2,96.6 158.6,94.9 159.9,94.9 161.3,94.8 162.7,95.9 164.1,95.4 165.4,97.5 166.8,95.2 168.2,94.3 169.6,90.6 171,95.1 172.3,96.6 173.7,95.4 175.1,95.2 176.5,95.3 177.9,95.1 179.2,97.3 180.6,95.6 182,95 183.4,95.7 184.7,95.4 186.1,95 187.5,90 188.9,93.6 190.3,96.3 191.6,95.8 193,94.7 194.4,95.3 195.8,96.3 197.2,95.2 198.5,95 199.9,94.8 201.3,94.9 202.7,94.5 204,95.5 205.4,90.6 206.8,94.1 208.2,95.7 209.6,95.7 210.9,95.1 212.3,95.9 213.7,94.5 215.1,95.9 216.5,95.4 217.8,94.9 219.2,95.1 220.6,95.3 222,94.6 223.3,92.1 224.7,91.8 226.1,96.6 227.5,96.1 228.9,95.8 230.2,95.1 231.6,94.9 233,96.2 L233,101Z" fill="#E24D42"/><path d="M0,101 L0,97.2 1.4,96 2.8,96.5 4.1,95.6 5.5,91.2 6.9,96.1 8.3,97.9 9.7,95.5 11,95.6 12.4,95.1 13.8,96.7 15.2,95.8 16.5,96.4 17.9,97 19.3,95.2 20.7,97.5 22.1,95.8 23.4,91.4 24.8,93.9 26.2,96.3 27.6,96.5 29,95.4 30.3,96.6 31.7,96.2 33.1,97.1 34.5,96.1 35.8,96.6 37.2,97.5 38.6,96.2 40,94.8 41.4,93.5 42.7,94.7 44.1,95.7 45.5,96.7 46.9,97.1 48.3,97 49.6,96.7 51,95.8 52.4,97.4 53.8,95.3 55.1,97.2 56.5,96.2 57.9,98 59.3,92.5 60.7,91.9 62,95.4 63.4,95.7 64.8,96.1 66.2,96.3 67.6,94.6 68.9,97.6 70.3,97.1 71.7,96.9 73.1,97.5 74.4,95.8 75.8,95.3 77.2,95.4 78.6,92.8 80,96.6 81.3,94.8 82.7,98.2 84.1,97.2 85.5,97.1 86.9,95.2 88.2,97.4 89.6,97.6 91,98.2 92.4,97.1 93.8,96.3 95.1,94.5 96.5,92 97.9,94.6 99.3,97.8 100.6,95.8 102,96.9 103.4,96.2 104.8,96.7 106.2,96 107.5,95.4 108.9,96.3 110.3,96.2 111.7,95.2 113.1,95.5 114.4,91.8 115.8,94.8 117.2,96.7 118.6,96.6 119.9,96.1 121.3,96.6 122.7,95.4 124.1,95.8 125.5,96 126.8,97.3 128.2,95.9 129.6,95.1 131,95.2 132.4,93.1 133.7,92.8 135.1,95.1 136.5,96.8 137.9,96.3 139.2,97.8 140.6,95.9 142,96.4 143.4,97.3 144.8,96.5 146.1,96.8 147.5,97.2 148.9,97.4 150.3,93.5 151.7,92.8 153,96.5 154.4,96.2 155.8,96.4 157.2,97.3 158.6,95.7 159.9,95.8 161.3,95.6 162.7,96.1 164.1,96 165.4,98.1 166.8,95.7 168.2,95.1 169.6,91.7 171,95.7 172.3,97 173.7,96.5 175.1,95.8 176.5,95.7 177.9,95.8 179.2,98.1 180.6,96.1 182,95.9 183.4,96.3 184.7,95.9 186.1,95.8 187.5,91 188.9,94.1 190.3,97 191.6,96.5 193,95.9 194.4,95.9 195.8,97.3 197.2,95.8 198.5,95.7 199.9,95.6 201.3,95.8 202.7,95.5 204,96.2 205.4,91.4 206.8,94.7 208.2,96.5 209.6,96.5 210.9,96.1 212.3,96.7 213.7,95.4 215.1,96.8 216.5,96.2 217.8,95.3 219.2,95.5 220.6,95.6 222,95.6 223.3,92.8 224.7,92.8 226.1,97.4 227.5,97.1 228.9,96.7 230.2,95.8 231.6,95.5 233,96.9 L233,101Z" fill="#EF843C"/><path d="M0,101 L0,97.9 1.4,97.3 2.8,97.4 4.1,97.4 5.5,93.4 6.9,96.6 8.3,98.6 9.7,96.8 11,96.9 12.4,96.3 13.8,97.7 15.2,97 16.5,97.6 17.9,98 19.3,96.6 20.7,97.8 22.1,97.1 23.4,92.6 24.8,95.5 26.2,97.2 27.6,97.2 29,96.5 30.3,97.3 31.7,96.9 33.1,97.6 34.5,97.1 35.8,97.8 37.2,98.8 38.6,97.1 40,96.2 41.4,95 42.7,96 44.1,96.9 45.5,98.1 46.9,98 48.3,98 49.6,97.6 51,96.8 52.4,98.1 53.8,96.7 55.1,98.1 56.5,97.4 57.9,98.7 59.3,94 60.7,93.6 62,96.3 63.4,97.4 64.8,97.3 66.2,97.9 67.6,96 68.9,98.4 70.3,98 71.7,98.1 73.1,98.5 74.4,96.8 75.8,96.2 77.2,96.1 78.6,94.3 80,97 81.3,96 82.7,98.9 84.1,97.9 85.5,98 86.9,96.3 88.2,98 89.6,98 91,98.9 92.4,97.4 93.8,97 95.1,96.2 96.5,93.3 97.9,96 99.3,98.3 100.6,97 102,97.8 103.4,97.1 104.8,97.9 106.2,97.6 107.5,96.5 108.9,97.3 110.3,96.9 111.7,96.4 113.1,96.5 114.4,93.7 115.8,96.1 117.2,98.3 118.6,96.9 119.9,97 121.3,97.9 122.7,96.3 124.1,96.6 125.5,97 126.8,97.9 128.2,97 129.6,96.9 131,96.7 132.4,94.2 133.7,93.8 135.1,96 136.5,98.2 137.9,97.1 139.2,98.5 140.6,97.2 142,97.7 143.4,98.2 144.8,97.1 146.1,97.3 147.5,98 148.9,97.7 150.3,95.1 151.7,94.1 153,97.7 154.4,97.8 155.8,97.8 157.2,97.9 158.6,97 159.9,97.2 161.3,96.3 162.7,96.7 164.1,96.9 165.4,98.6 166.8,97.2 168.2,95.5 169.6,92.9 171,96.7 172.3,98 173.7,97.6 175.1,96.9 176.5,96.6 177.9,97.2 179.2,98.4 180.6,97.1 182,96.6 183.4,97.3 184.7,97 186.1,96.6 187.5,92.4 188.9,95.6 190.3,98.2 191.6,97.3 193,97.6 194.4,97.7 195.8,97.8 197.2,96.9 198.5,97.5 199.9,96.9 201.3,96.9 202.7,96.4 204,97.1 205.4,92.9 206.8,95.8 208.2,97.7 209.6,97.3 210.9,97 212.3,97.3 213.7,96.4 215.1,97.5 216.5,97.1 217.8,96.6 219.2,96.7 220.6,96.8 222,96.8 223.3,94.3 224.7,94.1 226.1,98.4 227.5,98.4 228.9,97.4 230.2,97.2 231.6,96.6 233,97.7 L233,101Z" fill="#6ED0E0"/><path d="M0,101 L0,99.1 1.4,98 2.8,97.7 4.1,98.6 5.5,95.4 6.9,97.7 8.3,99.8 9.7,97.9 11,98.4 12.4,97.3 13.8,98.2 15.2,97.7 16.5,98.3 17.9,98.6 19.3,97.7 20.7,98.6 22.1,97.6 23.4,95.3 24.8,97.1 26.2,98.4 27.6,98.3 29,97.7 30.3,98.3 31.7,98.3 33.1,98.7 34.5,98.3 35.8,99 37.2,99.3 38.6,98.1 40,97.2 41.4,97.3 42.7,97.5 44.1,98.5 45.5,99.1 46.9,98.6 48.3,98.4 49.6,98.5 51,97.8 52.4,98.9 53.8,97.7 55.1,98.9 56.5,98.6 57.9,99.5 59.3,95.9 60.7,96.1 62,98.2 63.4,98.1 64.8,98.1 66.2,98.6 67.6,97.3 68.9,99 70.3,98.8 71.7,99.1 73.1,99.2 74.4,97.5 75.8,97.1 77.2,97 78.6,96.3 80,98.1 81.3,97 82.7,99.9 84.1,98.4 85.5,98.8 86.9,97.6 88.2,99.2 89.6,99 91,99.6 92.4,98.6 93.8,97.8 95.1,97.2 96.5,95.6 97.9,97.9 99.3,99.4 100.6,98.4 102,98.6 103.4,98.5 104.8,98.7 106.2,98.5 107.5,98.4 108.9,98.6 110.3,97.7 111.7,97.4 113.1,97.8 114.4,96.5 115.8,97.5 117.2,98.7 118.6,97.9 119.9,98 121.3,98.9 122.7,97.7 124.1,97.7 125.5,98.3 126.8,98.5 128.2,98.3 129.6,98.7 131,98 132.4,96.5 133.7,95.8 135.1,97.7 136.5,98.8 137.9,98 139.2,99.7 140.6,98.4 142,98.5 143.4,99.3 144.8,98 146.1,98.3 147.5,99 148.9,98.3 150.3,97 151.7,96.6 153,98.5 154.4,98.7 155.8,99 157.2,98.5 158.6,98.1 159.9,97.9 161.3,97.7 162.7,98.5 164.1,98.6 165.4,99.5 166.8,98.4 168.2,97.2 169.6,95.4 171,98.4 172.3,98.5 173.7,99 175.1,97.9 176.5,98.1 177.9,98.3 179.2,99.1 180.6,98.2 182,97.9 183.4,98.3 184.7,98.2 186.1,97.8 187.5,94.2 188.9,97.2 190.3,99.4 191.6,98.3 193,98.6 194.4,99 195.8,98.7 197.2,97.7 198.5,98.5 199.9,98.3 201.3,97.4 202.7,97.8 204,98.1 205.4,94.9 206.8,97.8 208.2,98.7 209.6,97.9 210.9,97.9 212.3,98.6 213.7,97.8 215.1,98.4 216.5,98.2 217.8,97.9 219.2,97.5 220.6,98 222,97.9 223.3,96.3 224.7,95.9 226.1,99.4 227.5,99.4 228.9,98.2 230.2,98.1 231.6,97.9 233,98.8 L233,101Z" fill="#EAB839"/><path d="M0,101 L0,100 1.4,99.3 2.8,98.8 4.1,99.7 5.5,97.6 6.9,99.3 8.3,99.8 9.7,98.9 11,99.6 12.4,98.5 13.8,99.7 15.2,99.1 16.5,99.4 17.9,99.7 19.3,99 20.7,99.4 22.1,98.8 23.4,97.8 24.8,99.2 26.2,99.4 27.6,99.3 29,98.8 30.3,99.8 31.7,99.3 33.1,100.2 34.5,99 35.8,99.9 37.2,100.3 38.6,99.3 40,98.6 41.4,98.8 42.7,98.9 44.1,99.7 45.5,99.9 46.9,99.1 48.3,99.8 49.6,99.7 51,99 52.4,99.7 53.8,99.1 55.1,99.8 56.5,100 57.9,100.3 59.3,97.3 60.7,98.1 62,99.1 63.4,99.3 64.8,99.2 66.2,99.3 67.6,98.3 68.9,99.9 70.3,100.2 71.7,99.9 73.1,100 74.4,98.9 75.8,98.9 77.2,99.2 78.6,98.5 80,99.3 81.3,98.6 82.7,100.8 84.1,99 85.5,99.9 86.9,98.8 88.2,99.9 89.6,99.5 91,100.1 92.4,99.8 93.8,98.6 95.1,98.5 96.5,97.8 97.9,99.4 99.3,100.3 100.6,99.5 102,99.3 103.4,99.4 104.8,99.4 106.2,99.9 107.5,99.4 108.9,99.3 110.3,98.6 111.7,98.3 113.1,99.2 114.4,98.1 115.8,98.7 117.2,99.6 118.6,99.7 119.9,99.3 121.3,99.9 122.7,99 124.1,99.4 125.5,99.2 126.8,99.4 128.2,99.7 129.6,99.8 131,99.3 132.4,98.3 133.7,98.2 135.1,99.3 136.5,100.1 137.9,99.3 139.2,100 140.6,99.6 142,99.5 143.4,100.4 144.8,99.3 146.1,99.2 147.5,99.4 148.9,99.5 150.3,98.5 151.7,98.5 153,99.4 154.4,99.6 155.8,99.3 157.2,100 158.6,99.2 159.9,99.2 161.3,99.4 162.7,99.6 164.1,99 165.4,100.2 166.8,99.1 168.2,98.5 169.6,97.6 171,98.9 172.3,99.7 173.7,99.5 175.1,99 176.5,99.1 177.9,99.2 179.2,100.1 180.6,99 182,98.7 183.4,98.8 184.7,99.2 186.1,99.8 187.5,97.1 188.9,99 190.3,100.7 191.6,99.1 193,100.1 194.4,100 195.8,99.7 197.2,98.6 198.5,99.5 199.9,99.2 201.3,98.4 202.7,98.5 204,99.2 205.4,97.9 206.8,99.3 208.2,99.7 209.6,99.1 210.9,99.1 212.3,99.3 213.7,98.8 215.1,99.7 216.5,99.3 217.8,98.9 219.2,99 220.6,98.7 222,99 223.3,98.1 224.7,98.1 226.1,99.8 227.5,100.2 228.9,99 230.2,99.3 231.6,99.2 233,100.2 L233,101Z" fill="#7EB26D"/>
</svg>
<div class="yl" style="right:941px;top:587px">0 B/s</div>
<div class="yl" style="right:941px;top:553.3px">5 MB/s</div>
<div class="yl" style="right:941px;top:519.7px">10 MB/s</div>
<div class="yl" style="right:941px;top:486px">15 MB/s</div>
<div class="xl" style="left:455.8px;top:602px">20:30</div>
<div class="xl" style="left:494.7px;top:602px">20:40</div>
<div class="xl" style="left:533.6px;top:602px">20:50</div>
<div class="xl" style="left:572.6px;top:602px">21:00</div>
<div class="xl" style="left:611.5px;top:602px">21:10</div>
<div class="xl" style="left:650.4px;top:602px">21:20</div>
<div class="panel" style="left:733px;top:442px;width:322px;height:258px"></div><div class="ptitle" style="left:733px;top:448.5px;width:322px">Inflight requests (per pod)</div>
<svg style="position:absolute;left:763px;top:492px" width="266" height="149" viewBox="0 -1 266 149">
<line x1="0" x2="266" y1="147.5" y2="147.5" stroke="rgba(36,41,46,0.12)" stroke-width="1"/>
<line x1="0" x2="266" y1="110.5" y2="110.5" stroke="rgba(36,41,46,0.12)" stroke-width="1"/>
<line x1="0" x2="266" y1="73.5" y2="73.5" stroke="rgba(36,41,46,0.12)" stroke-width="1"/>
<line x1="0" x2="266" y1="36.5" y2="36.5" stroke="rgba(36,41,46,0.12)" stroke-width="1"/>
<line x1="0" x2="266" y1="0.5" y2="0.5" stroke="rgba(36,41,46,0.12)" stroke-width="1"/>
<line x1="7.5" x2="7.5" y1="0" y2="147" stroke="rgba(36,41,46,0.12)" stroke-width="1"/>
<line x1="51.5" x2="51.5" y1="0" y2="147" stroke="rgba(36,41,46,0.12)" stroke-width="1"/>
<line x1="95.5" x2="95.5" y1="0" y2="147" stroke="rgba(36,41,46,0.12)" stroke-width="1"/>
<line x1="140.5" x2="140.5" y1="0" y2="147" stroke="rgba(36,41,46,0.12)" stroke-width="1"/>
<line x1="184.5" x2="184.5" y1="0" y2="147" stroke="rgba(36,41,46,0.12)" stroke-width="1"/>
<line x1="229.5" x2="229.5" y1="0" y2="147" stroke="rgba(36,41,46,0.12)" stroke-width="1"/>
<polyline points="0,144 1.6,143.9 3.1,143.8 4.7,144 6.3,142.9 7.9,142.6 9.4,144.1 11,143.9 12.6,144.1 14.2,143.1 15.7,143.2 17.3,144 18.9,144 20.5,144.4 22,143.4 23.6,144 25.2,144 26.8,143.9 28.3,143.5 29.9,144.2 31.5,143.6 33.1,143.5 34.6,144 36.2,144.4 37.8,143.2 39.3,144.3 40.9,143.8 42.5,143.8 44.1,144.3 45.6,143.7 47.2,143.6 48.8,143.8 50.4,143.9 51.9,143.4 53.5,144.2 55.1,144.2 56.7,144.3 58.2,143.8 59.8,144 61.4,144.3 63,143.1 64.5,143.1 66.1,144.2 67.7,143 69.3,144.4 70.8,144.1 72.4,143.6 74,144.2 75.6,142.3 77.1,144.2 78.7,143.4 80.3,143.3 81.8,144.1 83.4,144.2 85,141.8 86.6,143.5 88.1,143.7 89.7,143.7 91.3,143.6 92.9,142.9 94.4,144.4 96,143.6 97.6,143.8 99.2,144.1 100.7,143.5 102.3,144.1 103.9,143.3 105.5,144.1 107,144.3 108.6,143.7 110.2,144 111.8,144.1 113.3,143 114.9,143.4 116.5,142.9 118,143.1 119.6,144.2 121.2,143.9 122.8,143.9 124.3,143.3 125.9,144.1 127.5,144.3 129.1,143.7 130.6,143.9 132.2,143.4 133.8,143.5 135.4,143.5 136.9,144.1 138.5,143.9 140.1,144.1 141.7,144.3 143.2,143.7 144.8,143.3 146.4,144.3 148,144.3 149.5,143.4 151.1,144.2 152.7,144.4 154.2,144.1 155.8,144.1 157.4,143.2 159,144.4 160.5,144 162.1,144.2 163.7,143.5 165.3,143.4 166.8,143.1 168.4,144.2 170,144 171.6,142.6 173.1,143.9 174.7,143.7 176.3,143.7 177.9,143.7 179.4,143.1 181,142.1 182.6,144.1 184.2,143.8 185.7,143.9 187.3,142.8 188.9,144.2 190.4,143.4 192,139.7 193.6,143.2 195.2,143.2 196.7,143.1 198.3,144 199.9,144.2 201.5,144.3 203,143.8 204.6,143.1 206.2,143.8 207.8,144 209.3,144.1 210.9,143.5 212.5,144 214.1,143.8 215.6,143.4 217.2,144 218.8,142.5 220.4,144 221.9,144.3 223.5,143.6 225.1,143.6 226.7,143.9 228.2,143 229.8,144 231.4,143.4 232.9,143.7 234.5,143.9 236.1,144.2 237.7,143.7 239.2,141.7 240.8,143.7 242.4,143.8 244,143.6 245.5,143.9 247.1,143.5 248.7,144 250.3,143.5 251.8,143.8 253.4,144.2 255,143.5 256.6,143.2 258.1,143.2 259.7,144 261.3,144.4 262.9,143.5 264.4,143.5 266,144.1" fill="none" stroke="#7EB26D" stroke-width="1" stroke-linejoin="round"/><polyline points="0.1,66.1 1.4,51.5 2.6,132.3 5.2,29.4 7.2,125 9.7,29.4 11.5,102.9 14.1,58.8 16.1,125 18.7,102.9 23,132.3 25.5,117.6 27.6,110.2 29.6,125 31.9,29.4 34.4,132.3 36.2,110.2 38.8,125 41.3,132.3 43.3,132.3 45.1,80.8 47.2,102.9 49.7,29.4 53.5,132.3 56.1,110.2 58.6,102.9 61.1,132.3 65,102.9 67.5,132.3 69.5,125 71.8,44.1 73.9,125 76.4,29.4 78.5,117.6 80.5,95.6 82.8,102.9 84.6,117.6 86.6,117.6 89.1,132.3 91.7,110.2 94.2,29.4 96,29.4 98,51.5 100.6,132.3 103.1,110.2 105.7,132.3 109.5,132.3 112,125 114.1,125 116.4,36.8 118.4,125 120.4,73.5 122.7,132.3 126.8,132.3 129.3,80.8 131.6,125 133.7,58.8 135.7,132.3 138.2,36.8 140,88.2 142.6,29.4 144.6,117.6 146.9,29.4 148.9,95.6 151.5,29.4 153.5,125 155.8,29.4 157.8,80.8 159.9,29.4 162.2,102.9 164.5,29.4 166.7,132.3 168.8,29.4 171.1,132.3 173.6,29.4 175.7,125 177.7,29.4 180,117.6 182.3,44.1 184.6,110.2 187.1,29.4 189.1,132.3 191.4,29.4 193.5,73.5 196,29.4 197.8,110.2 200.6,117.6 202.4,132.3 204.9,29.4 206.9,95.6 208.7,95.6 211.3,132.3 213.3,80.8 215.6,132.3 218.1,29.4 220.2,102.9 222.5,29.4 224.5,95.6 226.5,44.1 229.1,117.6 231.1,29.4 233.4,132.3 235.4,29.4 237.5,117.6 240,29.4 242.3,132.3 244.4,29.4 246.6,117.6 248.9,29.4 251.2,58.8 253.5,29.4 255.8,95.6 257.8,44.1 260.1,132.3 262.2,29.4 264.7,117.6" fill="none" stroke="#EAB839" stroke-width="1" stroke-linejoin="round"/>
</svg>
<div class="yl" style="right:643px;top:633px">0</div>
<div class="yl" style="right:643px;top:596.2px">5</div>
<div class="yl" style="right:643px;top:559.5px">10</div>
<div class="yl" style="right:643px;top:522.8px">15</div>
<div class="yl" style="right:643px;top:486px">20</div>
<div class="xl" style="left:754.2px;top:648px">20:30</div>
<div class="xl" style="left:798.6px;top:648px">20:40</div>
<div class="xl" style="left:842.9px;top:648px">20:50</div>
<div class="xl" style="left:887.3px;top:648px">21:00</div>
<div class="xl" style="left:931.6px;top:648px">21:10</div>
<div class="xl" style="left:976px;top:648px">21:20</div>
<div class="panel" style="left:1062px;top:442px;width:322px;height:258px"></div><div class="ptitle" style="left:1062px;top:448.5px;width:322px">TCP connections (per pod)</div>
<svg style="position:absolute;left:1092px;top:492px" width="265" height="149" viewBox="0 -1 265 149">
<line x1="0" x2="265" y1="147.5" y2="147.5" stroke="rgba(36,41,46,0.12)" stroke-width="1"/>
<line x1="0" x2="265" y1="117.5" y2="117.5" stroke="rgba(36,41,46,0.12)" stroke-width="1"/>
<line x1="0" x2="265" y1="88.5" y2="88.5" stroke="rgba(36,41,46,0.12)" stroke-width="1"/>
<line x1="0" x2="265" y1="58.5" y2="58.5" stroke="rgba(36,41,46,0.12)" stroke-width="1"/>
<line x1="0" x2="265" y1="29.5" y2="29.5" stroke="rgba(36,41,46,0.12)" stroke-width="1"/>
<line x1="0" x2="265" y1="0.5" y2="0.5" stroke="rgba(36,41,46,0.12)" stroke-width="1"/>
<line x1="7.5" x2="7.5" y1="0" y2="147" stroke="rgba(36,41,46,0.12)" stroke-width="1"/>
<line x1="51.5" x2="51.5" y1="0" y2="147" stroke="rgba(36,41,46,0.12)" stroke-width="1"/>
<line x1="96.5" x2="96.5" y1="0" y2="147" stroke="rgba(36,41,46,0.12)" stroke-width="1"/>
<line x1="140.5" x2="140.5" y1="0" y2="147" stroke="rgba(36,41,46,0.12)" stroke-width="1"/>
<line x1="184.5" x2="184.5" y1="0" y2="147" stroke="rgba(36,41,46,0.12)" stroke-width="1"/>
<line x1="229.5" x2="229.5" y1="0" y2="147" stroke="rgba(36,41,46,0.12)" stroke-width="1"/>
<polyline points="0,94.1 1.3,94.2 2.7,94.3 4,94.1 5.3,94 6.7,94.1 8,94 9.3,94.1 10.7,94.1 12,94.1 13.3,94.2 14.6,94.1 16,94.1 17.3,94 18.6,94 20,94 21.3,94 22.6,94.1 24,94.1 25.3,93.8 26.6,93.5 28,93.8 29.3,94.1 30.6,94.1 32,94 33.3,94.1 34.6,94 36,94 37.3,94.2 38.6,94.1 39.9,93.9 41.3,94.1 42.6,94.2 43.9,94.3 45.3,94.3 46.6,94.2 47.9,94.1 49.3,94.2 50.6,94.2 51.9,94 53.3,94 54.6,94.2 55.9,94 57.3,93.9 58.6,94 59.9,94.1 61.3,94.3 62.6,94.3 63.9,94.2 65.3,94.1 66.6,94.1 67.9,94 69.2,94 70.6,94 71.9,94.1 73.2,94.4 74.6,94.3 75.9,94.2 77.2,94.2 78.6,94.2 79.9,94.2 81.2,94.3 82.6,94.2 83.9,94.1 85.2,94.1 86.6,94.1 87.9,94.1 89.2,94.2 90.6,94.2 91.9,93.9 93.2,93.2 94.5,92.3 95.9,93.2 97.2,93.8 98.5,94 99.9,94 101.2,93.9 102.5,94.1 103.9,94.1 105.2,94 106.5,94 107.9,94.1 109.2,94 110.5,94 111.9,94.2 113.2,94.1 114.5,93.9 115.9,93.9 117.2,94.1 118.5,94.1 119.8,93.2 121.2,92.3 122.5,93.2 123.8,94.2 125.2,94.1 126.5,94.2 127.8,94.3 129.2,94 130.5,94 131.8,94.2 133.2,94.1 134.5,93.9 135.8,93.9 137.2,94.1 138.5,94.2 139.8,94 141.2,94 142.5,94.2 143.8,94.1 145.2,93.9 146.5,94 147.8,92.9 149.1,91.7 150.5,92.9 151.8,94.2 153.1,94 154.5,94 155.8,94.2 157.1,94.1 158.5,94.2 159.8,94.2 161.1,94.1 162.5,93.9 163.8,93.8 165.1,94.1 166.5,94.2 167.8,94.2 169.1,94.3 170.5,94.3 171.8,94.2 173.1,94.1 174.4,94 175.8,94.2 177.1,94.3 178.4,94.3 179.8,94.2 181.1,94.1 182.4,94 183.8,94 185.1,94 186.4,94 187.8,94.1 189.1,94.3 190.4,94.4 191.8,94.1 193.1,93.9 194.4,93.9 195.8,94 197.1,94 198.4,94.1 199.7,94.2 201.1,94.1 202.4,94 203.7,94.1 205.1,94.1 206.4,94.1 207.7,94 209.1,94.1 210.4,94 211.7,93.9 213.1,94.1 214.4,93.9 215.7,93.9 217.1,94 218.4,94 219.7,92 221.1,90 222.4,92 223.7,94.2 225.1,94.1 226.4,94.2 227.7,95.8 229,94.2 230.4,94.2 231.7,94.1 233,94 234.4,93.9 235.7,93.9 237,94 238.4,94.1 239.7,94.1 241,94 242.4,94.1 243.7,94.1 245,94.1 246.4,94.1 247.7,94 249,94.1 250.4,94.2 251.7,94.1 253,94.2 254.3,94.3 255.7,94 257,94.2 258.3,94.4 259.7,94.1 261,94.2 262.3,94 263.7,94.1 265,94.2" fill="none" stroke="#7EB26D" stroke-width="1" stroke-linejoin="round"/><polyline points="0,70.6 1.3,70.6 2.7,70.6 4,70.6 5.3,70.6 6.7,70.6 8,70.6 9.3,70.6 10.7,70.6 12,70.6 13.3,70.6 14.6,70.6 16,70.6 17.3,70.6 18.6,70.6 20,70.6 21.3,70.6 22.6,70.6 24,68.2 25.3,65.9 26.6,64.7 28,65.9 29.3,68.2 30.6,70.6 32,70.6 33.3,70.6 34.6,70.6 36,70.6 37.3,70.6 38.6,70.6 39.9,70.6 41.3,70.6 42.6,70.6 43.9,70.6 45.3,70.6 46.6,70.6 47.9,70.6 49.3,70.6 50.6,70.6 51.9,70.6 53.3,70.6 54.6,70.6 55.9,70.6 57.3,70.6 58.6,70.6 59.9,70.6 61.3,70.6 62.6,70.6 63.9,70.6 65.3,70.6 66.6,70.6 67.9,70.6 69.2,70.6 70.6,70.6 71.9,70.6 73.2,70.6 74.6,70.6 75.9,70.6 77.2,70.6 78.6,70.6 79.9,70.6 81.2,70.6 82.6,70.6 83.9,70.6 85.2,70.6 86.6,70.6 87.9,70.6 89.2,70.6 90.6,70.6 91.9,70.6 93.2,64.4 94.5,52.9 95.9,64.4 97.2,70.6 98.5,70.6 99.9,70.6 101.2,70.6 102.5,70.6 103.9,70.6 105.2,70.6 106.5,70.6 107.9,70.6 109.2,70.6 110.5,70.6 111.9,70.6 113.2,70.6 114.5,70.6 115.9,70.6 117.2,70.6 118.5,70.6 119.8,64.4 121.2,52.9 122.5,64.4 123.8,70.6 125.2,70.6 126.5,70.6 127.8,70.6 129.2,70.6 130.5,70.6 131.8,70.6 133.2,70.6 134.5,70.6 135.8,70.6 137.2,70.6 138.5,70.6 139.8,70.6 141.2,70.6 142.5,70.6 143.8,70.6 145.2,70.6 146.5,70.6 147.8,62.3 149.1,47 150.5,62.3 151.8,70.6 153.1,70.6 154.5,70.6 155.8,70.6 157.1,70.6 158.5,70.6 159.8,70.6 161.1,70.6 162.5,70.6 163.8,70.6 165.1,70.6 166.5,70.6 167.8,70.6 169.1,70.6 170.5,70.6 171.8,70.6 173.1,70.6 174.4,70.6 175.8,70.6 177.1,70.6 178.4,70.6 179.8,70.6 181.1,70.6 182.4,70.6 183.8,70.6 185.1,70.6 186.4,70.6 187.8,70.6 189.1,70.6 190.4,70.6 191.8,70.6 193.1,70.6 194.4,70.6 195.8,70.6 197.1,70.6 198.4,70.6 199.7,70.6 201.1,70.6 202.4,70.6 203.7,70.6 205.1,70.6 206.4,70.6 207.7,70.6 209.1,70.6 210.4,70.6 211.7,70.6 213.1,70.6 214.4,70.6 215.7,70.6 217.1,70.6 218.4,70.6 219.7,56.2 221.1,29.4 222.4,56.2 223.7,70.6 225.1,70.6 226.4,70.6 227.7,70.6 229,70.6 230.4,70.6 231.7,70.6 233,70.6 234.4,70.6 235.7,70.6 237,70.6 238.4,70.6 239.7,70.6 241,70.6 242.4,70.6 243.7,70.6 245,70.6 246.4,70.6 247.7,70.6 249,70.6 250.4,70.6 251.7,70.6 253,70.6 254.3,70.6 255.7,70.6 257,70.6 258.3,70.6 259.7,70.6 261,70.6 262.3,70.6 263.7,70.6 265,70.6" fill="none" stroke="#EAB839" stroke-width="1" stroke-linejoin="round"/><polyline points="0,147 1.3,147 2.7,147 4,147 5.3,147 6.7,147 8,147 9.3,147 10.7,147 12,147 13.3,147 14.6,147 16,147 17.3,147 18.6,147 20,147 21.3,147 22.6,147 24,147 25.3,147 26.6,147 28,147 29.3,147 30.6,147 32,147 33.3,147 34.6,147 36,147 37.3,147 38.6,147 39.9,147 41.3,147 42.6,147 43.9,147 45.3,147 46.6,147 47.9,147 49.3,147 50.6,147 51.9,147 53.3,147 54.6,147 55.9,147 57.3,147 58.6,147 59.9,147 61.3,147 62.6,147 63.9,147 65.3,147 66.6,147 67.9,147 69.2,147 70.6,147 71.9,147 73.2,147 74.6,147 75.9,147 77.2,147 78.6,147 79.9,147 81.2,147 82.6,147 83.9,147 85.2,147 86.6,147 87.9,147 89.2,147 90.6,147 91.9,147 93.2,147 94.5,147 95.9,147 97.2,147 98.5,147 99.9,147 101.2,147 102.5,147 103.9,147 105.2,147 106.5,147 107.9,147 109.2,147 110.5,147 111.9,147 113.2,147 114.5,147 115.9,147 117.2,147 118.5,147 119.8,147 121.2,147 122.5,147 123.8,147 125.2,147 126.5,147 127.8,147 129.2,147 130.5,147 131.8,147 133.2,147 134.5,147 135.8,147 137.2,147 138.5,147 139.8,147 141.2,147 142.5,147 143.8,147 145.2,147 146.5,147 147.8,147 149.1,147 150.5,147 151.8,147 153.1,147 154.5,147 155.8,147 157.1,147 158.5,147 159.8,147 161.1,147 162.5,147 163.8,147 165.1,147 166.5,147 167.8,147 169.1,147 170.5,147 171.8,147 173.1,147 174.4,147 175.8,147 177.1,147 178.4,147 179.8,147 181.1,147 182.4,147 183.8,147 185.1,147 186.4,147 187.8,147 189.1,147 190.4,147 191.8,147 193.1,147 194.4,147 195.8,147 197.1,147 198.4,147 199.7,147 201.1,147 202.4,147 203.7,147 205.1,147 206.4,147 207.7,147 209.1,147 210.4,147 211.7,147 213.1,147 214.4,147 215.7,147 217.1,147 218.4,147 219.7,147 221.1,147 222.4,147 223.7,147 225.1,147 226.4,147 227.7,147 229,147 230.4,147 231.7,147 233,147 234.4,147 235.7,147 237,147 238.4,147 239.7,147 241,147 242.4,147 243.7,147 245,147 246.4,147 247.7,147 249,147 250.4,147 251.7,147 253,147 254.3,147 255.7,147 257,147 258.3,147 259.7,147 261,147 262.3,147 263.7,147 265,147" fill="none" stroke="#6ED0E0" stroke-width="1" stroke-linejoin="round"/>
</svg>
<div class="yl" style="right:314px;top:633px">0</div>
<div class="yl" style="right:314px;top:603.6px">5</div>
<div class="yl" style="right:314px;top:574.2px">10</div>
<div class="yl" style="right:314px;top:544.8px">15</div>
<div class="yl" style="right:314px;top:515.4px">20</div>
<div class="yl" style="right:314px;top:486px">25</div>
<div class="xl" style="left:1083.4px;top:648px">20:30</div>
<div class="xl" style="left:1127.8px;top:648px">20:40</div>
<div class="xl" style="left:1172.2px;top:648px">20:50</div>
<div class="xl" style="left:1216.5px;top:648px">21:00</div>
<div class="xl" style="left:1260.9px;top:648px">21:10</div>
<div class="xl" style="left:1305.3px;top:648px">21:20</div>
<div class="panel" style="left:73px;top:746px;width:322px;height:258px"></div><div class="ptitle" style="left:73px;top:752.5px;width:322px">Receive bandwidth</div>
<svg style="position:absolute;left:142px;top:796px" width="226" height="103" viewBox="0 -1 226 103">
<line x1="0" x2="226" y1="101.5" y2="101.5" stroke="rgba(36,41,46,0.12)" stroke-width="1"/>
<line x1="0" x2="226" y1="80.5" y2="80.5" stroke="rgba(36,41,46,0.12)" stroke-width="1"/>
<line x1="0" x2="226" y1="60.5" y2="60.5" stroke="rgba(36,41,46,0.12)" stroke-width="1"/>
<line x1="0" x2="226" y1="40.5" y2="40.5" stroke="rgba(36,41,46,0.12)" stroke-width="1"/>
<line x1="0" x2="226" y1="20.5" y2="20.5" stroke="rgba(36,41,46,0.12)" stroke-width="1"/>
<line x1="0" x2="226" y1="0.5" y2="0.5" stroke="rgba(36,41,46,0.12)" stroke-width="1"/>
<line x1="6.5" x2="6.5" y1="0" y2="101" stroke="rgba(36,41,46,0.12)" stroke-width="1"/>
<line x1="44.5" x2="44.5" y1="0" y2="101" stroke="rgba(36,41,46,0.12)" stroke-width="1"/>
<line x1="82.5" x2="82.5" y1="0" y2="101" stroke="rgba(36,41,46,0.12)" stroke-width="1"/>
<line x1="120.5" x2="120.5" y1="0" y2="101" stroke="rgba(36,41,46,0.12)" stroke-width="1"/>
<line x1="159.5" x2="159.5" y1="0" y2="101" stroke="rgba(36,41,46,0.12)" stroke-width="1"/>
<line x1="197.5" x2="197.5" y1="0" y2="101" stroke="rgba(36,41,46,0.12)" stroke-width="1"/>
<path d="M0,101 L0,50.1 1.4,51.8 2.8,45.7 4.3,42 5.7,38.3 7.1,38.1 8.5,43.4 9.9,51.2 11.4,46.9 12.8,48.5 14.2,48.7 15.6,50.8 17.1,50.5 18.5,51.8 19.9,43.6 21.3,33.2 22.7,43.3 24.2,49.1 25.6,49.7 27,51.8 28.4,47.1 29.8,46.2 31.3,39.7 32.7,37.9 34.1,42.3 35.5,46.3 37,48.9 38.4,44.1 39.8,38.5 41.2,35.8 42.6,43.4 44.1,49.6 45.5,51.9 46.9,51.3 48.3,50.1 49.7,46.3 51.2,53.6 52.6,49.8 54,39.9 55.4,34.7 56.9,36.2 58.3,38.8 59.7,41.7 61.1,46.6 62.5,45.5 64,49.8 65.4,50.4 66.8,47.5 68.2,49.3 69.6,53 71.1,46.9 72.5,47.9 73.9,47.9 75.3,47.3 76.8,47.4 78.2,47.1 79.6,50.9 81,51.4 82.4,46.1 83.9,43.8 85.3,44.7 86.7,44.9 88.1,38.5 89.5,42 91,44 92.4,44.9 93.8,42.7 95.2,40 96.7,42.5 98.1,48.9 99.5,52.2 100.9,50.3 102.3,52.9 103.8,52.8 105.2,49.7 106.6,49.5 108,46.1 109.4,43.7 110.9,39.8 112.3,41.1 113.7,45.6 115.1,49.8 116.6,49.7 118,50.5 119.4,53.3 120.8,50.1 122.2,40.3 123.7,25.3 125.1,27.6 126.5,42.7 127.9,42.3 129.3,40.6 130.8,41.2 132.2,51.9 133.6,50.6 135,51.7 136.5,46.2 137.9,38.8 139.3,25.9 140.7,26.2 142.1,34.5 143.6,44.1 145,47.1 146.4,44.3 147.8,50.3 149.2,51.3 150.7,41.6 152.1,40.8 153.5,45.3 154.9,48 156.4,49.9 157.8,46.6 159.2,45.3 160.6,51.2 162,47.8 163.5,49.2 164.9,47.4 166.3,37.9 167.7,32.9 169.1,39.4 170.6,45.2 172,48.8 173.4,51 174.8,53.7 176.3,51.5 177.7,39.4 179.1,30.3 180.5,30 181.9,43.4 183.4,44.3 184.8,36.6 186.2,42.2 187.6,51.8 189,46.7 190.5,46.7 191.9,49.2 193.3,41.4 194.7,33.3 196.2,42.8 197.6,50.5 199,50.4 200.4,48.6 201.8,41.3 203.3,31.6 204.7,29 206.1,25.6 207.5,21.8 208.9,23.4 210.4,29 211.8,35.7 213.2,48.2 214.6,55.3 216.1,52.2 217.5,49.1 218.9,45.9 220.3,48.8 221.7,49.4 223.2,47.6 224.6,50.5 226,52.2 L226,101Z" fill="#629E51"/><path d="M0,101 L0,51.1 1.4,52.9 2.8,46.5 4.3,43 5.7,40.4 7.1,40.1 8.5,44.7 9.9,52.2 11.4,47.7 12.8,49.5 14.2,49.6 15.6,51.9 17.1,51 18.5,52.5 19.9,44.7 21.3,34 22.7,44 24.2,49.6 25.6,50.3 27,52.8 28.4,47.8 29.8,47.2 31.3,40.9 32.7,39.3 34.1,43.3 35.5,47.2 37,50.3 38.4,45.2 39.8,39.4 41.2,36.9 42.6,44.6 44.1,50.5 45.5,52.8 46.9,52.3 48.3,50.9 49.7,47.2 51.2,54.9 52.6,51.1 54,41.4 55.4,36.5 56.9,37.8 58.3,40.8 59.7,43 61.1,47.4 62.5,46.3 64,50.7 65.4,51.6 66.8,48.5 68.2,50.4 69.6,54.5 71.1,47.9 72.5,48.6 73.9,48.8 75.3,48.8 76.8,49.4 78.2,48.4 79.6,52.3 81,52.3 82.4,46.7 83.9,44.9 85.3,45.9 86.7,46.3 88.1,40.1 89.5,43.3 91,45.2 92.4,46.1 93.8,43.7 95.2,40.8 96.7,43.1 98.1,49.2 99.5,52.6 100.9,51.2 102.3,53.7 103.8,53.4 105.2,50.7 106.6,50.6 108,47.2 109.4,44.5 110.9,40.9 112.3,42 113.7,46.3 115.1,51.3 116.6,51.3 118,51.2 119.4,53.7 120.8,50.6 122.2,40.9 123.7,26.2 125.1,29 126.5,43.1 127.9,42.6 129.3,41.1 130.8,41.7 132.2,52.9 133.6,51.6 135,52.2 136.5,46.6 137.9,39.6 139.3,26.5 140.7,27 142.1,35.7 143.6,44.5 145,47.7 146.4,45.5 147.8,50.9 149.2,52.3 150.7,42.6 152.1,41.1 153.5,45.5 154.9,48.4 156.4,50.4 157.8,47.4 159.2,46.1 160.6,52.1 162,48.9 163.5,50.1 164.9,48.4 166.3,39.4 167.7,34 169.1,40.7 170.6,46.2 172,49.5 173.4,51.6 174.8,54.3 176.3,52.5 177.7,41.2 179.1,33.2 180.5,31.7 181.9,45 183.4,45.9 184.8,36.9 186.2,42.4 187.6,52.9 189,48.6 190.5,48 191.9,50.3 193.3,42.8 194.7,34.9 196.2,44 197.6,51.4 199,51.3 200.4,49.5 201.8,41.8 203.3,32.3 204.7,29.5 206.1,25.8 207.5,22.7 208.9,25 210.4,30.5 211.8,37.1 213.2,49.4 214.6,56.2 216.1,52.6 217.5,49.6 218.9,46.2 220.3,49 221.7,50.2 223.2,49.1 224.6,51.4 226,52.8 L226,101Z" fill="#AEA2E0"/><path d="M0,101 L0,51.7 1.4,53.3 2.8,46.8 4.3,43.4 5.7,40.6 7.1,40.4 8.5,45.6 9.9,52.8 11.4,48.3 12.8,50.1 14.2,50.4 15.6,52.7 17.1,51.6 18.5,53 19.9,45.2 21.3,34.6 22.7,44.5 24.2,49.9 25.6,50.6 27,53.3 28.4,48.4 29.8,47.9 31.3,41.7 32.7,40.1 34.1,43.6 35.5,47.5 37,50.9 38.4,45.9 39.8,40.2 41.2,37.7 42.6,45.3 44.1,51.1 45.5,53.3 46.9,52.7 48.3,51.5 49.7,48 51.2,55.6 52.6,51.5 54,42.1 55.4,37.5 56.9,39.2 58.3,42 59.7,43.2 61.1,47.6 62.5,46.6 64,50.9 65.4,52 66.8,48.8 68.2,50.7 69.6,54.8 71.1,48.3 72.5,49.2 73.9,49.5 75.3,50.2 76.8,50.4 78.2,48.9 79.6,52.8 81,52.8 82.4,47 83.9,45.1 85.3,46.6 86.7,47.3 88.1,41 89.5,44 91,45.5 92.4,46.7 93.8,44.5 95.2,41.5 96.7,43.7 98.1,49.8 99.5,52.9 100.9,51.5 102.3,54.1 103.8,53.7 105.2,51.3 106.6,51.1 108,47.9 109.4,45.4 110.9,41.5 112.3,42.5 113.7,46.8 115.1,51.8 116.6,51.5 118,51.3 119.4,54 120.8,51.2 122.2,41.7 123.7,27 125.1,30 126.5,43.9 127.9,43.3 129.3,41.8 130.8,42.1 132.2,53.6 133.6,52.3 135,52.7 136.5,47.2 137.9,40.7 139.3,27.5 140.7,27.5 142.1,36.3 143.6,45.1 145,48.7 146.4,46.8 147.8,51.6 149.2,52.9 150.7,43.7 152.1,42 153.5,46.3 154.9,48.9 156.4,50.5 157.8,47.5 159.2,46.5 160.6,53 162,49.4 163.5,50.2 164.9,48.8 166.3,39.6 167.7,34.3 169.1,41.6 170.6,46.5 172,49.7 173.4,52.1 174.8,54.8 176.3,53.2 177.7,42 179.1,34.4 180.5,32.9 181.9,45.9 183.4,46.4 184.8,37.1 186.2,42.7 187.6,53.5 189,49.5 190.5,48.9 191.9,50.9 193.3,43.3 194.7,35.6 196.2,44.9 197.6,51.8 199,51.9 200.4,50.3 201.8,42.4 203.3,32.7 204.7,29.9 206.1,26.1 207.5,23.5 208.9,26.1 210.4,31.6 211.8,37.9 213.2,49.7 214.6,56.7 216.1,53.2 217.5,50.1 218.9,47.1 220.3,50 221.7,50.7 223.2,49.5 224.6,51.8 226,53.3 L226,101Z" fill="#E5A8E2"/><path d="M0,101 L0,59.6 1.4,58.7 2.8,56.3 4.3,58.9 5.7,54.5 7.1,51.2 8.5,56.3 9.9,63.1 11.4,60.7 12.8,59 14.2,56.5 15.6,60.7 17.1,60.8 18.5,59.1 19.9,53.5 21.3,47.1 22.7,57.3 24.2,62 25.6,59.9 27,60.2 28.4,60.3 29.8,63.5 31.3,59.9 32.7,55.1 34.1,54.1 35.5,58.3 37,63.1 38.4,55.8 39.8,52 41.2,53.7 42.6,54.1 44.1,60.1 45.5,62.2 46.9,62 48.3,61 49.7,56.3 51.2,62.1 52.6,58.8 54,52.4 55.4,48.3 56.9,44.5 58.3,46.4 59.7,56 61.1,61.7 62.5,59 64,58.9 65.4,60.7 66.8,61.6 68.2,61.6 69.6,60.4 71.1,55.2 72.5,59.5 73.9,61.7 75.3,56.8 76.8,59.7 78.2,63.6 79.6,59.5 81,59.9 82.4,55.8 83.9,55 85.3,58.2 86.7,59.5 88.1,58.1 89.5,59 91,55.5 92.4,51.7 93.8,49.2 95.2,51.8 96.7,53.1 98.1,60.1 99.5,64.8 100.9,60.7 102.3,61.8 103.8,59 105.2,59.6 106.6,62.8 108,50.6 109.4,47.6 110.9,49.6 112.3,53.1 113.7,54.1 115.1,56.8 116.6,56.6 118,60.1 119.4,62 120.8,58.9 122.2,53.3 123.7,43.5 125.1,41.9 126.5,54.5 127.9,52.6 129.3,51.2 130.8,50.4 132.2,58.3 133.6,57.9 135,60.1 136.5,55.9 137.9,52.3 139.3,44.8 140.7,47.3 142.1,53.9 143.6,57.6 145,60 146.4,61.2 147.8,58.3 149.2,59.5 150.7,57.1 152.1,58.2 153.5,54.3 154.9,58.8 156.4,61.5 157.8,53.8 159.2,59 160.6,63.8 162,55.8 163.5,54.2 164.9,51.1 166.3,42.5 167.7,42.1 169.1,53.6 170.6,55.7 172,59.4 173.4,63.1 174.8,63.6 176.3,61.1 177.7,53.7 179.1,49.7 180.5,51.6 181.9,61.5 183.4,54.9 184.8,40.7 186.2,47.6 187.6,62.9 189,59.1 190.5,58.9 191.9,63.6 193.3,58.4 194.7,46.5 196.2,52.8 197.6,62.4 199,60.1 200.4,58.5 201.8,52.2 203.3,42.6 204.7,37 206.1,31.9 207.5,33.6 208.9,34.8 210.4,37.2 211.8,44.5 213.2,59.8 214.6,67 216.1,61.6 217.5,60.3 218.9,56.8 220.3,56.3 221.7,59.2 223.2,59.3 224.6,62.7 226,62.9 L226,101Z" fill="#82B5D8"/><path d="M0,101 L0,60.7 1.4,59.8 2.8,57.5 4.3,60 5.7,56 7.1,53 8.5,58.5 9.9,65.5 11.4,61.9 12.8,60.4 14.2,58.3 15.6,62.1 17.1,61.6 18.5,60.6 19.9,55.1 21.3,48.1 22.7,58.5 24.2,62.8 25.6,60.1 27,60.4 28.4,61.2 29.8,65.2 31.3,62.7 32.7,57.9 34.1,55.6 35.5,59.6 37,65.1 38.4,57.7 39.8,53.7 41.2,55.7 42.6,55.7 44.1,61.7 45.5,63 46.9,63.2 48.3,62.7 49.7,57.4 51.2,63.3 52.6,60.4 54,55.2 55.4,51.2 56.9,47.4 58.3,49.3 59.7,57.7 61.1,62.1 62.5,59.3 64,60 65.4,61.6 66.8,62.2 68.2,63.1 69.6,62.8 71.1,58 72.5,62.8 73.9,63.7 75.3,59 76.8,61.8 78.2,65.4 79.6,61.4 81,60.9 82.4,56.8 83.9,56.2 85.3,59.3 86.7,61.6 88.1,62.7 89.5,62.1 91,57.7 92.4,53.8 93.8,50.7 95.2,54.1 96.7,55 98.1,61.3 99.5,66.1 100.9,62.1 102.3,62.9 103.8,60.1 105.2,61.1 106.6,64.3 108,53 109.4,49.6 110.9,50.6 112.3,55 113.7,56.1 115.1,58.6 116.6,57.8 118,60.7 119.4,62.7 120.8,59.3 122.2,54.4 123.7,46.1 125.1,43.9 126.5,55 127.9,53.6 129.3,52.9 130.8,51.4 132.2,60 133.6,60.3 135,61.5 136.5,56.9 137.9,54.7 139.3,49.9 140.7,50.4 142.1,55.4 143.6,59.3 145,61.3 146.4,62.4 147.8,60.2 149.2,60.9 150.7,58.4 152.1,59.4 153.5,55.1 154.9,60.1 156.4,62.7 157.8,54.5 159.2,59.8 160.6,66.2 162,58.7 163.5,55.8 164.9,52.8 166.3,45.1 167.7,44.7 169.1,54.6 170.6,56.6 172,60.6 173.4,64.2 174.8,64.5 176.3,62.2 177.7,56.1 179.1,51 180.5,53.8 181.9,63.6 183.4,56.2 184.8,41.4 186.2,48.4 187.6,65.1 189,61.4 190.5,61.1 191.9,64.7 193.3,58.7 194.7,47.7 196.2,54.4 197.6,63.6 199,61.5 200.4,59.3 201.8,52.6 203.3,43.2 204.7,37.5 206.1,32.5 207.5,35 208.9,37.5 210.4,39.6 211.8,45.7 213.2,61.5 214.6,68.7 216.1,63.1 217.5,61 218.9,57.1 220.3,57.4 221.7,60.3 223.2,61.1 224.6,64.6 226,64 L226,101Z" fill="#F29191"/><path d="M0,101 L0,61 1.4,60.9 2.8,58.8 4.3,61.5 5.7,57 7.1,54.5 8.5,60.7 9.9,66.8 11.4,62.7 12.8,61.3 14.2,59.3 15.6,62.9 17.1,62.5 18.5,61.5 19.9,55.9 21.3,49.5 22.7,59.6 24.2,63.2 25.6,60.8 27,61.7 28.4,62.2 29.8,66.2 31.3,64.2 32.7,59.4 34.1,56.3 35.5,60.4 37,66.1 38.4,58.5 39.8,55.1 41.2,57.3 42.6,57.7 44.1,63 45.5,63.4 46.9,64 48.3,64.1 49.7,58.7 51.2,64 52.6,61.6 54,57 55.4,52.5 56.9,49.2 58.3,50.9 59.7,58.6 61.1,63.4 62.5,60.4 64,60.9 65.4,62.4 66.8,62.8 68.2,63.9 69.6,63.3 71.1,59.3 72.5,65 73.9,65.6 75.3,60.8 76.8,63.3 78.2,66.9 79.6,62.1 81,61.6 82.4,57.7 83.9,56.9 85.3,59.8 86.7,62.8 88.1,65 89.5,63.6 91,58.6 92.4,54.6 93.8,52.1 95.2,55.5 96.7,56 98.1,62.3 99.5,66.8 100.9,63.2 102.3,63.6 103.8,60.5 105.2,62.4 106.6,65.3 108,53.9 109.4,51.2 110.9,52.1 112.3,55.9 113.7,57 115.1,59.9 116.6,59.5 118,62.1 119.4,64 120.8,60.7 122.2,56.1 123.7,47.8 125.1,45 126.5,56.1 127.9,55.2 129.3,55.2 130.8,53.2 132.2,61.4 133.6,61.5 135,62.5 136.5,57.7 137.9,55.6 139.3,51.9 140.7,52.2 142.1,56.3 143.6,60.2 145,62.2 146.4,63.7 147.8,60.7 149.2,61.4 150.7,59.7 152.1,60.9 153.5,56.5 154.9,60.7 156.4,63.8 157.8,56.2 159.2,61 160.6,67.1 162,59.7 163.5,57.5 164.9,54.2 166.3,46.9 167.7,47.2 169.1,56.2 170.6,57.4 172,61.7 173.4,65.4 174.8,65.3 176.3,63.8 177.7,58.7 179.1,53.3 180.5,55.7 181.9,64.9 183.4,57.2 184.8,42 186.2,48.9 187.6,66 189,62.7 190.5,62.4 191.9,66.2 193.3,60.2 194.7,49.5 196.2,56.3 197.6,64.8 199,62.3 200.4,60.4 201.8,53.4 203.3,43.8 204.7,38.9 206.1,33.4 207.5,36 208.9,38.8 210.4,40.7 211.8,48.1 213.2,63.3 214.6,69.7 216.1,63.5 217.5,61.3 218.9,58.2 220.3,58.6 221.7,61.2 223.2,62.2 224.6,65.8 226,65 L226,101Z" fill="#F9BA8F"/><path d="M0,101 L0,73.1 1.4,69.5 2.8,67.2 4.3,71.4 5.7,67.6 7.1,65.7 8.5,69.5 9.9,75.2 11.4,71.3 12.8,70.1 14.2,68 15.6,69.3 17.1,66.2 18.5,67.2 19.9,65.2 21.3,60.2 22.7,72.8 24.2,74.1 25.6,68.8 27,70.9 28.4,72.8 29.8,77 31.3,72 32.7,66.7 34.1,67.3 35.5,72.8 37,74.4 38.4,67 39.8,67.5 41.2,69.2 42.6,68.3 44.1,70.5 45.5,71.9 46.9,73.1 48.3,74.2 49.7,68.1 51.2,71.2 52.6,69.3 54,67.4 55.4,64.6 56.9,64.4 58.3,62.7 59.7,61.5 61.1,68.8 62.5,71.1 64,72.2 65.4,73.1 66.8,73 68.2,73.6 69.6,71.7 71.1,62.7 72.5,67.1 73.9,75.8 75.3,71.3 76.8,66.4 78.2,69.2 79.6,68.5 81,70 82.4,70.6 83.9,71.2 85.3,66.9 86.7,64.8 88.1,70.8 89.5,75 91,65.7 92.4,59 93.8,59 95.2,63.6 96.7,63.3 98.1,69.4 99.5,76.4 100.9,72.5 102.3,70.7 103.8,69.5 105.2,74.7 106.6,71.7 108,62.8 109.4,67.2 110.9,66.7 112.3,67.5 113.7,66.1 115.1,68.6 116.6,69.7 118,69.7 119.4,71.4 120.8,69.9 122.2,67.9 123.7,65 125.1,58.4 126.5,64.6 127.9,63.1 129.3,65.2 130.8,69.8 132.2,76.1 133.6,71.7 135,71.4 136.5,66.8 137.9,66.1 139.3,66.6 140.7,66.3 142.1,63.8 143.6,66.8 145,69.8 146.4,70.6 147.8,71.3 149.2,72.1 150.7,66.5 152.1,71.3 153.5,68.7 154.9,68.6 156.4,72.9 157.8,64.3 159.2,62.8 160.6,70.2 162,71.7 163.5,71.1 164.9,65.6 166.3,57.1 167.7,61 169.1,66.5 170.6,64.8 172,68.9 173.4,70.4 174.8,72.1 176.3,72.7 177.7,68.5 179.1,69.4 180.5,66.5 181.9,74.8 183.4,68.1 184.8,48.1 186.2,55.1 187.6,74.6 189,72.5 190.5,69.9 191.9,72 193.3,69.9 194.7,62.9 196.2,66.6 197.6,68 199,69.6 200.4,69.1 201.8,56.8 203.3,46.1 204.7,43 206.1,39.8 207.5,45.7 208.9,52.2 210.4,57.9 211.8,61.8 213.2,73.9 214.6,76.8 216.1,69.9 217.5,69.2 218.9,65.4 220.3,67 221.7,68.4 223.2,68.7 224.6,72 226,69.7 L226,101Z" fill="#70DBED"/><path d="M0,101 L0,74.1 1.4,71.1 2.8,70.5 4.3,75.8 5.7,70.7 7.1,68.4 8.5,73.1 9.9,79.3 11.4,76.3 12.8,73.8 14.2,70.8 15.6,72.2 17.1,68.4 18.5,69 19.9,66.4 21.3,62.8 22.7,74.9 24.2,75.8 25.6,70.9 27,73 28.4,74.9 29.8,79 31.3,75.5 32.7,71.7 34.1,73.9 35.5,76.4 37,76.2 38.4,69.8 39.8,69.5 41.2,71.7 42.6,70.6 44.1,72.3 45.5,74.4 46.9,74.8 48.3,75.5 49.7,70.8 51.2,73.4 52.6,71.8 54,72 55.4,68.9 56.9,68.6 58.3,65.9 59.7,63.8 61.1,72 62.5,72.6 64,73.6 65.4,74.9 66.8,75 68.2,75.8 69.6,73.3 71.1,64.9 72.5,71.2 73.9,79.2 75.3,75.4 76.8,70.1 78.2,71.5 79.6,71.2 81,72 82.4,72.4 83.9,71.9 85.3,67.3 86.7,67.6 88.1,75.9 89.5,77.2 91,68.1 92.4,61.9 93.8,60.6 95.2,64.9 96.7,65.5 98.1,72.9 99.5,79 100.9,74.2 102.3,73 103.8,72.3 105.2,77.4 106.6,73.3 108,66.3 109.4,69.4 110.9,68.8 112.3,70.5 113.7,68.8 115.1,70.8 116.6,72.4 118,71.8 119.4,73.1 120.8,72.5 122.2,70.2 123.7,66.6 125.1,62 126.5,68.6 127.9,67.4 129.3,68.8 130.8,71.6 132.2,79.2 133.6,75.4 135,73.5 136.5,68.5 137.9,68.9 139.3,70.5 140.7,68.9 142.1,66.6 143.6,69.8 145,72.2 146.4,72.5 147.8,72.5 149.2,73.8 150.7,70.1 152.1,75.2 153.5,72 154.9,71.4 156.4,74.7 157.8,64.8 159.2,63.3 160.6,71.2 162,73.5 163.5,74.2 164.9,69.9 166.3,62.2 167.7,63.7 169.1,70.2 170.6,68.9 172,70.9 173.4,71.8 174.8,73.1 176.3,74.4 177.7,72.9 179.1,76.7 180.5,73.3 181.9,79.3 183.4,71.6 184.8,49.5 186.2,56.1 187.6,76.6 189,74.2 190.5,71.5 191.9,74.2 193.3,72.5 194.7,66.5 196.2,68.4 197.6,69.2 199,72.4 200.4,70.9 201.8,57.4 203.3,47.8 204.7,44.1 206.1,40.5 207.5,47.6 208.9,54.2 210.4,60.6 211.8,65.8 213.2,75.6 214.6,78.1 216.1,72.3 217.5,72.1 218.9,68.4 220.3,70 221.7,70.8 223.2,71.5 224.6,74.9 226,71.2 L226,101Z" fill="#F4D598"/><path d="M0,101 L0,75.5 1.4,72.1 2.8,71.6 4.3,77.2 5.7,71.8 7.1,68.9 8.5,74.2 9.9,80.3 11.4,76.8 12.8,74.7 14.2,71.6 15.6,73.3 17.1,69.6 18.5,69.9 19.9,67.4 21.3,63.8 22.7,76.2 24.2,77 25.6,72 27,74.4 28.4,76.3 29.8,80.5 31.3,78.5 32.7,74.5 34.1,75.8 35.5,78.1 37,77.6 38.4,70.8 39.8,70.9 41.2,73.8 42.6,72.3 44.1,73.6 45.5,75.5 46.9,75.7 48.3,76.6 49.7,71.6 51.2,74.1 52.6,72.7 54,73.2 55.4,71.6 56.9,70.9 58.3,67.5 59.7,65.5 61.1,73.7 62.5,73.7 64,74.5 65.4,76.4 66.8,76.7 68.2,77.7 69.6,74.7 71.1,66.3 72.5,72.7 73.9,80.6 75.3,77.3 76.8,73.3 78.2,73.6 79.6,72.5 81,73.6 82.4,73.3 83.9,72.5 85.3,68.9 86.7,70.5 88.1,77.7 89.5,77.8 91,68.9 92.4,62.6 93.8,61.5 95.2,66.8 96.7,67.4 98.1,74 99.5,80 100.9,75.6 102.3,74.3 103.8,73.2 105.2,79.3 106.6,75.7 108,67.5 109.4,71.2 110.9,71.3 112.3,72.5 113.7,70.1 115.1,72.6 116.6,74.7 118,73.6 119.4,74.6 120.8,74.2 122.2,71.9 123.7,69.2 125.1,64.4 126.5,70.4 127.9,68.8 129.3,69.3 130.8,73.3 132.2,81.2 133.6,76.7 135,74.7 136.5,70.2 137.9,70.7 139.3,72.9 140.7,71.3 142.1,68 143.6,70.9 145,73.7 146.4,74.4 147.8,73.5 149.2,75 150.7,71.6 152.1,75.7 153.5,73.2 154.9,72.8 156.4,75.8 157.8,66.2 159.2,64.5 160.6,73.9 162,76.3 163.5,75.3 164.9,70.9 166.3,63.3 167.7,66.5 169.1,72.5 170.6,70.5 172,72.1 173.4,73.1 174.8,74.6 176.3,75.3 177.7,74.6 179.1,79.8 180.5,75.7 181.9,81.2 183.4,73 184.8,50.2 186.2,56.7 187.6,77.1 189,75.5 190.5,73.2 191.9,75.7 193.3,73.8 194.7,67.1 196.2,68.8 197.6,70.7 199,73.7 200.4,71.6 201.8,58 203.3,48.4 204.7,44.8 206.1,41.2 207.5,48.8 208.9,55.6 210.4,62.1 211.8,67.4 213.2,77 214.6,79.1 216.1,73.8 217.5,74.1 218.9,70.1 220.3,71.2 221.7,72.1 223.2,72.8 224.6,75.3 226,71.5 L226,101Z" fill="#B7DBAB"/><path d="M0,101 L0,83.9 1.4,85 2.8,83.3 4.3,83.5 5.7,82.2 7.1,83.1 8.5,83.4 9.9,85.4 11.4,83.6 12.8,86.2 14.2,81.9 15.6,83.8 17.1,83 18.5,83.1 19.9,83.2 21.3,83.1 22.7,85 24.2,83.3 25.6,82.8 27,84.7 28.4,82.3 29.8,83.6 31.3,83.3 32.7,85.5 34.1,84.9 35.5,83.1 37,83.7 38.4,82.1 39.8,83.3 41.2,84.7 42.6,86.6 44.1,85.4 45.5,83.9 46.9,83.2 48.3,84.5 49.7,82 51.2,85 52.6,83.1 54,82.9 55.4,83.3 56.9,82.3 58.3,83.1 59.7,82.8 61.1,84.3 62.5,81.6 64,83 65.4,84.6 66.8,84.2 68.2,83 69.6,85.3 71.1,81.4 72.5,83 73.9,83.3 75.3,83.9 76.8,84 78.2,82.4 79.6,83.6 81,85.1 82.4,83.6 83.9,83.4 85.3,83.1 86.7,85 88.1,84.8 89.5,86.3 91,82.3 92.4,82.1 93.8,82.6 95.2,83.5 96.7,82.1 98.1,83.2 99.5,86.6 100.9,84.2 102.3,84 103.8,83.3 105.2,83.7 106.6,84.6 108,81 109.4,82.9 110.9,83.9 112.3,82.5 113.7,81.2 115.1,83.4 116.6,84 118,83.5 119.4,84.7 120.8,84.2 122.2,83.4 123.7,82.6 125.1,83.5 126.5,84.9 127.9,82.2 129.3,86.1 130.8,82.1 132.2,85.9 133.6,84 135,85.2 136.5,82.7 137.9,86.9 139.3,86.7 140.7,84.3 142.1,82.1 143.6,83 145,85.5 146.4,85.5 147.8,84.7 149.2,84.1 150.7,83.5 152.1,86.3 153.5,82.3 154.9,81.5 156.4,85.1 157.8,82.9 159.2,82.7 160.6,86.8 162,82.7 163.5,82 164.9,82.7 166.3,82.8 167.7,84 169.1,85.5 170.6,82.6 172,83 173.4,84.2 174.8,84.3 176.3,84.6 177.7,83.1 179.1,84 180.5,83.9 181.9,87.6 183.4,80.1 184.8,56.1 186.2,62.2 187.6,84.6 189,83.3 190.5,82.2 191.9,84.7 193.3,83.4 194.7,81.8 196.2,84.9 197.6,83.2 199,83.5 200.4,79.9 201.8,69.9 203.3,60.6 204.7,52.7 206.1,48.2 207.5,56.7 208.9,64.9 210.4,72.2 211.8,78.3 213.2,84.8 214.6,84.5 216.1,83 217.5,86.1 218.9,84.1 220.3,84.4 221.7,83.3 223.2,82.6 224.6,83.1 226,83.4 L226,101Z" fill="#890F02"/><path d="M0,101 L0,84.1 1.4,85.1 2.8,83.9 4.3,84.2 5.7,82.8 7.1,84.1 8.5,84.2 9.9,85.9 11.4,84.2 12.8,87 14.2,82.8 15.6,84.6 17.1,84.5 18.5,83.9 19.9,84 21.3,83.6 22.7,85.7 24.2,84.3 25.6,83.8 27,85.5 28.4,83.3 29.8,84.4 31.3,83.6 32.7,85.6 34.1,86.4 35.5,84.1 37,84.5 38.4,82.4 39.8,83.7 41.2,85.9 42.6,86.7 44.1,86.1 45.5,85 46.9,84.1 48.3,85.5 49.7,82.7 51.2,86.5 52.6,83.6 54,83.3 55.4,84.1 56.9,83.5 58.3,83.9 59.7,83.9 61.1,84.9 62.5,82 64,84.3 65.4,85.9 66.8,85.4 68.2,83.7 69.6,85.7 71.1,81.9 72.5,83.8 73.9,84.3 75.3,84.8 76.8,84.4 78.2,83.3 79.6,84.4 81,85.9 82.4,84.4 83.9,84.1 85.3,84.1 86.7,85.9 88.1,85.6 89.5,86.9 91,83.3 92.4,82.9 93.8,82.7 95.2,84.4 96.7,82.8 98.1,84.3 99.5,87.3 100.9,84.9 102.3,84.8 103.8,84.1 105.2,84.4 106.6,84.9 108,82.4 109.4,83.2 110.9,84.6 112.3,83.5 113.7,82.2 115.1,84.4 116.6,85 118,84.7 119.4,85.6 120.8,85.9 122.2,83.9 123.7,83.4 125.1,84.2 126.5,85.6 127.9,83.1 129.3,87.3 130.8,82.7 132.2,86.5 133.6,85.1 135,86.2 136.5,84.1 137.9,88 139.3,87.6 140.7,85 142.1,83 143.6,83.7 145,85.9 146.4,86.3 147.8,85.4 149.2,84.8 150.7,84.2 152.1,87.7 153.5,83.3 154.9,82.6 156.4,85.8 157.8,83.4 159.2,83.5 160.6,87.6 162,83.4 163.5,82.8 164.9,83.8 166.3,83.7 167.7,84.6 169.1,86.2 170.6,83.2 172,83.9 173.4,84.7 174.8,85.1 176.3,85.6 177.7,83.9 179.1,84.6 180.5,84.5 181.9,88.5 183.4,81 184.8,56.6 186.2,62.7 187.6,85 189,84.6 190.5,83.1 191.9,85.7 193.3,84.3 194.7,82.3 196.2,85.6 197.6,84.1 199,84.6 200.4,80.7 201.8,69.9 203.3,61 204.7,53 206.1,48.5 207.5,57.2 208.9,65.9 210.4,73.2 211.8,79.4 213.2,85.9 214.6,84.9 216.1,84 217.5,87.1 218.9,84.7 220.3,85.4 221.7,84.2 223.2,83.3 224.6,83.8 226,84.1 L226,101Z" fill="#C15C17"/><path d="M0,101 L0,87.9 1.4,88.4 2.8,87.9 4.3,88 5.7,86.6 7.1,87.1 8.5,87.7 9.9,89.5 11.4,87.1 12.8,89.7 14.2,86.3 15.6,88.7 17.1,88.4 18.5,87.7 19.9,87.8 21.3,88.9 22.7,89.3 24.2,88.5 25.6,88.6 27,89 28.4,86.9 29.8,88.6 31.3,88.2 32.7,89.3 34.1,90.1 35.5,87.6 37,87.1 38.4,86.6 39.8,86.9 41.2,88.1 42.6,90.1 44.1,88.4 45.5,87.7 46.9,87.5 48.3,88.3 49.7,86.9 51.2,88.9 52.6,87.2 54,87.1 55.4,88.6 56.9,87.6 58.3,87.5 59.7,87.4 61.1,88.3 62.5,86.3 64,87.2 65.4,89.7 66.8,88.8 68.2,87.3 69.6,89 71.1,86.9 72.5,86.8 73.9,87.9 75.3,88.5 76.8,88.3 78.2,87 79.6,88.1 81,90.1 82.4,86.8 83.9,87.6 85.3,86.7 86.7,89.5 88.1,88.2 89.5,89.6 91,86.7 92.4,87.3 93.8,86.6 95.2,88.1 96.7,87.3 98.1,87 99.5,89.3 100.9,88.1 102.3,88.1 103.8,88.4 105.2,89.4 106.6,87.4 108,87.6 109.4,87.8 110.9,88.6 112.3,87.2 113.7,87.3 115.1,87.9 116.6,88.1 118,88.2 119.4,88.1 120.8,89.7 122.2,87.3 123.7,87.1 125.1,87.9 126.5,88.2 127.9,87.5 129.3,90.1 130.8,86.8 132.2,88.8 133.6,88.8 135,89.1 136.5,87.5 137.9,91 139.3,89.5 140.7,87.6 142.1,86.4 143.6,87.6 145,88.3 146.4,88.2 147.8,88.3 149.2,88.1 150.7,87.2 152.1,90.5 153.5,87.4 154.9,86.7 156.4,89.7 157.8,86.1 159.2,87 160.6,91 162,85.9 163.5,86.9 164.9,87.3 166.3,86.8 167.7,89 169.1,90.2 170.6,87.2 172,88.2 173.4,88.6 174.8,87.6 176.3,88.8 177.7,88.1 179.1,87.5 180.5,88 181.9,92.2 183.4,85.3 184.8,58.5 186.2,65.1 187.6,88.2 189,88.7 190.5,86.9 191.9,89 193.3,88.7 194.7,86.1 196.2,88.5 197.6,88.5 199,87.9 200.4,84.1 201.8,71.6 203.3,62.9 204.7,54.1 206.1,49.3 207.5,58.1 208.9,68.9 210.4,75.8 211.8,82.9 213.2,90.1 214.6,88.3 216.1,87.8 217.5,89.6 218.9,88.3 220.3,88.5 221.7,88 223.2,86.8 224.6,86.3 226,86.3 L226,101Z" fill="#447EBC"/><path d="M0,101 L0,91.2 1.4,90.7 2.8,92 4.3,90.1 5.7,90.6 7.1,91.4 8.5,90.4 9.9,91.9 11.4,91 12.8,92.1 14.2,90.1 15.6,91.1 17.1,92.2 18.5,91 19.9,90.8 21.3,91.5 22.7,92.7 24.2,90.3 25.6,91.6 27,91.9 28.4,90.6 29.8,90.9 31.3,92.7 32.7,92.3 34.1,92.5 35.5,91.8 37,91.5 38.4,89.7 39.8,89.5 41.2,91.3 42.6,92.8 44.1,91.4 45.5,92 46.9,91 48.3,91.7 49.7,90.4 51.2,92.1 52.6,91.1 54,90.9 55.4,91.6 56.9,90.9 58.3,92.5 59.7,90.9 61.1,91.4 62.5,90.9 64,90.5 65.4,92.1 66.8,92.5 68.2,89.9 69.6,91.9 71.1,90.3 72.5,89.9 73.9,90.6 75.3,91.3 76.8,91.1 78.2,91.1 79.6,90.9 81,92.9 82.4,91.5 83.9,90.4 85.3,91 86.7,93.6 88.1,91.4 89.5,91.8 91,90.2 92.4,91 93.8,90.5 95.2,91.4 96.7,91.3 98.1,91.3 99.5,91.8 100.9,92.3 102.3,91.4 103.8,91.3 105.2,92.4 106.6,92 108,91.5 109.4,89.8 110.9,91.9 112.3,90.3 113.7,90.4 115.1,90.7 116.6,90.3 118,92.1 119.4,90.7 120.8,92.7 122.2,90.1 123.7,89.8 125.1,91.6 126.5,91.8 127.9,90.2 129.3,92.6 130.8,89.7 132.2,92.8 133.6,92.1 135,92.5 136.5,90.5 137.9,94 139.3,92.9 140.7,89.6 142.1,90.8 143.6,90.3 145,91.1 146.4,92.4 147.8,91.7 149.2,91.4 150.7,90 152.1,92.7 153.5,90.7 154.9,90.8 156.4,92.3 157.8,90.3 159.2,89.4 160.6,93.7 162,89.4 163.5,90.1 164.9,91 166.3,89.5 167.7,91.5 169.1,92.1 170.6,89.6 172,90.7 173.4,90.9 174.8,91.1 176.3,91.5 177.7,89.9 179.1,92.4 180.5,90.6 181.9,94.5 183.4,89.2 184.8,60.3 186.2,66.5 187.6,90.4 189,91.2 190.5,91 191.9,92 193.3,91.3 194.7,89.3 196.2,92.6 197.6,90.7 199,90.8 200.4,86.1 201.8,75 203.3,65.3 204.7,55.6 206.1,50.1 207.5,59.8 208.9,70 210.4,78.5 211.8,85 213.2,92.4 214.6,91 216.1,90.8 217.5,93.2 218.9,92 220.3,92 221.7,90.6 223.2,90.6 224.6,89.4 226,90.3 L226,101Z" fill="#CCA300"/><path d="M0,101 L0,94.8 1.4,93.8 2.8,94.5 4.3,94.4 5.7,94.5 7.1,94.6 8.5,94 9.9,94.6 11.4,93.7 12.8,95 14.2,93.8 15.6,94.7 17.1,95.1 18.5,94.9 19.9,94.7 21.3,95 22.7,96.9 24.2,93.6 25.6,95 27,95.7 28.4,94 29.8,94.9 31.3,95.2 32.7,96.7 34.1,95.4 35.5,95.2 37,94 38.4,93.6 39.8,93.9 41.2,95.5 42.6,96.8 44.1,93.7 45.5,94.9 46.9,94.1 48.3,94.4 49.7,94.6 51.2,95.6 52.6,94.5 54,94.7 55.4,94.3 56.9,93.7 58.3,95.3 59.7,94.7 61.1,95.1 62.5,94.8 64,94.7 65.4,94.6 66.8,95.5 68.2,93.5 69.6,94.4 71.1,93.4 72.5,94 73.9,94.9 75.3,95.5 76.8,94.6 78.2,94.4 79.6,95.1 81,96.1 82.4,95.1 83.9,94.8 85.3,94.2 86.7,96.6 88.1,94.8 89.5,95.7 91,94 92.4,94.6 93.8,94.3 95.2,93.7 96.7,94.2 98.1,94.8 99.5,94.5 100.9,94.8 102.3,94 103.8,94 105.2,95.7 106.6,94.7 108,95.1 109.4,94.4 110.9,95.2 112.3,94.7 113.7,94.1 115.1,93.4 116.6,93.6 118,94.8 119.4,94.6 120.8,95.3 122.2,94.5 123.7,93.7 125.1,93.6 126.5,95.7 127.9,94.8 129.3,95.5 130.8,93.8 132.2,94.9 133.6,95.7 135,94.7 136.5,94.3 137.9,96.2 139.3,94.4 140.7,93.3 142.1,95.9 143.6,93.3 145,95.1 146.4,95.9 147.8,94.9 149.2,95.3 150.7,94.6 152.1,95.2 153.5,94.6 154.9,94.5 156.4,94.8 157.8,94.9 159.2,94.2 160.6,96.4 162,94.1 163.5,93.6 164.9,94.3 166.3,94 167.7,95.1 169.1,95.7 170.6,94.1 172,95 173.4,94.9 174.8,93.5 176.3,93.9 177.7,94.1 179.1,95.2 180.5,94.2 181.9,97.2 183.4,92.4 184.8,61.5 186.2,69.1 187.6,93.1 189,94.5 190.5,94.3 191.9,96.3 193.3,93.8 194.7,92.7 196.2,95.8 197.6,94.5 199,94.6 200.4,88.8 201.8,77.6 203.3,67 204.7,57 206.1,51.1 207.5,61.1 208.9,72.1 210.4,81.4 211.8,89.8 213.2,95.5 214.6,94.7 216.1,95.3 217.5,95.2 218.9,94.2 220.3,94.5 221.7,93.9 223.2,95.7 224.6,93.1 226,94.6 L226,101Z" fill="#508642"/><path d="M0,101 L0,97.7 1.4,98 2.8,98.1 4.3,97.9 5.7,97.7 7.1,97.6 8.5,97.2 9.9,98.4 11.4,97 12.8,97.8 14.2,97.6 15.6,97.9 17.1,98.1 18.5,97.5 19.9,97.4 21.3,97.7 22.7,98.2 24.2,97.2 25.6,98.4 27,98.6 28.4,97.7 29.8,98.2 31.3,98.5 32.7,98.3 34.1,98.3 35.5,98.5 37,98 38.4,97.7 39.8,97.8 41.2,97.9 42.6,98.5 44.1,97.1 45.5,97.9 46.9,97.7 48.3,97.4 49.7,97.8 51.2,97.8 52.6,97.8 54,97.5 55.4,97.6 56.9,97 58.3,98.2 59.7,97.9 61.1,98.1 62.5,98.3 64,98 65.4,97.3 66.8,98.2 68.2,97.5 69.6,97.3 71.1,97 72.5,97.3 73.9,97.5 75.3,98.1 76.8,97.7 78.2,97.6 79.6,98.5 81,98.3 82.4,97.8 83.9,97.8 85.3,98.2 86.7,98.2 88.1,98.1 89.5,98.4 91,97.3 92.4,97.3 93.8,97.6 95.2,97.6 96.7,97.4 98.1,98.1 99.5,97.8 100.9,97.4 102.3,97.4 103.8,97 105.2,98.2 106.6,97.7 108,98 109.4,97.9 110.9,98.2 112.3,97.4 113.7,98 115.1,97 116.6,97.4 118,98.2 119.4,97.6 120.8,98.1 122.2,97.4 123.7,97.3 125.1,96.7 126.5,97.9 127.9,97.8 129.3,97.7 130.8,96.9 132.2,97.2 133.6,98 135,97.8 136.5,97.3 137.9,98.2 139.3,97.9 140.7,97.6 142.1,98 143.6,97.4 145,97.8 146.4,98.6 147.8,97.8 149.2,97.4 150.7,98.4 152.1,98.6 153.5,97.1 154.9,97.4 156.4,96.9 157.8,97.7 159.2,97.8 160.6,98.4 162,96.9 163.5,96.7 164.9,98 166.3,97.9 167.7,97.8 169.1,98.3 170.6,97.4 172,97.8 173.4,97.8 174.8,97.2 176.3,97.9 177.7,97.3 179.1,98.1 180.5,97.6 181.9,99.1 183.4,95.3 184.8,62.5 186.2,71.8 187.6,96.5 189,97.7 190.5,97.2 191.9,97.8 193.3,97.2 194.7,96.7 196.2,98.4 197.6,98 199,98.1 200.4,90.6 201.8,80.2 203.3,69.1 204.7,58.2 206.1,51.9 207.5,62.7 208.9,73.4 210.4,83.8 211.8,93.3 213.2,97.8 214.6,98.3 216.1,98.1 217.5,97 218.9,97.2 220.3,97 221.7,97.1 223.2,98 224.6,96.8 226,97.2 L226,101Z" fill="#BA43A9"/><path d="M0,101 L0,98.1 1.4,98.8 2.8,98.7 4.3,98.8 5.7,98.3 7.1,98.6 8.5,98.3 9.9,99.3 11.4,97.9 12.8,98.6 14.2,98.3 15.6,98.6 17.1,98.7 18.5,98.4 19.9,98.2 21.3,98.7 22.7,98.6 24.2,98.3 25.6,98.9 27,99.2 28.4,98.4 29.8,98.8 31.3,99.4 32.7,98.9 34.1,98.8 35.5,99.1 37,99.2 38.4,98.6 39.8,98.2 41.2,98.7 42.6,98.9 44.1,98.4 45.5,98.3 46.9,98.7 48.3,98.4 49.7,98.2 51.2,98.7 52.6,98.9 54,98.4 55.4,98.5 56.9,98.1 58.3,99.1 59.7,98.8 61.1,98.9 62.5,99.3 64,98.5 65.4,98.4 66.8,98.9 68.2,98 69.6,98.2 71.1,98.3 72.5,98.4 73.9,98.2 75.3,99.1 76.8,98.3 78.2,98.3 79.6,99.3 81,98.4 82.4,98.7 83.9,98.3 85.3,98.8 86.7,98.6 88.1,98.4 89.5,98.9 91,98.3 92.4,98.6 93.8,98.4 95.2,98.8 96.7,98.1 98.1,98.3 99.5,98.6 100.9,98.3 102.3,98.1 103.8,97.9 105.2,99.2 106.6,98.2 108,98.4 109.4,98.6 110.9,99 112.3,98.1 113.7,99.1 115.1,98.3 116.6,98.1 118,99.2 119.4,98.7 120.8,99.1 122.2,98.5 123.7,98 125.1,97.8 126.5,99.3 127.9,98.8 129.3,98.3 130.8,97.9 132.2,98.4 133.6,98.9 135,98.5 136.5,98.6 137.9,98.7 139.3,98.9 140.7,98.4 142.1,98.5 143.6,98.6 145,98.7 146.4,99.1 147.8,98.8 149.2,98.1 150.7,98.7 152.1,99.2 153.5,98 154.9,98.4 156.4,97.7 157.8,98.6 159.2,98.8 160.6,99.2 162,98 163.5,97.5 164.9,98.9 166.3,98.8 167.7,98.3 169.1,98.9 170.6,98.7 172,98.7 173.4,98.5 174.8,98.1 176.3,98.6 177.7,98.2 179.1,98.7 180.5,98.4 181.9,99.4 183.4,96.4 184.8,62.8 186.2,71.9 187.6,97.2 189,98.4 190.5,98 191.9,98.2 193.3,98.2 194.7,98.6 196.2,98.9 197.6,98.9 199,98.8 200.4,91.4 201.8,80.3 203.3,69.4 204.7,58.5 206.1,52.1 207.5,63.2 208.9,73.7 210.4,84.4 211.8,94.9 213.2,98.3 214.6,98.8 216.1,98.9 217.5,97.8 218.9,98.3 220.3,97.8 221.7,97.7 223.2,98.9 224.6,98.4 226,98.4 L226,101Z" fill="#705DA0"/><path d="M0,101 L0,101 1.4,101 2.8,101 4.3,101 5.7,101 7.1,101 8.5,101 9.9,101 11.4,101 12.8,101 14.2,101 15.6,101 17.1,101 18.5,101 19.9,101 21.3,101 22.7,101 24.2,101 25.6,101 27,101 28.4,101 29.8,101 31.3,101 32.7,101 34.1,101 35.5,101 37,101 38.4,101 39.8,101 41.2,101 42.6,101 44.1,101 45.5,101 46.9,101 48.3,101 49.7,101 51.2,101 52.6,101 54,101 55.4,101 56.9,101 58.3,101 59.7,101 61.1,101 62.5,101 64,101 65.4,101 66.8,101 68.2,101 69.6,101 71.1,101 72.5,101 73.9,101 75.3,101 76.8,101 78.2,101 79.6,101 81,101 82.4,101 83.9,101 85.3,101 86.7,101 88.1,101 89.5,101 91,101 92.4,101 93.8,101 95.2,101 96.7,101 98.1,101 99.5,101 100.9,101 102.3,101 103.8,101 105.2,101 106.6,101 108,101 109.4,101 110.9,101 112.3,101 113.7,101 115.1,101 116.6,101 118,101 119.4,101 120.8,101 122.2,101 123.7,101 125.1,101 126.5,101 127.9,101 129.3,101 130.8,101 132.2,101 133.6,101 135,101 136.5,101 137.9,101 139.3,101 140.7,101 142.1,101 143.6,101 145,101 146.4,101 147.8,101 149.2,101 150.7,101 152.1,101 153.5,101 154.9,101 156.4,101 157.8,101 159.2,101 160.6,101 162,101 163.5,101 164.9,101 166.3,101 167.7,101 169.1,101 170.6,101 172,101 173.4,101 174.8,101 176.3,101 177.7,101 179.1,101 180.5,101 181.9,101 183.4,98.2 184.8,64 186.2,73.2 187.6,99.8 189,101 190.5,101 191.9,101 193.3,101 194.7,101 196.2,101 197.6,101 199,101 200.4,93.1 201.8,81.9 203.3,70.7 204.7,59.5 206.1,52.7 207.5,64 208.9,75.2 210.4,86.4 211.8,97.6 213.2,101 214.6,101 216.1,101 217.5,101 218.9,101 220.3,101 221.7,101 223.2,101 224.6,101 226,101 L226,101Z" fill="#7EB26D"/>
</svg>
<div class="yl" style="right:1264px;top:891px">0 B/s</div>
<div class="yl" style="right:1264px;top:870.8px">100 MB/s</div>
<div class="yl" style="right:1264px;top:850.6px">200 MB/s</div>
<div class="yl" style="right:1264px;top:830.4px">300 MB/s</div>
<div class="yl" style="right:1264px;top:810.2px">400 MB/s</div>
<div class="yl" style="right:1264px;top:790px">500 MB/s</div>
<div class="xl" style="left:132.4px;top:906px">20:30</div>
<div class="xl" style="left:170.6px;top:906px">20:40</div>
<div class="xl" style="left:208.7px;top:906px">20:50</div>
<div class="xl" style="left:246.9px;top:906px">21:00</div>
<div class="xl" style="left:285px;top:906px">21:10</div>
<div class="xl" style="left:323.1px;top:906px">21:20</div>
<div class="panel" style="left:403px;top:746px;width:322px;height:258px"></div><div class="ptitle" style="left:403px;top:752.5px;width:322px">Transmit bandwidth</div>
<svg style="position:absolute;left:472px;top:796px" width="226" height="103" viewBox="0 -1 226 103">
<line x1="0" x2="226" y1="101.5" y2="101.5" stroke="rgba(36,41,46,0.12)" stroke-width="1"/>
<line x1="0" x2="226" y1="67.5" y2="67.5" stroke="rgba(36,41,46,0.12)" stroke-width="1"/>
<line x1="0" x2="226" y1="33.5" y2="33.5" stroke="rgba(36,41,46,0.12)" stroke-width="1"/>
<line x1="0" x2="226" y1="0.5" y2="0.5" stroke="rgba(36,41,46,0.12)" stroke-width="1"/>
<line x1="6.5" x2="6.5" y1="0" y2="101" stroke="rgba(36,41,46,0.12)" stroke-width="1"/>
<line x1="44.5" x2="44.5" y1="0" y2="101" stroke="rgba(36,41,46,0.12)" stroke-width="1"/>
<line x1="82.5" x2="82.5" y1="0" y2="101" stroke="rgba(36,41,46,0.12)" stroke-width="1"/>
<line x1="120.5" x2="120.5" y1="0" y2="101" stroke="rgba(36,41,46,0.12)" stroke-width="1"/>
<line x1="157.5" x2="157.5" y1="0" y2="101" stroke="rgba(36,41,46,0.12)" stroke-width="1"/>
<line x1="195.5" x2="195.5" y1="0" y2="101" stroke="rgba(36,41,46,0.12)" stroke-width="1"/>
<path d="M0,101 L0,58.7 1.4,58.8 2.8,49.8 4.3,53.1 5.7,58.9 7.1,59.4 8.5,60.5 9.9,61.5 11.4,60.1 12.8,56.6 14.2,58.9 15.6,59.3 17.1,56.3 18.5,55.7 19.9,56.2 21.3,60.3 22.7,56 24.2,58.6 25.6,58.3 27,55.7 28.4,57.4 29.8,60.7 31.3,60.7 32.7,61.7 34.1,58.1 35.5,50 37,59.4 38.4,58 39.8,58.7 41.2,58.4 42.6,57.4 44.1,60.3 45.5,58.5 46.9,61.5 48.3,58.5 49.7,56.2 51.2,57.3 52.6,51.3 54,57.2 55.4,59.8 56.9,58.4 58.3,57.2 59.7,57.5 61.1,55.1 62.5,59.3 64,59.7 65.4,56.5 66.8,56.2 68.2,61.6 69.6,62.3 71.1,57.2 72.5,58.2 73.9,58.8 75.3,50.8 76.8,58.7 78.2,52.5 79.6,53 81,49.8 82.4,58.3 83.9,61.4 85.3,57.1 86.7,59.4 88.1,59.7 89.5,59.4 91,62.7 92.4,59.6 93.8,62.1 95.2,61.6 96.7,56.8 98.1,60.8 99.5,62.7 100.9,54.8 102.3,56.5 103.8,52.4 105.2,57.3 106.6,58.1 108,56.7 109.4,53.6 110.9,58.4 112.3,58.9 113.7,55.5 115.1,56.5 116.6,57.8 118,58.9 119.4,53.7 120.8,59.1 122.2,58.5 123.7,56.9 125.1,59.7 126.5,59 127.9,59.5 129.3,57 130.8,57.4 132.2,57.5 133.6,57.4 135,51.9 136.5,55.9 137.9,57.5 139.3,58.2 140.7,58 142.1,61.4 143.6,56.3 145,52.4 146.4,60.5 147.8,62.6 149.2,61.7 150.7,60.6 152.1,60.3 153.5,60.8 154.9,59.1 156.4,59 157.8,61.5 159.2,60 160.6,57.1 162,57.1 163.5,59 164.9,59.5 166.3,55.9 167.7,57.4 169.1,54.2 170.6,55.5 172,52.7 173.4,59.7 174.8,55.9 176.3,57.3 177.7,61.3 179.1,62.6 180.5,61.5 181.9,62 183.4,59.7 184.8,53.3 186.2,57.8 187.6,57.9 189,60 190.5,60.4 191.9,59.5 193.3,60.7 194.7,59.1 196.2,61.6 197.6,60.3 199,56.2 200.4,56.7 201.8,60.8 203.3,52.9 204.7,31.5 206.1,21.7 207.5,35.7 208.9,51.7 210.4,51.1 211.8,54.6 213.2,55.2 214.6,59.5 216.1,61.5 217.5,59.5 218.9,54.8 220.3,63.2 221.7,60.1 223.2,58.3 224.6,60.9 226,58.1 L226,101Z" fill="#629E51"/><path d="M0,101 L0,59 1.4,59.3 2.8,50.4 4.3,53.8 5.7,59.3 7.1,59.9 8.5,61.3 9.9,62.1 11.4,60.6 12.8,56.8 14.2,59.1 15.6,59.6 17.1,56.8 18.5,56.2 19.9,56.5 21.3,60.7 22.7,56.7 24.2,59.6 25.6,58.9 27,56.1 28.4,57.9 29.8,61.3 31.3,61.1 32.7,61.9 34.1,58.5 35.5,50.4 37,59.7 38.4,58.4 39.8,59.2 41.2,59 42.6,57.9 44.1,60.9 45.5,58.8 46.9,61.9 48.3,59.1 49.7,56.6 51.2,57.8 52.6,51.6 54,57.4 55.4,60 56.9,58.5 58.3,57.5 59.7,57.8 61.1,55.5 62.5,59.6 64,60 65.4,56.9 66.8,56.7 68.2,61.8 69.6,62.7 71.1,57.8 72.5,58.9 73.9,59.8 75.3,51.9 76.8,59.6 78.2,54.1 79.6,54 81,50.2 82.4,58.4 83.9,61.5 85.3,57.5 86.7,59.8 88.1,59.9 89.5,60.2 91,63.6 92.4,60.3 93.8,62.5 95.2,61.9 96.7,57.3 98.1,61.3 99.5,63.3 100.9,55.9 102.3,57 103.8,52.7 105.2,57.5 106.6,58.4 108,57 109.4,53.8 110.9,58.8 112.3,59.4 113.7,56 115.1,57.6 116.6,58.4 118,59.5 119.4,54.3 120.8,59.2 122.2,58.8 123.7,57.6 125.1,60.5 126.5,59.7 127.9,60.2 129.3,57.5 130.8,57.7 132.2,58 133.6,57.9 135,52.2 136.5,56.3 137.9,57.8 139.3,58.7 140.7,58.7 142.1,62 143.6,57 145,53 146.4,61 147.8,63.1 149.2,62.1 150.7,61 152.1,60.4 153.5,60.8 154.9,59.8 156.4,59.7 157.8,62.1 159.2,60.9 160.6,58 162,57.6 163.5,59.2 164.9,59.9 166.3,56.4 167.7,57.9 169.1,54.4 170.6,55.6 172,53.2 173.4,60.5 174.8,57 176.3,57.8 177.7,61.5 179.1,63.4 180.5,62.1 181.9,62.5 183.4,60.2 184.8,53.6 186.2,58.2 187.6,58.4 189,60.5 190.5,61 191.9,60.1 193.3,61.1 194.7,59.6 196.2,62.2 197.6,60.7 199,56.6 200.4,57.2 201.8,61.2 203.3,53.3 204.7,31.7 206.1,21.8 207.5,35.9 208.9,52.3 210.4,51.7 211.8,55.2 213.2,55.5 214.6,59.6 216.1,61.7 217.5,59.8 218.9,55.4 220.3,63.9 221.7,60.7 223.2,58.6 224.6,61.2 226,58.7 L226,101Z" fill="#E5A8E2"/><path d="M0,101 L0,64.7 1.4,70 2.8,66.4 4.3,69.2 5.7,64.7 7.1,70.3 8.5,77.3 9.9,73 11.4,70.4 12.8,67 14.2,73.7 15.6,77.2 17.1,62.6 18.5,68.6 19.9,71 21.3,74.1 22.7,71.4 24.2,67.1 25.6,74.3 27,75.7 28.4,64 29.8,67 31.3,69.5 32.7,71.6 34.1,74.1 35.5,59.9 37,65.9 38.4,70.3 39.8,74.3 41.2,74.3 42.6,68.2 44.1,63.2 45.5,67.3 46.9,72.8 48.3,66.1 49.7,65.8 51.2,68.2 52.6,65.2 54,70.8 55.4,76.7 56.9,75.1 58.3,73.4 59.7,72.6 61.1,70.8 62.5,67.3 64,66.3 65.4,72.3 66.8,72.4 68.2,76.2 69.6,75.4 71.1,69.3 72.5,64.2 73.9,62.2 75.3,64 76.8,70.7 78.2,61.3 79.6,60.3 81,66.9 82.4,70.9 83.9,72.3 85.3,70.6 86.7,73.9 88.1,68.8 89.5,63.5 91,76 92.4,75 93.8,76.2 95.2,71.8 96.7,61.8 98.1,66.1 99.5,75.4 100.9,66.7 102.3,68.8 103.8,69.3 105.2,68.4 106.6,69 108,69.7 109.4,67.3 110.9,68.8 112.3,73.8 113.7,73.5 115.1,69.2 116.6,71.4 118,73.3 119.4,64.8 120.8,61.8 122.2,66 123.7,66.6 125.1,66.4 126.5,66.6 127.9,68.7 129.3,67.8 130.8,65.6 132.2,66.9 133.6,71.1 135,69.8 136.5,66.2 137.9,70.2 139.3,72 140.7,70.3 142.1,75.1 143.6,67.6 145,74.8 146.4,75.6 147.8,75.8 149.2,77 150.7,71.9 152.1,73.4 153.5,81.2 154.9,77.6 156.4,71.7 157.8,73.7 159.2,75.1 160.6,73 162,72.2 163.5,73.7 164.9,69.6 166.3,63.3 167.7,63.9 169.1,66.5 170.6,76.5 172,71.2 173.4,70.8 174.8,66.5 176.3,71.5 177.7,79.7 179.1,78 180.5,73.7 181.9,78.2 183.4,76.1 184.8,65.7 186.2,69.4 187.6,66.6 189,69.6 190.5,75.1 191.9,77 193.3,79.2 194.7,71.8 196.2,72 197.6,72.6 199,66.7 200.4,64.8 201.8,67.8 203.3,57 204.7,38.2 206.1,31.1 207.5,45.5 208.9,68.2 210.4,72.3 211.8,71.8 213.2,74.1 214.6,69.7 216.1,72.7 217.5,74.3 218.9,70.7 220.3,71.8 221.7,69.2 223.2,73.1 224.6,72.3 226,65.6 L226,101Z" fill="#82B5D8"/><path d="M0,101 L0,65.3 1.4,70.6 2.8,67.3 4.3,69.9 5.7,65.1 7.1,70.9 8.5,78.3 9.9,73.6 11.4,70.8 12.8,67.6 14.2,74.1 15.6,77.4 17.1,64.5 18.5,70.1 19.9,72.5 21.3,75.6 22.7,72.7 24.2,68.6 25.6,75.2 27,76.7 28.4,65.2 29.8,67.6 31.3,69.6 32.7,71.7 34.1,74.2 35.5,60.2 37,66.3 38.4,71 39.8,75.3 41.2,75.9 42.6,69.4 44.1,63.8 45.5,68 46.9,73.5 48.3,66.7 49.7,66 51.2,68.7 52.6,66.4 54,71.9 55.4,77.2 56.9,75.2 58.3,73.8 59.7,73.2 61.1,71.3 62.5,67.7 64,67.3 65.4,73.8 66.8,74.3 68.2,77.3 69.6,76 71.1,70 72.5,65.6 73.9,63.9 75.3,64.7 76.8,71 78.2,62.4 79.6,62.1 81,67.9 82.4,71.3 83.9,72.9 85.3,71.9 86.7,74.7 88.1,69.5 89.5,65.7 91,76.9 92.4,75.7 93.8,76.9 95.2,72.1 96.7,62.9 98.1,68 99.5,77.3 100.9,67.6 102.3,68.9 103.8,69.5 105.2,69.1 106.6,70 108,70.8 109.4,68.8 110.9,69.6 112.3,74.2 113.7,74.1 115.1,70.9 116.6,72.1 118,73.6 119.4,65.9 120.8,63.1 122.2,66.9 123.7,67.4 125.1,67.1 126.5,67.3 127.9,69.6 129.3,68.3 130.8,66 132.2,67.3 133.6,71.6 135,70.5 136.5,67.1 137.9,70.8 139.3,72.6 140.7,71.8 142.1,75.8 143.6,67.7 145,75.3 146.4,76.1 147.8,76 149.2,77.5 150.7,72.6 152.1,74.1 153.5,81.7 154.9,78.7 156.4,72.9 157.8,75.4 159.2,76.7 160.6,73.6 162,72.8 163.5,74.6 164.9,70.6 166.3,64.1 167.7,65.3 169.1,68.8 170.6,78 172,72.7 173.4,71.9 174.8,68 176.3,72.2 177.7,80.6 179.1,80.1 180.5,74.1 181.9,78.9 183.4,76.9 184.8,66.4 186.2,70.5 187.6,68.4 189,70.9 190.5,75.9 191.9,77.6 193.3,79.8 194.7,72.7 196.2,73 197.6,73.5 199,67.8 200.4,66.1 201.8,68.6 203.3,57.4 204.7,38.5 206.1,31.4 207.5,46.2 208.9,69.4 210.4,73 211.8,72.5 213.2,75.2 214.6,70.5 216.1,72.8 217.5,74.4 218.9,71.6 220.3,72.8 221.7,70.1 223.2,74.1 224.6,73.3 226,66.6 L226,101Z" fill="#F9BA8F"/><path d="M0,101 L0,78.4 1.4,82.4 2.8,79.3 4.3,79.1 5.7,79 7.1,82.7 8.5,84.4 9.9,80.7 11.4,79.9 12.8,77.9 14.2,77.9 15.6,79.4 17.1,75.4 18.5,81.3 19.9,80.8 21.3,82.4 22.7,76.7 24.2,70.6 25.6,79 27,82.9 28.4,71.8 29.8,72.9 31.3,77.9 32.7,79.8 34.1,83.3 35.5,75.5 37,81 38.4,88 39.8,84.4 41.2,83 42.6,83.4 44.1,81.5 45.5,79.6 46.9,81.3 48.3,79.9 49.7,77.6 51.2,74.6 52.6,75.2 54,85.4 55.4,89.4 56.9,82.1 58.3,83.3 59.7,86.2 61.1,83.5 62.5,76.1 64,76.6 65.4,81.1 66.8,83.1 68.2,86.9 69.6,82.2 71.1,77.4 72.5,77.7 73.9,78.4 75.3,77.5 76.8,82.1 78.2,84.3 79.6,84.7 81,80.4 82.4,79.2 83.9,80.9 85.3,82.6 86.7,85.2 88.1,81.4 89.5,77.7 91,84.1 92.4,83.7 93.8,85.7 95.2,81.3 96.7,75.1 98.1,77.4 99.5,81.8 100.9,78.3 102.3,79.1 103.8,80.9 105.2,83.5 106.6,83.2 108,82.3 109.4,82.4 110.9,79.8 112.3,80.2 113.7,75.6 115.1,79.2 116.6,83.5 118,81.6 119.4,76.6 120.8,75.7 122.2,80 123.7,80.5 125.1,75.6 126.5,75.9 127.9,80.7 129.3,80.3 130.8,76.6 132.2,75.2 133.6,79 135,78.2 136.5,78.6 137.9,80.5 139.3,80.3 140.7,80.8 142.1,85.1 143.6,79.7 145,80.3 146.4,80.8 147.8,86.6 149.2,85.9 150.7,79.7 152.1,80.2 153.5,85.8 154.9,86.4 156.4,79.1 157.8,81.2 159.2,84.1 160.6,79.2 162,81.3 163.5,84.8 164.9,81.7 166.3,76.2 167.7,75 169.1,79.2 170.6,89.3 172,82.2 173.4,83.3 174.8,80.8 176.3,74.5 177.7,84.8 179.1,86.5 180.5,79.8 181.9,84.7 183.4,82.8 184.8,77.3 186.2,75.7 187.6,70.8 189,78.1 190.5,84.8 191.9,87.7 193.3,88.3 194.7,81.7 196.2,82.6 197.6,84.2 199,82 200.4,78.6 201.8,77.4 203.3,67.4 204.7,43.6 206.1,35.9 207.5,57.9 208.9,78 210.4,80.4 211.8,83.5 213.2,86.7 214.6,80.5 216.1,80.2 217.5,86.2 218.9,86.5 220.3,86.3 221.7,80.8 223.2,78.6 224.6,78.3 226,75.2 L226,101Z" fill="#70DBED"/><path d="M0,101 L0,79.4 1.4,83.2 2.8,80.1 4.3,80.2 5.7,79.7 7.1,83.2 8.5,84.8 9.9,81 11.4,80.3 12.8,78.7 14.2,78.6 15.6,80.5 17.1,76.6 18.5,81.8 19.9,81.6 21.3,83.6 22.7,77.6 24.2,71.6 25.6,80.1 27,84.2 28.4,72.7 29.8,73.8 31.3,78.5 32.7,80.5 34.1,84.7 35.5,76.7 37,81.5 38.4,88.5 39.8,85.2 41.2,84 42.6,83.8 44.1,81.6 45.5,79.9 46.9,81.7 48.3,80.5 49.7,78.2 51.2,75.2 52.6,75.9 54,85.9 55.4,90.4 56.9,82.7 58.3,83.5 59.7,86.3 61.1,84.5 62.5,77.2 64,77.1 65.4,81.3 66.8,83.2 68.2,87.2 69.6,82.6 71.1,78 72.5,78.5 73.9,79.2 75.3,78.4 76.8,82.7 78.2,85.3 79.6,85.2 81,80.5 82.4,79.3 83.9,81.2 85.3,83.2 86.7,85.9 88.1,82.5 89.5,79.1 91,84.8 92.4,84.2 93.8,86 95.2,82 96.7,76.2 98.1,77.8 99.5,82 100.9,78.7 102.3,79.7 103.8,81.7 105.2,84.4 106.6,84.2 108,83.1 109.4,82.5 110.9,79.8 112.3,80.6 113.7,75.8 115.1,79.4 116.6,84.1 118,82.1 119.4,77.1 120.8,76.1 122.2,80.7 123.7,81.9 125.1,76.3 126.5,76.1 127.9,81.1 129.3,80.8 130.8,77.3 132.2,75.9 133.6,79.9 135,79.6 136.5,79.5 137.9,81.1 139.3,80.8 140.7,81.5 142.1,86 143.6,81.1 145,81.5 146.4,81.8 147.8,87.6 149.2,86.9 150.7,80.4 152.1,80.6 153.5,86.6 154.9,87.5 156.4,79.9 157.8,81.5 159.2,84.5 160.6,79.6 162,81.7 163.5,85.5 164.9,82.6 166.3,76.7 167.7,75.3 169.1,80.1 170.6,90.7 172,83.5 173.4,84.2 174.8,81.5 176.3,74.9 177.7,85.4 179.1,88 180.5,80.5 181.9,85.1 183.4,83 184.8,77.9 186.2,76.3 187.6,71.5 189,78.7 190.5,85.2 191.9,88.3 193.3,88.9 194.7,82.2 196.2,83 197.6,84.6 199,82.5 200.4,78.9 201.8,77.4 203.3,67.6 204.7,44.2 206.1,36.1 207.5,58.4 208.9,79.3 210.4,80.9 211.8,84.3 213.2,87.6 214.6,81 216.1,80.5 217.5,86.7 218.9,87.8 220.3,86.9 221.7,81.3 223.2,79.1 224.6,79 226,76.2 L226,101Z" fill="#F4D598"/><path d="M0,101 L0,80.2 1.4,83.7 2.8,80.8 4.3,81.5 5.7,80.7 7.1,84.1 8.5,85.8 9.9,81.8 11.4,80.9 12.8,79.6 14.2,79.9 15.6,81.9 17.1,77.8 18.5,82.5 19.9,82.3 21.3,84.4 22.7,78.2 24.2,72.2 25.6,80.7 27,85.1 28.4,73.7 29.8,74.8 31.3,79.6 32.7,81.6 34.1,86.1 35.5,77.9 37,82.3 38.4,89 39.8,85.7 41.2,84.9 42.6,84.9 44.1,82.5 45.5,80.4 46.9,82.1 48.3,80.9 49.7,78.4 51.2,75.7 52.6,77 54,87.1 55.4,91.1 56.9,83 58.3,84.1 59.7,86.8 61.1,84.8 62.5,77.7 64,77.8 65.4,81.9 66.8,83.8 68.2,87.7 69.6,82.9 71.1,78.2 72.5,79.1 73.9,80 75.3,78.8 76.8,83.4 78.2,87.1 79.6,87.3 81,81.8 82.4,79.8 83.9,81.6 85.3,84.1 86.7,86.9 88.1,83.5 89.5,80.3 91,85.4 92.4,84.6 93.8,86.6 95.2,82.3 96.7,76.8 98.1,79 99.5,83.3 100.9,80 102.3,80.4 103.8,81.9 105.2,84.5 106.6,84.6 108,83.6 109.4,83.6 110.9,80.8 112.3,81 113.7,76.2 115.1,80.6 116.6,84.7 118,82.6 119.4,77.4 120.8,76.2 122.2,81 123.7,82.1 125.1,76.5 126.5,76.5 127.9,81.7 129.3,81.4 130.8,77.7 132.2,76.4 133.6,80.4 135,80.7 136.5,80 137.9,81.2 139.3,81.5 140.7,83 142.1,86.7 143.6,82.3 145,82.7 146.4,82 147.8,87.9 149.2,87.4 150.7,80.8 152.1,81.1 153.5,87.1 154.9,88.4 156.4,80.8 157.8,81.9 159.2,85 160.6,80 162,82 163.5,86 164.9,83.5 166.3,77.5 167.7,75.6 169.1,80.6 170.6,91.4 172,84.6 173.4,85.7 174.8,83.2 176.3,76 177.7,85.9 179.1,89.4 180.5,81 181.9,85.2 183.4,83.3 184.8,78.4 186.2,76.6 187.6,71.6 189,79.1 190.5,85.8 191.9,88.7 193.3,89.7 194.7,82.9 196.2,83.4 197.6,84.8 199,83 200.4,79.8 201.8,78.1 203.3,68.4 204.7,44.6 206.1,36.3 207.5,58.9 208.9,79.6 210.4,81.2 211.8,85.2 213.2,88.4 214.6,81.3 216.1,80.7 217.5,87.2 218.9,88.5 220.3,87.5 221.7,82 223.2,80 224.6,80 226,77.5 L226,101Z" fill="#B7DBAB"/><path d="M0,101 L0,92.1 1.4,92.7 2.8,92.3 4.3,93.1 5.7,92.1 7.1,93.7 8.5,93.4 9.9,92.2 11.4,91.2 12.8,91.3 14.2,92 15.6,92.9 17.1,91.5 18.5,91.7 19.9,90.5 21.3,93.2 22.7,91.7 24.2,91.2 25.6,92.7 27,93.2 28.4,90 29.8,92.8 31.3,90.3 32.7,91.4 34.1,91.9 35.5,91 37,92.2 38.4,92.5 39.8,92 41.2,93.1 42.6,92.7 44.1,94.4 45.5,91.4 46.9,93 48.3,94 49.7,91.7 51.2,89.6 52.6,90.4 54,92.5 55.4,94.2 56.9,91.7 58.3,90.6 59.7,91.6 61.1,92.4 62.5,90.8 64,92.7 65.4,91.1 66.8,91.8 68.2,91.6 69.6,91.7 71.1,90.3 72.5,91.2 73.9,92.7 75.3,90.8 76.8,92.3 78.2,90 79.6,92.4 81,91.9 82.4,90.8 83.9,91.8 85.3,90.1 86.7,92.1 88.1,91.7 89.5,90.1 91,92.1 92.4,91.8 93.8,94 95.2,92 96.7,91.2 98.1,92 99.5,94 100.9,92.8 102.3,91 103.8,92.4 105.2,91.6 106.6,91.7 108,92.2 109.4,92.7 110.9,91.9 112.3,93.4 113.7,90.9 115.1,91.2 116.6,90.8 118,92.5 119.4,91 120.8,92.4 122.2,91.3 123.7,91.4 125.1,92.7 126.5,90.1 127.9,90.6 129.3,89.1 130.8,91.8 132.2,92.4 133.6,91.9 135,92.2 136.5,90.3 137.9,90.8 139.3,91 140.7,90.9 142.1,94.2 143.6,89.9 145,93.1 146.4,92.9 147.8,93.1 149.2,92.3 150.7,91.5 152.1,91.9 153.5,93 154.9,93.3 156.4,91.4 157.8,91.8 159.2,91.9 160.6,91.3 162,91.7 163.5,92.6 164.9,92.9 166.3,92.6 167.7,91 169.1,92.3 170.6,93.7 172,91.3 173.4,91.2 174.8,90.6 176.3,92.5 177.7,92.6 179.1,94.1 180.5,92.8 181.9,92.6 183.4,92.8 184.8,92.4 186.2,92 187.6,91.8 189,93.1 190.5,91.4 191.9,92.2 193.3,93.3 194.7,90.4 196.2,92 197.6,92.1 199,90.9 200.4,92.7 201.8,90.7 203.3,80.1 204.7,52.6 206.1,40.1 207.5,62.9 208.9,85.4 210.4,90.7 211.8,92 213.2,92.9 214.6,90.9 216.1,91.6 217.5,91.6 218.9,90.8 220.3,93.3 221.7,92.4 223.2,91.2 224.6,93.4 226,92.4 L226,101Z" fill="#890F02"/><path d="M0,101 L0,92.9 1.4,92.9 2.8,92.9 4.3,93.3 5.7,92.3 7.1,93.8 8.5,93.5 9.9,93 11.4,92 12.8,91.8 14.2,92.8 15.6,93.4 17.1,91.9 18.5,92 19.9,91.2 21.3,93.9 22.7,92.6 24.2,91.5 25.6,93.2 27,93.4 28.4,90.8 29.8,93.5 31.3,91 32.7,91.9 34.1,92.4 35.5,91.5 37,93 38.4,92.9 39.8,92.8 41.2,93.7 42.6,93 44.1,94.5 45.5,91.7 46.9,93.6 48.3,94.2 49.7,92.4 51.2,90.4 52.6,91.1 54,92.6 55.4,94.2 56.9,92.5 58.3,91.5 59.7,92 61.1,93 62.5,91.2 64,93.1 65.4,91.9 66.8,92.2 68.2,92.3 69.6,92.7 71.1,90.9 72.5,92.2 73.9,92.9 75.3,91.6 76.8,92.8 78.2,91.2 79.6,92.9 81,92.2 82.4,91.8 83.9,91.9 85.3,90.8 86.7,92.4 88.1,92.6 89.5,90.7 91,92.9 92.4,92.3 93.8,94.2 95.2,92 96.7,92.2 98.1,92.7 99.5,94.3 100.9,93.3 102.3,91.8 103.8,92.5 105.2,92.7 106.6,92.2 108,92.6 109.4,93.6 110.9,92.5 112.3,93.7 113.7,91.7 115.1,91.9 116.6,91.7 118,92.8 119.4,91.2 120.8,93.1 122.2,91.7 123.7,91.4 125.1,93.1 126.5,90.8 127.9,91 129.3,90 130.8,92.2 132.2,92.9 133.6,92 135,92.5 136.5,90.7 137.9,91.5 139.3,91.6 140.7,91.7 142.1,94.3 143.6,90.5 145,93.6 146.4,93.2 147.8,93.6 149.2,92.6 150.7,92.2 152.1,92.3 153.5,93.6 154.9,93.6 156.4,92.3 157.8,92.4 159.2,92.9 160.6,91.8 162,92.1 163.5,93.2 164.9,93.4 166.3,92.9 167.7,91.5 169.1,92.8 170.6,94.1 172,91.8 173.4,91.5 174.8,91.2 176.3,92.7 177.7,93.6 179.1,94.7 180.5,93.6 181.9,92.8 183.4,93.5 184.8,92.9 186.2,92.8 187.6,92.6 189,93.1 190.5,92.2 191.9,92.3 193.3,94.2 194.7,90.9 196.2,92.3 197.6,92.8 199,91.5 200.4,93 201.8,91 203.3,80.8 204.7,52.8 206.1,40.4 207.5,64 208.9,85.7 210.4,91.4 211.8,92.7 213.2,93.7 214.6,91.7 216.1,91.6 217.5,92 218.9,91.7 220.3,93.6 221.7,93.4 223.2,91.8 224.6,93.7 226,93.1 L226,101Z" fill="#C15C17"/><path d="M0,101 L0,93.8 1.4,93.1 2.8,93.3 4.3,93.5 5.7,93.5 7.1,94.5 8.5,94.1 9.9,94.3 11.4,93 12.8,92.6 14.2,92.9 15.6,94.5 17.1,92.6 18.5,92.6 19.9,92.4 21.3,94.5 22.7,93.4 24.2,92.7 25.6,94.2 27,93.9 28.4,92.2 29.8,94.8 31.3,92.6 32.7,92.7 34.1,93.3 35.5,92.7 37,94 38.4,93.7 39.8,93.6 41.2,94.4 42.6,93.5 44.1,95.1 45.5,92.7 46.9,94.2 48.3,94.4 49.7,93.3 51.2,91.9 52.6,92.5 54,92.7 55.4,94.7 56.9,93.6 58.3,92.4 59.7,92.9 61.1,93.8 62.5,92.1 64,93.5 65.4,93.2 66.8,92.5 68.2,93.1 69.6,94.1 71.1,92.1 72.5,93 73.9,93.7 75.3,92.2 76.8,93.4 78.2,91.9 79.6,94.3 81,92.9 82.4,92.8 83.9,92.9 85.3,91.8 86.7,93.1 88.1,93.7 89.5,91.5 91,93.8 92.4,92.9 93.8,94.3 95.2,93.1 96.7,93.4 98.1,93.3 99.5,95 100.9,94.2 102.3,92.3 103.8,93.6 105.2,93.8 106.6,93.4 108,93.8 109.4,93.7 110.9,93.6 112.3,94.3 113.7,93 115.1,93.1 116.6,92.8 118,93.6 119.4,93.2 120.8,93.9 122.2,92.1 123.7,92.6 125.1,93.4 126.5,92.4 127.9,92.2 129.3,91.3 130.8,93.4 132.2,93.9 133.6,92.3 135,93.1 136.5,91.8 137.9,92.2 139.3,92.6 140.7,92.3 142.1,94.8 143.6,91.4 145,94.7 146.4,94 147.8,94 149.2,92.8 150.7,93.8 152.1,92.7 153.5,94.1 154.9,94.1 156.4,93.5 157.8,93 159.2,94 160.6,92.7 162,92.5 163.5,94 164.9,93.7 166.3,93.7 167.7,92.6 169.1,93.5 170.6,94.5 172,92.4 173.4,92.3 174.8,92.1 176.3,92.7 177.7,93.7 179.1,95.7 180.5,94.4 181.9,93.6 183.4,94.4 184.8,93.7 186.2,93.4 187.6,93.4 189,94.2 190.5,93.2 191.9,93.2 193.3,94.6 194.7,91.8 196.2,92.6 197.6,93.4 199,92.3 200.4,93.8 201.8,92.2 203.3,82 204.7,53.8 206.1,41 207.5,64.8 208.9,86.4 210.4,92.9 211.8,93.7 213.2,94.2 214.6,92.2 216.1,92.9 217.5,92.4 218.9,92.6 220.3,94.5 221.7,94.6 223.2,92.3 224.6,94.6 226,94 L226,101Z" fill="#447EBC"/><path d="M0,101 L0,94.1 1.4,93.8 2.8,93.8 4.3,94.3 5.7,94.3 7.1,95.5 8.5,94.8 9.9,95.2 11.4,93.8 12.8,93.1 14.2,93.9 15.6,95 17.1,93.3 18.5,93.9 19.9,93.3 21.3,95 22.7,94.1 24.2,93.2 25.6,94.9 27,94.2 28.4,92.9 29.8,95.1 31.3,93.4 32.7,93.5 34.1,94.2 35.5,94 37,94.2 38.4,94.1 39.8,94 41.2,94.9 42.6,94.4 44.1,95.7 45.5,93.2 46.9,94.6 48.3,95 49.7,93.8 51.2,92.6 52.6,92.7 54,93.4 55.4,95.5 56.9,94.4 58.3,92.7 59.7,93.8 61.1,94.7 62.5,92.8 64,93.8 65.4,93.5 66.8,93.2 68.2,93.5 69.6,94.5 71.1,93 72.5,94 73.9,94.6 75.3,93.2 76.8,94.3 78.2,92.3 79.6,95.3 81,93.6 82.4,93.6 83.9,94 85.3,92.6 86.7,94.2 88.1,94.4 89.5,92.1 91,94.2 92.4,93.6 93.8,94.5 95.2,93.8 96.7,94 98.1,93.8 99.5,95.1 100.9,94.3 102.3,93.1 103.8,94 105.2,94.9 106.6,93.9 108,94.6 109.4,94 110.9,94.1 112.3,94.9 113.7,93.8 115.1,94.2 116.6,93.8 118,93.9 119.4,93.8 120.8,94.6 122.2,92.6 123.7,93.5 125.1,94.5 126.5,92.9 127.9,93.2 129.3,92.4 130.8,93.8 132.2,95 133.6,93.5 135,93.8 136.5,92.9 137.9,93 139.3,93.6 140.7,93.1 142.1,95.2 143.6,92.1 145,95.3 146.4,94.5 147.8,94.4 149.2,93.2 150.7,94.2 152.1,93.7 153.5,94.3 154.9,94.8 156.4,94 157.8,93.3 159.2,94.9 160.6,93.2 162,93.5 163.5,94.7 164.9,94.5 166.3,94.3 167.7,93.5 169.1,94.5 170.6,95.1 172,93.1 173.4,93.4 174.8,92.6 176.3,93.9 177.7,94.2 179.1,96.2 180.5,94.6 181.9,94.1 183.4,94.6 184.8,94.2 186.2,94.3 187.6,94.1 189,94.7 190.5,93.6 191.9,93.6 193.3,94.9 194.7,92.1 196.2,93.8 197.6,94.1 199,92.8 200.4,94.7 201.8,93.3 203.3,82.5 204.7,54.4 206.1,41.4 207.5,65 208.9,87.4 210.4,94.5 211.8,94.1 213.2,94.5 214.6,93.2 216.1,93.9 217.5,93.2 218.9,93.7 220.3,95.1 221.7,95.4 223.2,93.2 224.6,95.2 226,94.8 L226,101Z" fill="#CCA300"/><path d="M0,101 L0,95.1 1.4,95.5 2.8,94.3 4.3,95.1 5.7,95.8 7.1,96.3 8.5,95.7 9.9,95.5 11.4,95 12.8,94.2 14.2,95 15.6,95.8 17.1,94.2 18.5,94.7 19.9,94.4 21.3,95.8 22.7,95.2 24.2,93.6 25.6,95.6 27,94.3 28.4,93.7 29.8,96.1 31.3,94.1 32.7,95.1 34.1,94.7 35.5,94.7 37,94.7 38.4,94.7 39.8,94.6 41.2,95.2 42.6,94.9 44.1,97.2 45.5,94 46.9,95.7 48.3,95.3 49.7,94.6 51.2,93.6 52.6,93.5 54,94 55.4,96.3 56.9,95.2 58.3,93.8 59.7,95 61.1,95.1 62.5,93 64,94.6 65.4,94.3 66.8,94.3 68.2,94.7 69.6,95 71.1,94.5 72.5,94.9 73.9,94.8 75.3,94.4 76.8,95.2 78.2,93.2 79.6,95.5 81,94.3 82.4,94.5 83.9,94.7 85.3,93.6 86.7,95.5 88.1,95.8 89.5,93.3 91,95 92.4,95 93.8,95.4 95.2,94.9 96.7,94.7 98.1,94.1 99.5,95.1 100.9,95.2 102.3,93.7 103.8,94.9 105.2,96 106.6,94.2 108,94.8 109.4,94.9 110.9,95 112.3,95.6 113.7,94.4 115.1,94.5 116.6,94.6 118,94.5 119.4,94.8 120.8,95.7 122.2,93.2 123.7,94.4 125.1,95.3 126.5,94 127.9,94.5 129.3,93.4 130.8,94.8 132.2,96.1 133.6,94.1 135,94.6 136.5,93.9 137.9,94.2 139.3,94.8 140.7,94.7 142.1,95.7 143.6,92.9 145,95.5 146.4,95.2 147.8,94.6 149.2,94.4 150.7,95.2 152.1,94.1 153.5,95.2 154.9,95.9 156.4,95.4 157.8,94.4 159.2,95.7 160.6,94 162,94.5 163.5,95.6 164.9,95.1 166.3,94.7 167.7,94.6 169.1,95 170.6,95.8 172,94.2 173.4,94.2 174.8,93.8 176.3,94.3 177.7,95.3 179.1,96.6 180.5,94.9 181.9,94.5 183.4,95.4 184.8,94.8 186.2,94.6 187.6,95.3 189,95.2 190.5,94.3 191.9,94.5 193.3,95.5 194.7,93.1 196.2,94.8 197.6,94.9 199,93.9 200.4,95.3 201.8,93.8 203.3,83.3 204.7,54.9 206.1,42.3 207.5,65.8 208.9,88.1 210.4,95.5 211.8,95.1 213.2,94.5 214.6,93.9 216.1,94.7 217.5,94.2 218.9,94.3 220.3,95.5 221.7,96.2 223.2,94.2 224.6,95.4 226,95.1 L226,101Z" fill="#508642"/><path d="M0,101 L0,95.9 1.4,96.4 2.8,95.2 4.3,96.1 5.7,96.2 7.1,97.2 8.5,96.7 9.9,96.2 11.4,95.9 12.8,94.7 14.2,96.1 15.6,96.4 17.1,94.9 18.5,95.8 19.9,95.5 21.3,96.4 22.7,95.8 24.2,94.7 25.6,95.7 27,95.5 28.4,94.9 29.8,96.6 31.3,95.3 32.7,96 34.1,95.6 35.5,94.7 37,95.4 38.4,95.5 39.8,95.3 41.2,95.9 42.6,95.6 44.1,97.2 45.5,94.7 46.9,96.3 48.3,96.1 49.7,95.2 51.2,94.4 52.6,94.4 54,95.4 55.4,96.8 56.9,96.6 58.3,94.5 59.7,95.5 61.1,95.4 62.5,94 64,94.9 65.4,95.4 66.8,95.2 68.2,95.3 69.6,95.6 71.1,95.5 72.5,95.7 73.9,95.8 75.3,95.2 76.8,95.9 78.2,94.2 79.6,95.9 81,95.4 82.4,95.3 83.9,95.2 85.3,94.1 86.7,96.2 88.1,96 89.5,94.6 91,96.1 92.4,95.4 93.8,96.2 95.2,96.2 96.7,95.7 98.1,94.6 99.5,95.2 100.9,95.4 102.3,94.9 103.8,95.8 105.2,96.4 106.6,95.2 108,95.5 109.4,95.4 110.9,95.6 112.3,96.3 113.7,95.8 115.1,95 116.6,95.2 118,95.7 119.4,96.1 120.8,96.2 122.2,94.7 123.7,95.6 125.1,95.7 126.5,95.4 127.9,94.8 129.3,94.5 130.8,95.3 132.2,96.3 133.6,95.2 135,95.6 136.5,94.6 137.9,95.1 139.3,95.6 140.7,95.4 142.1,96.1 143.6,93.9 145,96.4 146.4,95.9 147.8,95.3 149.2,95.2 150.7,95.5 152.1,94.8 153.5,95.7 154.9,97.1 156.4,95.8 157.8,95 159.2,96.5 160.6,95.1 162,95.5 163.5,96.4 164.9,96.6 166.3,95.5 167.7,95.6 169.1,96.8 170.6,96.3 172,95.3 173.4,95.1 174.8,94.2 176.3,94.9 177.7,96.4 179.1,96.9 180.5,95.6 181.9,95.6 183.4,96.1 184.8,95.7 186.2,95.2 187.6,95.9 189,95.8 190.5,95 191.9,95.6 193.3,96.4 194.7,94.5 196.2,95.8 197.6,95.8 199,95.5 200.4,96.1 201.8,94.3 203.3,84.2 204.7,55.3 206.1,43.3 207.5,67 208.9,89.1 210.4,96.1 211.8,95.9 213.2,95.5 214.6,95.1 216.1,95.4 217.5,94.9 218.9,95.5 220.3,96.4 221.7,97.2 223.2,95.2 224.6,95.9 226,95.9 L226,101Z" fill="#705DA0"/><path d="M0,101 L0,96.7 1.4,97.5 2.8,96.1 4.3,96.3 5.7,96.7 7.1,97.3 8.5,97.4 9.9,96.8 11.4,96.8 12.8,96.2 14.2,96.7 15.6,97.2 17.1,95.6 18.5,95.9 19.9,96.1 21.3,97 22.7,96.7 24.2,95.3 25.6,96 27,96.5 28.4,95.7 29.8,97.1 31.3,95.8 32.7,96.7 34.1,96.7 35.5,96 37,95.7 38.4,96.7 39.8,96.1 41.2,96.8 42.6,96.8 44.1,97.7 45.5,95.8 46.9,96.7 48.3,96.8 49.7,95.8 51.2,95.7 52.6,95.8 54,96.5 55.4,97.8 56.9,97.2 58.3,95.9 59.7,96.8 61.1,96.5 62.5,94.8 64,95.6 65.4,96.2 66.8,96.5 68.2,95.8 69.6,96.5 71.1,96.8 72.5,96.8 73.9,97.2 75.3,96.1 76.8,96.8 78.2,95.4 79.6,97 81,96.3 82.4,96 83.9,95.5 85.3,95.4 86.7,96.8 88.1,96.5 89.5,95.7 91,96.7 92.4,95.8 93.8,96.8 95.2,97 96.7,96.6 98.1,95.6 99.5,96.4 100.9,96.2 102.3,95.8 103.8,96.6 105.2,97 106.6,96.2 108,96.4 109.4,96.9 110.9,96.6 112.3,96.9 113.7,96.8 115.1,95.7 116.6,96.6 118,96 119.4,96.7 120.8,96.8 122.2,95.6 123.7,96.4 125.1,95.9 126.5,95.6 127.9,95.7 129.3,95.8 130.8,96.6 132.2,97 133.6,96.2 135,96.1 136.5,95 137.9,96.3 139.3,96.6 140.7,96.1 142.1,96.8 143.6,95.1 145,97.3 146.4,96.6 147.8,96.2 149.2,96 150.7,96.2 152.1,95.4 153.5,96.8 154.9,97.8 156.4,96.3 157.8,96.5 159.2,97.8 160.6,96.1 162,96.3 163.5,97.3 164.9,97 166.3,96.3 167.7,96.5 169.1,97.5 170.6,97.3 172,95.9 173.4,96 174.8,94.5 176.3,95.7 177.7,97 179.1,97.3 180.5,96.3 181.9,96.5 183.4,96.8 184.8,96.8 186.2,95.8 187.6,97 189,96.9 190.5,95.7 191.9,96.9 193.3,96.7 194.7,95.5 196.2,96.7 197.6,96.8 199,95.8 200.4,96.5 201.8,94.9 203.3,85 204.7,56.2 206.1,44.1 207.5,67.8 208.9,89.7 210.4,96.5 211.8,96.5 213.2,96.5 214.6,96.3 216.1,96.1 217.5,96.1 218.9,95.9 220.3,97.4 221.7,97.6 223.2,96.1 224.6,96.4 226,96.3 L226,101Z" fill="#BA43A9"/><path d="M0,101 L0,97.8 1.4,97.8 2.8,96.5 4.3,97.1 5.7,97.5 7.1,98 8.5,97.6 9.9,97.2 11.4,97.8 12.8,97.2 14.2,97.2 15.6,98.1 17.1,96.5 18.5,97 19.9,96.6 21.3,98.3 22.7,97.4 24.2,96.6 25.6,97.2 27,97 28.4,96.4 29.8,98 31.3,97 32.7,97.1 34.1,97.4 35.5,97 37,96.7 38.4,97.1 39.8,96.7 41.2,97.8 42.6,97.3 44.1,98.6 45.5,96.9 46.9,97.5 48.3,96.8 49.7,97 51.2,96.9 52.6,97 54,97.6 55.4,98.1 56.9,98.5 58.3,96.9 59.7,97.9 61.1,97.3 62.5,95.6 64,96.3 65.4,97.5 66.8,97.4 68.2,96.5 69.6,96.9 71.1,97.8 72.5,97.6 73.9,98.1 75.3,97.3 76.8,97.9 78.2,96.3 79.6,97.9 81,97.1 82.4,97 83.9,96.6 85.3,96.3 86.7,97.4 88.1,97.6 89.5,96.8 91,97.1 92.4,96.7 93.8,97.5 95.2,97.1 96.7,97.4 98.1,96.7 99.5,97 100.9,96.8 102.3,97 103.8,97 105.2,97.5 106.6,96.9 108,97.5 109.4,97.9 110.9,97.3 112.3,97.6 113.7,97.7 115.1,96.4 116.6,97.1 118,96.4 119.4,97.8 120.8,97.5 122.2,97.4 123.7,97.4 125.1,96.5 126.5,96.4 127.9,96.6 129.3,96.7 130.8,97.5 132.2,98 133.6,97 135,97.1 136.5,96.5 137.9,97 139.3,97.3 140.7,97.2 142.1,98.1 143.6,96.2 145,98.5 146.4,97.4 147.8,96.9 149.2,97 150.7,97.3 152.1,96.8 153.5,98.1 154.9,98 156.4,97.4 157.8,97.1 159.2,97.9 160.6,97 162,97 163.5,98 164.9,97.4 166.3,96.8 167.7,97.2 169.1,97.8 170.6,98 172,96.7 173.4,96.8 174.8,95.4 176.3,96.5 177.7,97.4 179.1,97.7 180.5,97.2 181.9,97.6 183.4,97.6 184.8,97.4 186.2,96.7 187.6,97.2 189,97.4 190.5,96.3 191.9,97.6 193.3,97.4 194.7,96.2 196.2,97.1 197.6,97.5 199,96.7 200.4,96.7 201.8,95.3 203.3,85.7 204.7,57.5 206.1,45.1 207.5,69.1 208.9,90.9 210.4,97.2 211.8,97.3 213.2,96.9 214.6,97.5 216.1,97.1 217.5,97.1 218.9,96.9 220.3,98.4 221.7,98.5 223.2,97 224.6,97.6 226,96.9 L226,101Z" fill="#E24D42"/><path d="M0,101 L0,98.4 1.4,98.2 2.8,97.5 4.3,98.3 5.7,98.5 7.1,98.8 8.5,98.5 9.9,97.4 11.4,98.5 12.8,98.4 14.2,98.1 15.6,98.6 17.1,97.6 18.5,97.8 19.9,97.7 21.3,98.6 22.7,98 24.2,97.5 25.6,98.1 27,98 28.4,97.2 29.8,98.8 31.3,98 32.7,98.2 34.1,97.7 35.5,97.7 37,97.4 38.4,98 39.8,97.8 41.2,98.2 42.6,98.2 44.1,98.8 45.5,97.5 46.9,98.1 48.3,97.6 49.7,97.6 51.2,97.6 52.6,97.7 54,98.3 55.4,98.2 56.9,98.8 58.3,97.5 59.7,98.9 61.1,98.4 62.5,97.3 64,97.1 65.4,98.1 66.8,98.2 68.2,97.6 69.6,97.7 71.1,98.3 72.5,98.4 73.9,98.9 75.3,97.6 76.8,98.3 78.2,97.5 79.6,97.9 81,98 82.4,97.7 83.9,97.8 85.3,97.3 86.7,97.9 88.1,98.9 89.5,97.4 91,98.6 92.4,98.1 93.8,98.3 95.2,98.2 96.7,98.2 98.1,97.2 99.5,98.1 100.9,97.7 102.3,98.1 103.8,98.2 105.2,98.7 106.6,98 108,98.2 109.4,98.7 110.9,98.2 112.3,98.4 113.7,98.4 115.1,97.8 116.6,98.1 118,97.8 119.4,98.3 120.8,98.3 122.2,98 123.7,98.1 125.1,97.2 126.5,97.2 127.9,97.3 129.3,98.1 130.8,98.6 132.2,98.5 133.6,97.6 135,98.2 136.5,97.5 137.9,97.6 139.3,98.4 140.7,97.5 142.1,98.7 143.6,97.5 145,98.6 146.4,98.1 147.8,98.1 149.2,97.8 150.7,97.8 152.1,97.3 153.5,98.2 154.9,98.4 156.4,98.2 157.8,97.7 159.2,98.7 160.6,97.8 162,97.9 163.5,98.2 164.9,98.1 166.3,97.5 167.7,97.9 169.1,98.3 170.6,98.1 172,97.7 173.4,97.9 174.8,97 176.3,97.6 177.7,98.8 179.1,98.7 180.5,97.9 181.9,98.6 183.4,98.1 184.8,98.3 186.2,97.4 187.6,97.7 189,98.6 190.5,97.5 191.9,98.6 193.3,98.5 194.7,97.6 196.2,97.8 197.6,97.8 199,97.2 200.4,97.7 201.8,96.1 203.3,86 204.7,58.7 206.1,46 207.5,70.4 208.9,92.1 210.4,97.8 211.8,98.2 213.2,97.5 214.6,98 216.1,97.8 217.5,98 218.9,98.2 220.3,98.9 221.7,99.5 223.2,97.8 224.6,98.4 226,98.1 L226,101Z" fill="#EF843C"/><path d="M0,101 L0,98.6 1.4,98.7 2.8,98.2 4.3,98.9 5.7,99 7.1,99.1 8.5,99.2 9.9,97.9 11.4,99.1 12.8,98.9 14.2,98.6 15.6,99 17.1,98 18.5,98.1 19.9,98.3 21.3,99.1 22.7,98.8 24.2,97.6 25.6,98.8 27,98.5 28.4,97.7 29.8,99.1 31.3,98.3 32.7,98.4 34.1,98.4 35.5,98.2 37,98.1 38.4,98.7 39.8,98.2 41.2,98.7 42.6,98.7 44.1,99.6 45.5,98 46.9,98.7 48.3,98.2 49.7,98.1 51.2,98.5 52.6,98.1 54,99.1 55.4,99.1 56.9,99.1 58.3,98.2 59.7,99.5 61.1,99.1 62.5,97.6 64,97.7 65.4,98.4 66.8,98.7 68.2,98.4 69.6,98.2 71.1,98.4 72.5,98.7 73.9,99.2 75.3,98.3 76.8,98.7 78.2,97.7 79.6,98.7 81,98.6 82.4,98.4 83.9,98.2 85.3,98.1 86.7,98.4 88.1,99 89.5,97.7 91,99 92.4,98.6 93.8,99 95.2,98.6 96.7,98.7 98.1,98.2 99.5,98.7 100.9,98.2 102.3,98.6 103.8,98.4 105.2,99.4 106.6,98.7 108,98.7 109.4,99.5 110.9,98.7 112.3,99 113.7,98.8 115.1,98.2 116.6,98.3 118,98.4 119.4,98.8 120.8,98.8 122.2,98.4 123.7,98.4 125.1,97.6 126.5,97.8 127.9,97.9 129.3,98.5 130.8,99.2 132.2,99.4 133.6,98.1 135,99.1 136.5,98.1 137.9,98.4 139.3,98.9 140.7,98.3 142.1,99 143.6,98.1 145,99.1 146.4,98.3 147.8,98.3 149.2,98.5 150.7,98.4 152.1,98.1 153.5,98.8 154.9,98.4 156.4,98.8 157.8,98.1 159.2,99.1 160.6,98.2 162,98.3 163.5,98.6 164.9,98.9 166.3,98.1 167.7,98.3 169.1,98.8 170.6,98.9 172,98.4 173.4,98.4 174.8,97.3 176.3,98 177.7,99.1 179.1,98.9 180.5,98.6 181.9,99.1 183.4,98.5 184.8,98.7 186.2,98.1 187.6,98.6 189,99.2 190.5,98.2 191.9,98.9 193.3,99.1 194.7,98.2 196.2,98.7 197.6,98.4 199,97.5 200.4,98.2 201.8,96.6 203.3,86.9 204.7,59.4 206.1,46.6 207.5,71 208.9,92.8 210.4,98.3 211.8,98.5 213.2,97.6 214.6,98.8 216.1,98.5 217.5,98.7 218.9,98.7 220.3,99.8 221.7,99.9 223.2,98.6 224.6,98.7 226,98.5 L226,101Z" fill="#6ED0E0"/><path d="M0,101 L0,99.3 1.4,99.3 2.8,98.8 4.3,99.5 5.7,99.4 7.1,99.4 8.5,99.4 9.9,98.5 11.4,99.5 12.8,99.3 14.2,99.2 15.6,99.4 17.1,98.8 18.5,99 19.9,98.9 21.3,99.5 22.7,99 24.2,98.6 25.6,99.5 27,98.8 28.4,98.5 29.8,99.3 31.3,98.8 32.7,98.9 34.1,98.8 35.5,98.5 37,99.1 38.4,99.2 39.8,98.8 41.2,99.2 42.6,98.9 44.1,100 45.5,98.6 46.9,99.4 48.3,98.7 49.7,98.7 51.2,99 52.6,98.7 54,99.1 55.4,99.7 56.9,99.5 58.3,98.6 59.7,99.5 61.1,99.4 62.5,98.3 64,98.7 65.4,98.8 66.8,99.1 68.2,99 69.6,98.8 71.1,98.8 72.5,99.2 73.9,99.7 75.3,99 76.8,99.4 78.2,98.6 79.6,99.4 81,99.3 82.4,98.9 83.9,98.9 85.3,98.4 86.7,99.4 88.1,99.6 89.5,98.6 91,99.3 92.4,99.3 93.8,99.6 95.2,99.1 96.7,99.1 98.1,98.6 99.5,99.6 100.9,98.9 102.3,99.2 103.8,99 105.2,99.8 106.6,98.9 108,98.8 109.4,99.9 110.9,99.2 112.3,99.3 113.7,99.5 115.1,98.9 116.6,98.9 118,98.6 119.4,99.3 120.8,99.3 122.2,98.6 123.7,98.5 125.1,98.6 126.5,98.5 127.9,98.4 129.3,99.4 130.8,99.9 132.2,100 133.6,98.7 135,99.8 136.5,99 137.9,98.9 139.3,99.4 140.7,98.9 142.1,99.1 143.6,98.7 145,99.5 146.4,98.8 147.8,98.8 149.2,99.2 150.7,99 152.1,98.7 153.5,99.3 154.9,99.1 156.4,99.2 157.8,98.8 159.2,99.3 160.6,98.8 162,98.9 163.5,98.9 164.9,99.3 166.3,98.9 167.7,98.8 169.1,99.1 170.6,98.9 172,99 173.4,99 174.8,97.9 176.3,99 177.7,99.6 179.1,99.5 180.5,99 181.9,99.6 183.4,99 184.8,99.4 186.2,98.8 187.6,99 189,99.7 190.5,99.1 191.9,99.2 193.3,99.8 194.7,99 196.2,99.3 197.6,98.9 199,98.3 200.4,98.8 201.8,97.1 203.3,87.4 204.7,60.2 206.1,47.3 207.5,71.9 208.9,93.3 210.4,98.7 211.8,99 213.2,98.2 214.6,99.2 216.1,99.2 217.5,99.3 218.9,99 220.3,99.9 221.7,100.1 223.2,99.4 224.6,99.2 226,99.1 L226,101Z" fill="#EAB839"/><path d="M0,101 L0,99.4 1.4,99.6 2.8,99.2 4.3,99.8 5.7,99.5 7.1,99.7 8.5,99.8 9.9,99.1 11.4,99.6 12.8,99.8 14.2,99.5 15.6,99.8 17.1,99.3 18.5,99.2 19.9,99.1 21.3,99.9 22.7,99.5 24.2,98.9 25.6,99.6 27,99.1 28.4,99 29.8,100 31.3,99.1 32.7,99.2 34.1,99.2 35.5,98.9 37,99.3 38.4,99.5 39.8,99.3 41.2,99.6 42.6,99.3 44.1,100.2 45.5,98.9 46.9,99.7 48.3,99.3 49.7,99.4 51.2,99.5 52.6,99.5 54,99.5 55.4,100.1 56.9,99.7 58.3,99.1 59.7,99.8 61.1,99.9 62.5,98.8 64,99.1 65.4,99 66.8,99.5 68.2,99.4 69.6,99.2 71.1,99.3 72.5,99.5 73.9,100 75.3,99.7 76.8,100 78.2,99 79.6,99.6 81,99.6 82.4,99.4 83.9,99.5 85.3,99.3 86.7,99.7 88.1,100 89.5,98.9 91,99.7 92.4,99.7 93.8,99.8 95.2,99.7 96.7,99.5 98.1,99.2 99.5,99.9 100.9,99.4 102.3,99.7 103.8,99.1 105.2,99.9 106.6,99.5 108,99.3 109.4,100 110.9,99.5 112.3,99.5 113.7,99.8 115.1,99.6 116.6,99.2 118,99.4 119.4,99.7 120.8,99.6 122.2,99.4 123.7,99.1 125.1,99.2 126.5,99.3 127.9,99 129.3,100 130.8,100 132.2,100.3 133.6,99.2 135,100.3 136.5,99.5 137.9,99.3 139.3,100 140.7,99.7 142.1,99.6 143.6,99.3 145,100 146.4,99.4 147.8,99.3 149.2,99.5 150.7,99.5 152.1,99.1 153.5,99.4 154.9,99.5 156.4,99.6 157.8,99.3 159.2,99.6 160.6,99.3 162,99.5 163.5,99.1 164.9,99.8 166.3,99.5 167.7,99.4 169.1,99.4 170.6,99.1 172,99.4 173.4,99.2 174.8,98.9 176.3,99.2 177.7,99.9 179.1,100 180.5,99.3 181.9,99.6 183.4,99.4 184.8,99.6 186.2,99.1 187.6,99.1 189,99.9 190.5,99.4 191.9,99.6 193.3,100 194.7,99.3 196.2,99.6 197.6,99.4 199,98.7 200.4,99 201.8,97.7 203.3,87.6 204.7,60.7 206.1,47.5 207.5,72.3 208.9,93.7 210.4,99.1 211.8,99.5 213.2,98.7 214.6,99.6 216.1,99.6 217.5,99.4 218.9,99.4 220.3,99.9 221.7,100.1 223.2,99.7 224.6,99.6 226,99.8 L226,101Z" fill="#1F78C1"/><path d="M0,101 L0,101 1.4,101 2.8,101 4.3,101 5.7,101 7.1,101 8.5,101 9.9,101 11.4,101 12.8,101 14.2,101 15.6,101 17.1,101 18.5,101 19.9,101 21.3,101 22.7,101 24.2,101 25.6,101 27,101 28.4,101 29.8,101 31.3,101 32.7,101 34.1,101 35.5,101 37,101 38.4,101 39.8,101 41.2,101 42.6,101 44.1,101 45.5,101 46.9,101 48.3,101 49.7,101 51.2,101 52.6,101 54,101 55.4,101 56.9,101 58.3,101 59.7,101 61.1,101 62.5,101 64,101 65.4,101 66.8,101 68.2,101 69.6,101 71.1,101 72.5,101 73.9,101 75.3,101 76.8,101 78.2,101 79.6,101 81,101 82.4,101 83.9,101 85.3,101 86.7,101 88.1,101 89.5,101 91,101 92.4,101 93.8,101 95.2,101 96.7,101 98.1,101 99.5,101 100.9,101 102.3,101 103.8,101 105.2,101 106.6,101 108,101 109.4,101 110.9,101 112.3,101 113.7,101 115.1,101 116.6,101 118,101 119.4,101 120.8,101 122.2,101 123.7,101 125.1,101 126.5,101 127.9,101 129.3,101 130.8,101 132.2,101 133.6,101 135,101 136.5,101 137.9,101 139.3,101 140.7,101 142.1,101 143.6,101 145,101 146.4,101 147.8,101 149.2,101 150.7,101 152.1,101 153.5,101 154.9,101 156.4,101 157.8,101 159.2,101 160.6,101 162,101 163.5,101 164.9,101 166.3,101 167.7,101 169.1,101 170.6,101 172,101 173.4,101 174.8,101 176.3,101 177.7,101 179.1,101 180.5,101 181.9,101 183.4,101 184.8,101 186.2,101 187.6,101 189,101 190.5,101 191.9,101 193.3,101 194.7,101 196.2,101 197.6,101 199,101 200.4,100.9 201.8,99.5 203.3,89 204.7,61.7 206.1,49.4 207.5,73.7 208.9,95.2 210.4,100.5 211.8,101 213.2,101 214.6,101 216.1,101 217.5,101 218.9,101 220.3,101 221.7,101 223.2,101 224.6,101 226,101 L226,101Z" fill="#7EB26D"/>
</svg>
<div class="yl" style="right:934px;top:891px">0 B/s</div>
<div class="yl" style="right:934px;top:857.3px">50 MB/s</div>
<div class="yl" style="right:934px;top:823.7px">100 MB/s</div>
<div class="yl" style="right:934px;top:790px">150 MB/s</div>
<div class="xl" style="left:462.6px;top:906px">20:30</div>
<div class="xl" style="left:500.4px;top:906px">20:40</div>
<div class="xl" style="left:538.3px;top:906px">20:50</div>
<div class="xl" style="left:576.1px;top:906px">21:00</div>
<div class="xl" style="left:614px;top:906px">21:10</div>
<div class="xl" style="left:651.8px;top:906px">21:20</div>
<div class="panel" style="left:733px;top:746px;width:322px;height:258px"></div><div class="ptitle" style="left:733px;top:752.5px;width:322px">Inflight requests (per pod)</div>
<svg style="position:absolute;left:763px;top:796px" width="265" height="149" viewBox="0 -1 265 149">
<line x1="0" x2="265" y1="147.5" y2="147.5" stroke="rgba(36,41,46,0.12)" stroke-width="1"/>
<line x1="0" x2="265" y1="117.5" y2="117.5" stroke="rgba(36,41,46,0.12)" stroke-width="1"/>
<line x1="0" x2="265" y1="88.5" y2="88.5" stroke="rgba(36,41,46,0.12)" stroke-width="1"/>
<line x1="0" x2="265" y1="58.5" y2="58.5" stroke="rgba(36,41,46,0.12)" stroke-width="1"/>
<line x1="0" x2="265" y1="29.5" y2="29.5" stroke="rgba(36,41,46,0.12)" stroke-width="1"/>
<line x1="0" x2="265" y1="0.5" y2="0.5" stroke="rgba(36,41,46,0.12)" stroke-width="1"/>
<line x1="7.5" x2="7.5" y1="0" y2="147" stroke="rgba(36,41,46,0.12)" stroke-width="1"/>
<line x1="51.5" x2="51.5" y1="0" y2="147" stroke="rgba(36,41,46,0.12)" stroke-width="1"/>
<line x1="95.5" x2="95.5" y1="0" y2="147" stroke="rgba(36,41,46,0.12)" stroke-width="1"/>
<line x1="140.5" x2="140.5" y1="0" y2="147" stroke="rgba(36,41,46,0.12)" stroke-width="1"/>
<line x1="184.5" x2="184.5" y1="0" y2="147" stroke="rgba(36,41,46,0.12)" stroke-width="1"/>
<line x1="229.5" x2="229.5" y1="0" y2="147" stroke="rgba(36,41,46,0.12)" stroke-width="1"/>
<polyline points="0,142.5 2.2,142.6 4.5,142.8 6.7,142.6 8.9,142.8 11.1,142.6 13.4,142.4 15.6,142.8 17.8,142.8 20,142.7 22.3,142.8 24.5,142.7 26.7,142.7 28.9,142.6 31.2,142.6 33.4,142.5 35.6,142.5 37.9,142.5 40.1,142.5 42.3,142.7 44.5,142.8 46.8,142.7 49,142.4 51.2,142.1 53.4,142.1 55.7,142.4 57.9,142.6 60.1,142.6 62.4,142.5 64.6,142.4 66.8,142.2 69,142.6 71.3,142.8 73.5,142.5 75.7,142.3 77.9,142.6 80.2,142.4 82.4,142.5 84.6,142.7 86.8,142.7 89.1,142.9 91.3,142.8 93.5,142.6 95.8,142.9 98,142.8 100.2,142.6 102.4,142.5 104.7,142.6 106.9,142.8 109.1,142.8 111.3,142.8 113.6,142.8 115.8,142.5 118,142.5 120.3,142.3 122.5,142.2 124.7,142.4 126.9,142.5 129.2,142.6 131.4,142.5 133.6,142.3 135.8,142.6 138.1,142.6 140.3,142.4 142.5,142.4 144.7,142.4 147,142.7 149.2,142.9 151.4,142.5 153.7,142.3 155.9,142.8 158.1,142.7 160.3,142.6 162.6,142.9 164.8,143.2 167,143.2 169.2,142.8 171.5,142.6 173.7,142.6 175.9,142.6 178.2,142.5 180.4,142.8 182.6,142.9 184.8,142.8 187.1,142.9 189.3,142.9 191.5,142.7 193.7,142.6 196,142.8 198.2,142.9 200.4,142.4 202.6,142.4 204.9,143 207.1,142.8 209.3,142.5 211.6,142.4 213.8,142.7 216,142.6 218.2,142.6 220.5,142.9 222.7,142.8 224.9,142.7 227.1,142.5 229.4,142.4 231.6,142.5 233.8,142.5 236.1,142.4 238.3,142.4 240.5,142.7 242.7,143 245,142.7 247.2,142.7 249.4,142.8 251.6,142.6 253.9,142.7 256.1,142.7 258.3,142.5 260.5,142.8 262.8,142.8 265,142.1" fill="none" stroke="#7EB26D" stroke-width="1" stroke-linejoin="round"/><polyline points="0,29.4 2.2,29.4 4.5,29.4 6.7,29.4 8.9,29.4 11.1,29.4 13.4,29.4 15.6,29.4 17.8,29.4 20,29.4 22.3,29.4 24.5,29.4 26.7,29.4 28.9,29.4 31.2,29.4 33.4,29.4 35.6,29.4 37.9,29.4 40.1,29.4 42.3,29.4 44.5,29.4 46.8,29.4 49,29.4 51.2,29.4 53.4,29.4 55.7,29.4 57.9,29.4 60.1,29.4 62.4,29.4 64.6,29.4 66.8,29.4 69,29.4 71.3,29.4 73.5,29.4 75.7,29.4 77.9,29.4 80.2,29.4 82.4,29.4 84.6,29.4 86.8,29.4 89.1,29.4 91.3,29.4 93.5,29.4 95.8,29.4 98,29.4 100.2,29.4 102.4,29.4 104.7,29.4 106.9,29.4 109.1,29.4 111.3,29.4 113.6,29.4 115.8,29.4 118,29.4 120.3,29.4 122.5,29.4 124.7,29.4 126.9,29.4 129.2,29.4 131.4,29.4 133.6,29.4 135.8,29.4 138.1,29.4 140.3,29.4 142.5,29.4 144.7,29.4 147,29.4 149.2,29.4 151.4,29.4 153.7,29.4 155.9,29.4 158.1,29.4 160.3,29.4 162.6,29.4 164.8,29.4 167,29.4 169.2,29.4 171.5,29.4 173.7,29.4 175.9,29.4 178.2,29.4 180.4,29.4 182.6,29.4 184.8,29.4 187.1,29.4 189.3,29.4 191.5,29.4 193.7,29.4 196,29.4 198.2,29.4 200.4,29.4 202.6,29.4 204.9,29.4 207.1,29.4 209.3,29.4 211.6,29.4 213.8,29.4 216,29.4 218.2,29.4 220.5,29.4 222.7,29.4 224.9,29.4 227.1,29.4 229.4,29.4 231.6,29.4 233.8,29.4 236.1,29.4 238.3,29.4 240.5,29.4 242.7,29.4 245,29.4 247.2,29.4 249.4,29.4 251.6,29.4 253.9,29.4 256.1,29.4 258.3,29.4 260.5,29.4 262.8,29.4 265,29.4" fill="none" stroke="#EAB839" stroke-width="1" stroke-linejoin="round"/>
</svg>
<div class="yl" style="right:643px;top:937px">0</div>
<div class="yl" style="right:643px;top:907.6px">10</div>
<div class="yl" style="right:643px;top:878.2px">20</div>
<div class="yl" style="right:643px;top:848.8px">30</div>
<div class="yl" style="right:643px;top:819.4px">40</div>
<div class="yl" style="right:643px;top:790px">50</div>
<div class="xl" style="left:754.2px;top:952px">20:30</div>
<div class="xl" style="left:798.6px;top:952px">20:40</div>
<div class="xl" style="left:842.9px;top:952px">20:50</div>
<div class="xl" style="left:887.3px;top:952px">21:00</div>
<div class="xl" style="left:931.6px;top:952px">21:10</div>
<div class="xl" style="left:976px;top:952px">21:20</div>
<div class="panel" style="left:1062px;top:746px;width:322px;height:258px"></div><div class="ptitle" style="left:1062px;top:752.5px;width:322px">TCP connections (per pod)</div>
<svg style="position:absolute;left:1092px;top:796px" width="265" height="149" viewBox="0 -1 265 149">
<line x1="0" x2="265" y1="147.5" y2="147.5" stroke="rgba(36,41,46,0.12)" stroke-width="1"/>
<line x1="0" x2="265" y1="110.5" y2="110.5" stroke="rgba(36,41,46,0.12)" stroke-width="1"/>
<line x1="0" x2="265" y1="73.5" y2="73.5" stroke="rgba(36,41,46,0.12)" stroke-width="1"/>
<line x1="0" x2="265" y1="36.5" y2="36.5" stroke="rgba(36,41,46,0.12)" stroke-width="1"/>
<line x1="0" x2="265" y1="0.5" y2="0.5" stroke="rgba(36,41,46,0.12)" stroke-width="1"/>
<line x1="7.5" x2="7.5" y1="0" y2="147" stroke="rgba(36,41,46,0.12)" stroke-width="1"/>
<line x1="51.5" x2="51.5" y1="0" y2="147" stroke="rgba(36,41,46,0.12)" stroke-width="1"/>
<line x1="96.5" x2="96.5" y1="0" y2="147" stroke="rgba(36,41,46,0.12)" stroke-width="1"/>
<line x1="140.5" x2="140.5" y1="0" y2="147" stroke="rgba(36,41,46,0.12)" stroke-width="1"/>
<line x1="184.5" x2="184.5" y1="0" y2="147" stroke="rgba(36,41,46,0.12)" stroke-width="1"/>
<line x1="229.5" x2="229.5" y1="0" y2="147" stroke="rgba(36,41,46,0.12)" stroke-width="1"/>
<polyline points="0,62.4 2.2,62.4 4.5,62.4 6.7,62.5 8.9,62.5 11.1,62.6 13.4,62.6 15.6,62.5 17.8,62.6 20,62.4 22.3,62.3 24.5,62.6 26.7,62.5 28.9,62.4 31.2,62.5 33.4,62.4 35.6,62.4 37.9,62.4 40.1,62.5 42.3,65 44.5,62.2 46.8,60.6 49,62.7 51.2,62.4 53.4,62.5 55.7,62.7 57.9,62.4 60.1,62.3 62.4,62.3 64.6,62.2 66.8,62.4 69,62.4 71.3,62.4 73.5,62.3 75.7,62.3 77.9,62.4 80.2,62.4 82.4,62.3 84.6,62.2 86.8,62.5 89.1,62.7 91.3,62.5 93.5,62.5 95.8,62.6 98,62.6 100.2,62.6 102.4,62.5 104.7,62.3 106.9,62.4 109.1,62.2 111.3,62.3 113.6,62.1 115.8,62 118,62.3 120.3,62.5 122.5,62.8 124.7,62.8 126.9,62.5 129.2,62.2 131.4,62.4 133.6,62.4 135.8,62.3 138.1,62.4 140.3,62.7 142.5,62.7 144.7,62.5 147,62.4 149.2,62.4 151.4,62.6 153.7,62.5 155.9,62.3 158.1,62.3 160.3,62.3 162.6,62.2 164.8,62.4 167,62.6 169.2,62.8 171.5,62.5 173.7,62.2 175.9,62.4 178.2,62.5 180.4,62.5 182.6,62.5 184.8,62.5 187.1,62.6 189.3,62.3 191.5,62.2 193.7,62.5 196,62.7 198.2,62.7 200.4,62.5 202.6,62.3 204.9,62.4 207.1,62.5 209.3,62.5 211.6,62.6 213.8,62.5 216,62.3 218.2,62.2 220.5,62.3 222.7,62.6 224.9,62.4 227.1,62.4 229.4,62.7 231.6,62.7 233.8,62.6 236.1,62.4 238.3,62.4 240.5,62.4 242.7,62.3 245,62.3 247.2,62.4 249.4,62.5 251.6,62.4 253.9,62.3 256.1,62.4 258.3,62.4 260.5,62.5 262.8,62.7 265,62.7" fill="none" stroke="#7EB26D" stroke-width="1" stroke-linejoin="round"/><polyline points="0,36.8 2.2,36.8 4.5,36.8 6.7,36.8 8.9,36.8 11.1,36.8 13.4,36.8 15.6,36.8 17.8,36.8 20,36.8 22.3,36.8 24.5,36.8 26.7,36.8 28.9,36.8 31.2,36.8 33.4,36.8 35.6,36.8 37.9,36.8 40.1,36.8 42.3,36.8 44.5,36.8 46.8,36.8 49,36.8 51.2,36.8 53.4,36.8 55.7,36.8 57.9,36.8 60.1,36.8 62.4,36.8 64.6,36.8 66.8,36.8 69,36.8 71.3,36.8 73.5,36.8 75.7,36.8 77.9,36.8 80.2,36.8 82.4,36.8 84.6,36.8 86.8,36.8 89.1,36.8 91.3,36.8 93.5,36.8 95.8,36.8 98,36.8 100.2,36.8 102.4,36.8 104.7,36.8 106.9,36.8 109.1,36.8 111.3,36.8 113.6,36.8 115.8,36.8 118,36.8 120.3,36.8 122.5,36.8 124.7,36.8 126.9,36.8 129.2,36.8 131.4,36.8 133.6,36.8 135.8,36.8 138.1,36.8 140.3,36.8 142.5,36.8 144.7,36.8 147,36.8 149.2,36.8 151.4,36.8 153.7,36.8 155.9,36.8 158.1,36.8 160.3,36.8 162.6,36.8 164.8,36.8 167,36.8 169.2,36.8 171.5,36.8 173.7,36.8 175.9,36.8 178.2,36.8 180.4,36.8 182.6,36.8 184.8,36.8 187.1,36.8 189.3,36.8 191.5,36.8 193.7,36.8 196,36.8 198.2,36.8 200.4,36.8 202.6,36.8 204.9,36.8 207.1,36.8 209.3,36.8 211.6,36.8 213.8,36.8 216,36.8 218.2,36.8 220.5,36.8 222.7,36.8 224.9,36.8 227.1,36.8 229.4,36.8 231.6,36.8 233.8,36.8 236.1,36.8 238.3,36.8 240.5,36.8 242.7,36.8 245,36.8 247.2,36.8 249.4,36.8 251.6,36.8 253.9,36.8 256.1,36.8 258.3,36.8 260.5,36.8 262.8,36.8 265,36.8" fill="none" stroke="#EAB839" stroke-width="1" stroke-linejoin="round"/><polyline points="0,147 2.2,147 4.5,147 6.7,147 8.9,147 11.1,147 13.4,147 15.6,147 17.8,147 20,147 22.3,147 24.5,147 26.7,147 28.9,147 31.2,147 33.4,147 35.6,147 37.9,147 40.1,147 42.3,147 44.5,147 46.8,147 49,147 51.2,147 53.4,147 55.7,147 57.9,147 60.1,147 62.4,147 64.6,147 66.8,147 69,147 71.3,147 73.5,147 75.7,147 77.9,147 80.2,147 82.4,147 84.6,147 86.8,147 89.1,147 91.3,147 93.5,147 95.8,147 98,147 100.2,147 102.4,147 104.7,147 106.9,147 109.1,147 111.3,147 113.6,147 115.8,147 118,147 120.3,147 122.5,147 124.7,147 126.9,147 129.2,147 131.4,147 133.6,147 135.8,147 138.1,147 140.3,147 142.5,147 144.7,147 147,147 149.2,147 151.4,147 153.7,147 155.9,147 158.1,147 160.3,147 162.6,147 164.8,147 167,147 169.2,147 171.5,147 173.7,147 175.9,147 178.2,147 180.4,147 182.6,147 184.8,147 187.1,147 189.3,147 191.5,147 193.7,147 196,147 198.2,147 200.4,147 202.6,147 204.9,147 207.1,147 209.3,147 211.6,147 213.8,147 216,147 218.2,147 220.5,147 222.7,147 224.9,147 227.1,147 229.4,147 231.6,147 233.8,147 236.1,147 238.3,147 240.5,147 242.7,147 245,147 247.2,147 249.4,147 251.6,147 253.9,147 256.1,147 258.3,147 260.5,147 262.8,147 265,147" fill="none" stroke="#6ED0E0" stroke-width="1" stroke-linejoin="round"/>
</svg>
<div class="yl" style="right:314px;top:937px">0</div>
<div class="yl" style="right:314px;top:900.2px">5</div>
<div class="yl" style="right:314px;top:863.5px">10</div>
<div class="yl" style="right:314px;top:826.8px">15</div>
<div class="yl" style="right:314px;top:790px">20</div>
<div class="xl" style="left:1083.4px;top:952px">20:30</div>
<div class="xl" style="left:1127.8px;top:952px">20:40</div>
<div class="xl" style="left:1172.2px;top:952px">20:50</div>
<div class="xl" style="left:1216.5px;top:952px">21:00</div>
<div class="xl" style="left:1260.9px;top:952px">21:10</div>
<div class="xl" style="left:1305.3px;top:952px">21:20</div>
<div class="lg" style="left:92px;top:330px;background:#7EB26D"></div>
<div class="lt" style="left:120px;top:322px">distributor-86668df854-4xfwb</div>
<div class="lg" style="left:92px;top:351px;background:#EAB839"></div>
<div class="lt" style="left:120px;top:343px">distributor-86668df854-f4hz8</div>
<div class="lg" style="left:92px;top:372px;background:#6ED0E0"></div>
<div class="lt" style="left:120px;top:364px">distributor-86668df854-ftgkn</div>
<div class="lg" style="left:422px;top:330px;background:#7EB26D"></div>
<div class="lt" style="left:450px;top:322px">distributor-86668df854-4xfwb</div>
<div class="lg" style="left:422px;top:351px;background:#EAB839"></div>
<div class="lt" style="left:450px;top:343px">distributor-86668df854-f4hz8</div>
<div class="lg" style="left:422px;top:372px;background:#6ED0E0"></div>
<div class="lt" style="left:450px;top:364px">distributor-86668df854-ftgkn</div>
<div class="lg" style="left:752px;top:376px;background:#7EB26D"></div>
<div class="lt" style="left:780px;top:368px">avg</div>
<div class="lg" style="left:816px;top:376px;background:#EAB839"></div>
<div class="lt" style="left:844px;top:368px">highest</div>
<div class="lg" style="left:1081px;top:376px;background:#7EB26D"></div>
<div class="lt" style="left:1109px;top:368px">avg</div>
<div class="lg" style="left:1145px;top:376px;background:#EAB839"></div>
<div class="lt" style="left:1173px;top:368px">highest</div>
<div class="lg" style="left:1231px;top:376px;background:#6ED0E0"></div>
<div class="lt" style="left:1259px;top:368px">limit</div>
<div class="lg" style="left:92px;top:634px;background:#7EB26D"></div>
<div class="lt" style="left:120px;top:626px">querier-77ff595bf8-k67ds</div>
<div class="lg" style="left:92px;top:655px;background:#EAB839"></div>
<div class="lt" style="left:120px;top:647px">querier-burst-6f785b8c44-sx2gp</div>
<div class="lg" style="left:92px;top:676px;background:#6ED0E0"></div>
<div class="lt" style="left:120px;top:668px">query-frontend-6bb474c87f-67jhs</div>
<div class="lg" style="left:422px;top:634px;background:#7EB26D"></div>
<div class="lt" style="left:450px;top:626px">querier-77ff595bf8-k67ds</div>
<div class="lg" style="left:422px;top:655px;background:#EAB839"></div>
<div class="lt" style="left:450px;top:647px">querier-burst-6f785b8c44-sx2gp</div>
<div class="lg" style="left:422px;top:676px;background:#6ED0E0"></div>
<div class="lt" style="left:450px;top:668px">query-frontend-6bb474c87f-67jhs</div>
<div class="lg" style="left:752px;top:680px;background:#7EB26D"></div>
<div class="lt" style="left:780px;top:672px">avg</div>
<div class="lg" style="left:816px;top:680px;background:#EAB839"></div>
<div class="lt" style="left:844px;top:672px">highest</div>
<div class="lg" style="left:1081px;top:680px;background:#7EB26D"></div>
<div class="lt" style="left:1109px;top:672px">avg</div>
<div class="lg" style="left:1145px;top:680px;background:#EAB839"></div>
<div class="lt" style="left:1173px;top:672px">highest</div>
<div class="lg" style="left:1231px;top:680px;background:#6ED0E0"></div>
<div class="lt" style="left:1259px;top:672px">limit</div>
<div class="lg" style="left:92px;top:938px;background:#7EB26D"></div>
<div class="lt" style="left:120px;top:930px">compactor-0</div>
<div class="lg" style="left:206px;top:938px;background:#EAB839"></div>
<div class="lt" style="left:234px;top:930px">compactor-1</div>
<div class="lg" style="left:92px;top:959px;background:#6ED0E0"></div>
<div class="lt" style="left:120px;top:951px">overrides-exporter-6ff55bf678-62rc6</div>
<div class="lg" style="left:92px;top:980px;background:#EF843C"></div>
<div class="lt" style="left:120px;top:972px">query-scheduler-6c86d6cb89-8p2tw</div>
<div class="lg" style="left:422px;top:938px;background:#7EB26D"></div>
<div class="lt" style="left:450px;top:930px">compactor-0</div>
<div class="lg" style="left:536px;top:938px;background:#EAB839"></div>
<div class="lt" style="left:564px;top:930px">compactor-1</div>
<div class="lg" style="left:422px;top:959px;background:#6ED0E0"></div>
<div class="lt" style="left:450px;top:951px">overrides-exporter-6ff55bf678-62rc6</div>
<div class="lg" style="left:422px;top:980px;background:#EF843C"></div>
<div class="lt" style="left:450px;top:972px">query-scheduler-6c86d6cb89-8p2tw</div>
<div class="lg" style="left:752px;top:984px;background:#7EB26D"></div>
<div class="lt" style="left:780px;top:976px">avg</div>
<div class="lg" style="left:816px;top:984px;background:#EAB839"></div>
<div class="lt" style="left:844px;top:976px">highest</div>
<div class="lg" style="left:1081px;top:984px;background:#7EB26D"></div>
<div class="lt" style="left:1109px;top:976px">avg</div>
<div class="lg" style="left:1145px;top:984px;background:#EAB839"></div>
<div class="lt" style="left:1173px;top:976px">highest</div>
<div class="lg" style="left:1231px;top:984px;background:#6ED0E0"></div>
<div class="lt" style="left:1259px;top:976px">limit</div>
</body></html>
